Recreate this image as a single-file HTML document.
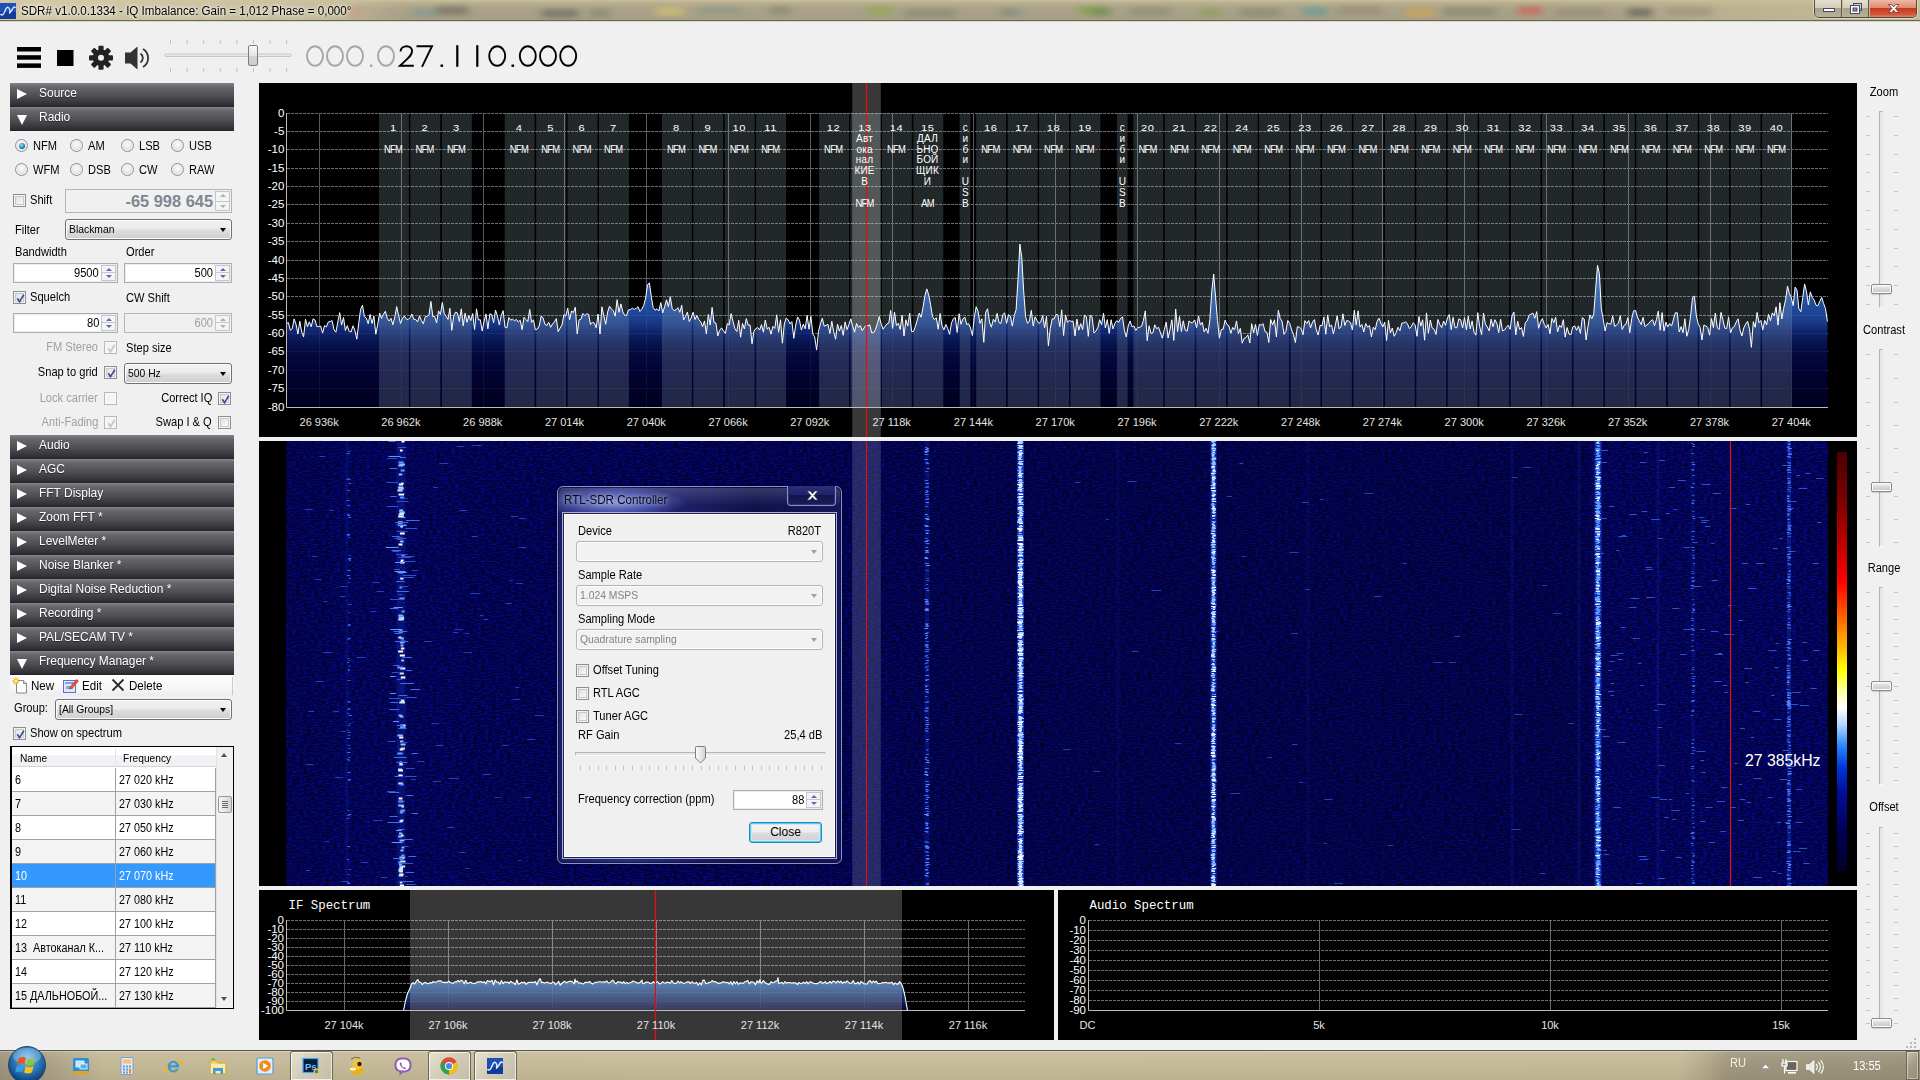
<!DOCTYPE html>
<html><head><meta charset="utf-8"><title>SDR#</title>
<style>
*{box-sizing:border-box;margin:0;padding:0}
html,body{width:1920px;height:1080px;overflow:hidden;background:#f0f0f0;font-family:"Liberation Sans",sans-serif;font-size:11px;color:#000}
.a{position:absolute}
.t{position:absolute;white-space:nowrap;line-height:14px;height:14px;transform:scaleX(.925);transform-origin:0 0}
.t.r{transform-origin:100% 0}
.g{color:#a0a0a0}
.hd{position:absolute;left:10px;width:224px;height:24px;background:linear-gradient(#86868a 0%,#6a6a6e 12%,#4d4d52 55%,#2e2e34 92%,#222228 100%);color:#fff;font-size:13px;line-height:20px;padding-left:29px;white-space:nowrap;text-shadow:0 1px 1px rgba(0,0,0,.5)}
.hd span{display:inline-block;transform:scaleX(.92);transform-origin:0 50%}
.hd i{position:absolute;left:7px;top:6px;width:0;height:0;border-left:10px solid #fff;border-top:5.5px solid transparent;border-bottom:5.5px solid transparent}
.hd i.d{left:7px;top:8px;border-top:10px solid #fff;border-left:5.5px solid transparent;border-right:5.5px solid transparent;border-bottom:0}
.rb{position:absolute;width:13px;height:13px;border-radius:50%;border:1px solid #8e8f8f;background:radial-gradient(circle at 50% 40%,#fdfdfd 0%,#e9e9e9 45%,#c8c8c8 100%);box-shadow:inset 0 0 0 1px #f3f3f3}
.rb.on:after{content:"";position:absolute;left:2.5px;top:2.5px;width:6px;height:6px;border-radius:50%;background:radial-gradient(circle at 40% 35%,#8fe0f7,#1c7fb5 60%,#0b3e66)}
.cb{position:absolute;width:13px;height:13px;border:1px solid #8e8f8f;background:linear-gradient(135deg,#d8d8d8,#f6f6f6 70%,#fff);box-shadow:inset 0 0 0 1px #f4f4f4, inset 0 0 0 2px #c9c9c9}
.cb.dis{border-color:#b8b8b8;background:#f4f4f4;box-shadow:inset 0 0 0 1px #fafafa}
.cb svg{position:absolute;left:1px;top:1px}
.nb{position:absolute;height:20px;border:1px solid #abadb3;background:#fff;box-shadow:inset 0 0 0 1px #e9ecf0}
.nb.dis{background:#f0f0f0;border-color:#b5b5b5;box-shadow:none}
.nb .v{position:absolute;right:18px;top:2px;line-height:14px;font-size:12px;transform:scaleX(.925);transform-origin:100% 0}
.nb .sp{position:absolute;right:1px;top:1px;width:15px;height:16px;border:1px solid #c6c6c6;background:#f4f4f4}
.nb .sp:before{content:"";position:absolute;left:3.5px;top:2px;border-left:3px solid transparent;border-right:3px solid transparent;border-bottom:3px solid #5a6cb4}
.nb .sp:after{content:"";position:absolute;left:3.5px;bottom:2px;border-left:3px solid transparent;border-right:3px solid transparent;border-top:3px solid #5a6cb4}
.nb .sp i{position:absolute;left:0;right:0;top:6px;height:1px;background:#c6c6c6}
.nb.dis .sp:before{border-bottom-color:#b0b0b0}.nb.dis .sp:after{border-top-color:#b0b0b0}
.co span{display:inline-block;transform:scaleX(.9);transform-origin:0 50%}
.co{position:absolute;height:21px;border:1px solid #707070;border-radius:3px;background:linear-gradient(#f2f2f2 0%,#ebebeb 48%,#dddddd 52%,#cfcfcf 100%);box-shadow:inset 0 0 0 1px #fcfcfc;font-size:11.5px;line-height:18px;padding-left:3px;white-space:nowrap}
.co:after{content:"";position:absolute;right:5px;top:8px;border-left:3.5px solid transparent;border-right:3.5px solid transparent;border-top:4px solid #000}
.co.dis{border-color:#b4b4b4;background:#f2f2f2;color:#838383}
.co.dis:after{border-top-color:#a0a0a0}
.blk{position:absolute;background:#000}
.vs{position:absolute;width:4px;border:1px solid #b0b0b0;border-right-color:#e8e8e8;border-bottom-color:#fff;background:#e7e7e7;border-radius:1px}
.vt{position:absolute;width:21px;height:10px;border:1px solid #8a8a8a;border-radius:2px;background:linear-gradient(#f8f8f8,#d8d8d8 50%,#c8c8c8);box-shadow:inset 0 0 0 1px #fcfcfc,0 1px 1px rgba(0,0,0,.15)}
.tk{position:absolute;width:4px;height:1px;background:#c4c4c4}
</style></head><body>
<div class="a" id="tb" style="left:0;top:0;width:1920px;height:22px;background:linear-gradient(#c8be9a 0%,#b8ae8e 15%,#aaa289 40%,#a59e87 100%)">
<div class="a" style="left:0;top:0;width:1920px;height:22px;background:linear-gradient(90deg,rgba(214,204,170,.9) 0%,rgba(205,195,160,.75) 17%,rgba(190,180,150,0) 21%,rgba(190,180,150,0) 84%,rgba(200,190,152,.55) 90%,rgba(205,194,156,.8) 100%)"></div>
<svg class="a" style="left:0;top:0" width="1920" height="20" viewBox="0 0 1920 20"><defs><filter id="bl" x="-10%" y="-50%" width="120%" height="200%"><feGaussianBlur stdDeviation="4 2"/></filter></defs><g filter="url(#bl)" opacity=".6"><rect x="347" y="7" width="16" height="9" fill="#c89a86"/><rect x="413" y="8" width="24" height="9" fill="#7f9a94"/><rect x="436" y="6" width="32" height="9" fill="#6f6a5c"/><rect x="542" y="9" width="36" height="9" fill="#6a6658"/><rect x="590" y="9" width="20" height="9" fill="#8a8470"/><rect x="656" y="7" width="28" height="9" fill="#d8c66a"/><rect x="698" y="6" width="44" height="9" fill="#8e9a84"/><rect x="770" y="6" width="20" height="9" fill="#8a8672"/><rect x="868" y="6" width="24" height="9" fill="#8fa84e"/><rect x="905" y="9" width="50" height="9" fill="#8a8672"/><rect x="1000" y="8" width="20" height="9" fill="#7f8a7a"/><rect x="1078" y="6" width="24" height="9" fill="#7ea83e"/><rect x="1130" y="7" width="40" height="9" fill="#8f8a74"/><rect x="1200" y="8" width="20" height="9" fill="#8aa04e"/><rect x="1240" y="8" width="40" height="9" fill="#8c8670"/><rect x="1303" y="7" width="24" height="9" fill="#5f9a9c"/><rect x="1338" y="6" width="44" height="9" fill="#948c74"/><rect x="1406" y="8" width="28" height="9" fill="#d8a44e"/><rect x="1444" y="7" width="52" height="9" fill="#8a846e"/><rect x="1518" y="6" width="24" height="9" fill="#d05a52"/><rect x="1556" y="8" width="48" height="9" fill="#948c76"/><rect x="1628" y="8" width="24" height="9" fill="#5e5a4e"/><rect x="1668" y="7" width="44" height="9" fill="#9a927a"/><rect x="1090" y="7" width="20" height="9" fill="#5f8a3a"/></g></svg>
<div class="a" style="left:0;top:20px;width:1920px;height:1px;background:#6e6752"></div>
<div class="a" style="left:0;top:21px;width:1920px;height:1px;background:#d9d4c4"></div>
<svg class="a" style="left:0;top:3px" width="16" height="16" viewBox="0 0 16 16"><rect width="16" height="16" fill="#1c50b8"/><rect y="9" width="16" height="7" fill="#123c96"/><path d="M0.5 11 C2 13,3.5 12,5 8 S8 3,9.5 6 S8 12,10.5 9 S13.5 2,15.5 5" fill="none" stroke="#dfe8f5" stroke-width="1.3"/></svg>
<div class="t" style="left:21px;top:4px;font-size:12px;transform:scaleX(.967);color:#000;text-shadow:0 0 6px #fff,0 0 3px #fff">SDR# v1.0.0.1334 - IQ Imbalance: Gain = 1,012 Phase = 0,000&deg;</div>
<!-- caption buttons -->
<div class="a" style="left:1814px;top:0;width:103px;height:18px;border:1px solid #4d4a40;border-top:0;border-radius:0 0 5px 5px;overflow:hidden;box-shadow:0 0 0 1px rgba(255,255,255,.45)">
<div class="a" style="left:0;top:0;width:27px;height:17px;background:linear-gradient(#e4dfcf 0%,#d5cfbb 45%,#aaa28a 50%,#b9b199 100%);border-right:1px solid #5d594b"></div>
<div class="a" style="left:28px;top:0;width:26px;height:17px;background:linear-gradient(#e4dfcf 0%,#d5cfbb 45%,#aaa28a 50%,#b9b199 100%);border-right:1px solid #5d594b"></div>
<div class="a" style="left:55px;top:0;width:47px;height:17px;background:linear-gradient(#f0b9a6 0%,#e08a72 45%,#c8391c 50%,#d0583a 85%,#e0866a 100%)"></div>
<svg class="a" style="left:0;top:0" width="102" height="17" viewBox="0 0 102 17"><rect x="8.5" y="8.5" width="11" height="3" fill="#fff" stroke="#454a63" stroke-width="1"/><rect x="38.500" y="3.500" width="8" height="7" fill="none" stroke="#454a63" stroke-width="1.0"/><rect x="35.500" y="5.500" width="9" height="8" fill="#fff" stroke="#454a63" stroke-width="1"/><rect x="38" y="8" width="4" height="3" fill="#9a937c" stroke="#454a63" stroke-width="1"/><path d="M73.5 4.500 l3.200 0 l2 2.400 l2 -2.400 l3.200 0 l-3.500 4 l3.500 4 l-3.200 0 l-2 -2.400 l-2 2.400 l-3.200 0 l3.500 -4 z" fill="#fff" stroke="#5a3a3a" stroke-width="0.800"/></svg>
</div>
</div>
<svg class="a" style="left:0;top:36px" width="300" height="44" viewBox="0 36 300 44">
<rect x="17" y="47" width="24" height="4.500" fill="#000"/><rect x="17" y="55.200" width="24" height="4.500" fill="#000"/><rect x="17" y="63.400" width="24" height="4.500" fill="#000"/>
<rect x="57" y="50" width="16.500" height="16" fill="#000"/>
<g transform="translate(101,57.800)" fill="#222">
<circle r="8.200"/>
<g id="th"><rect x="-2.600" y="-12" width="5.200" height="6" rx="1"/></g>
<use href="#th" transform="rotate(45)"/><use href="#th" transform="rotate(90)"/><use href="#th" transform="rotate(135)"/><use href="#th" transform="rotate(180)"/><use href="#th" transform="rotate(225)"/><use href="#th" transform="rotate(270)"/><use href="#th" transform="rotate(315)"/>
<circle r="3" fill="#f0f0f0"/></g>
<path d="M125 52.500 h5.500 l7 -6 v23 l-7 -6 h-5.500 z" fill="#333"/>
<path d="M140.500 53.500 a5.500 5.500 0 0 1 0 9" fill="none" stroke="#333" stroke-width="1.800"/>
<path d="M143 49 a10.500 10.500 0 0 1 0 18" fill="none" stroke="#333" stroke-width="1.800"/>
<g stroke="#c2c2c2" stroke-width="1"><path d="M170.5 40v4M170.5 68v4"/><path d="M187.1 40v4M187.1 68v4"/><path d="M203.7 40v4M203.7 68v4"/><path d="M220.3 40v4M220.3 68v4"/><path d="M236.9 40v4M236.9 68v4"/><path d="M253.5 40v4M253.5 68v4"/><path d="M270.1 40v4M270.1 68v4"/><path d="M286.7 40v4M286.7 68v4"/></g>
<rect x="165" y="54" width="126" height="2.500" rx="1" fill="#e9e9e9" stroke="#bcbcbc" stroke-width=".8"/>
<rect x="248.500" y="45.500" width="9" height="20" rx="1.500" fill="url(#thg)" stroke="#7d7d7d"/>
<defs><linearGradient id="thg" x1="0" y1="0" x2="0" y2="1"><stop offset="0" stop-color="#fafafa"/><stop offset=".5" stop-color="#e6e6e6"/><stop offset=".55" stop-color="#d2d2d2"/><stop offset="1" stop-color="#cdcdcd"/></linearGradient></defs>
</svg>
<svg class="a" style="left:300px;top:40px" width="290" height="34" viewBox="300 40 290 34"><ellipse cx="315.0" cy="56" rx="8" ry="9.800" fill="none" stroke="#a6a6a6" stroke-width="1.900"/><ellipse cx="335.0" cy="56" rx="8" ry="9.800" fill="none" stroke="#a6a6a6" stroke-width="1.900"/><ellipse cx="355.0" cy="56" rx="8" ry="9.800" fill="none" stroke="#a6a6a6" stroke-width="1.900"/><rect x="370" y="64.500" width="2.400" height="2.400" fill="#a6a6a6"/><ellipse cx="386.0" cy="56" rx="8" ry="9.800" fill="none" stroke="#a6a6a6" stroke-width="1.900"/><path d="M400.500 51.500 C401 44.500,412.500 44.500,412 51.500 C412 55.500,408 58,400 65.800 H413.800" fill="none" stroke="#000" stroke-width="1.900"/><path d="M416.500 46.200 H432 L422 66.800" fill="none" stroke="#000" stroke-width="1.900"/><rect x="440.500" y="64.500" width="2.600" height="2.400" fill="#000"/><rect x="456.200" y="45.200" width="2.200" height="21.600" fill="#000"/><rect x="476.200" y="45.200" width="2.200" height="21.600" fill="#000"/><ellipse cx="497.2" cy="56" rx="8" ry="9.800" fill="none" stroke="#000" stroke-width="1.900"/><rect x="511.500" y="64.500" width="2.600" height="2.400" fill="#000"/><ellipse cx="527.8" cy="56" rx="8" ry="9.800" fill="none" stroke="#000" stroke-width="1.900"/><ellipse cx="548.0" cy="56" rx="8" ry="9.800" fill="none" stroke="#000" stroke-width="1.900"/><ellipse cx="568.2" cy="56" rx="8" ry="9.800" fill="none" stroke="#000" stroke-width="1.900"/></svg>
<div class="hd" style="top:83px"><i></i><span>Source</span></div>
<div class="hd" style="top:107px"><i class="d"></i><span>Radio</span></div>
<div class="rb on" style="left:15px;top:139px"></div><div class="t" style="left:33px;top:139px;font-size:12px">NFM</div><div class="rb" style="left:15px;top:163px"></div><div class="t" style="left:33px;top:163px;font-size:12px">WFM</div>
<div class="rb" style="left:70px;top:139px"></div><div class="t" style="left:88px;top:139px;font-size:12px">AM</div><div class="rb" style="left:70px;top:163px"></div><div class="t" style="left:88px;top:163px;font-size:12px">DSB</div>
<div class="rb" style="left:121px;top:139px"></div><div class="t" style="left:139px;top:139px;font-size:12px">LSB</div><div class="rb" style="left:121px;top:163px"></div><div class="t" style="left:139px;top:163px;font-size:12px">CW</div>
<div class="rb" style="left:171px;top:139px"></div><div class="t" style="left:189px;top:139px;font-size:12px">USB</div><div class="rb" style="left:171px;top:163px"></div><div class="t" style="left:189px;top:163px;font-size:12px">RAW</div>
<div class="cb" style="left:13px;top:194px"></div><div class="t" style="left:30px;top:193px;font-size:12px">Shift</div><div class="nb dis" style="left:65px;top:189px;width:167px;height:24px"><div class="v" style="font-size:16.400px;font-weight:bold;color:#7f8790;top:4px;right:18px;transform:none">-65 998 645</div><div class="sp" style="height:20px"><i style="top:9px"></i></div></div>
<div class="t" style="left:15px;top:223px;font-size:12px">Filter</div><div class="co" style="left:65px;top:219px;width:167px"><span>Blackman</span></div>
<div class="t" style="left:15px;top:245px;font-size:12px">Bandwidth</div><div class="t" style="left:126px;top:245px;font-size:12px">Order</div><div class="nb" style="left:13px;top:263px;width:105px"><div class="v">9500</div><div class="sp"><i></i></div></div><div class="nb" style="left:124px;top:263px;width:108px"><div class="v">500</div><div class="sp"><i></i></div></div>
<div class="cb" style="left:13px;top:291px"><svg width="11" height="11" viewBox="0 0 11 11"><path d="M2.300 5.200 L4.500 8.600 L8.800 1.800" fill="none" stroke="#3c4e9a" stroke-width="1.700"/></svg></div><div class="t" style="left:30px;top:290px;font-size:12px">Squelch</div><div class="t" style="left:126px;top:291px;font-size:12px">CW Shift</div><div class="nb" style="left:13px;top:313px;width:105px"><div class="v">80</div><div class="sp"><i></i></div></div><div class="nb dis" style="left:124px;top:313px;width:108px"><div class="v g">600</div><div class="sp"><i></i></div></div>
<div class="t r g" style="right:1822px;top:340px;font-size:12px">FM Stereo</div><div class="cb dis" style="left:104px;top:341px"><svg width="11" height="11" viewBox="0 0 11 11"><path d="M2.300 5.200 L4.500 8.600 L8.800 1.800" fill="none" stroke="#c4c4c4" stroke-width="1.700"/></svg></div><div class="t" style="left:126px;top:341px;font-size:12px">Step size</div>
<div class="t r" style="right:1822px;top:365px;font-size:12px">Snap to grid</div><div class="cb" style="left:104px;top:366px"><svg width="11" height="11" viewBox="0 0 11 11"><path d="M2.300 5.200 L4.500 8.600 L8.800 1.800" fill="none" stroke="#3c4e9a" stroke-width="1.700"/></svg></div><div class="co" style="left:124px;top:363px;width:108px"><span>500 Hz</span></div>
<div class="t r g" style="right:1822px;top:391px;font-size:12px">Lock carrier</div><div class="cb dis" style="left:104px;top:392px"></div><div class="t r" style="right:1708px;top:391px;font-size:12px">Correct IQ</div><div class="cb" style="left:218px;top:392px"><svg width="11" height="11" viewBox="0 0 11 11"><path d="M2.300 5.200 L4.500 8.600 L8.800 1.800" fill="none" stroke="#3c4e9a" stroke-width="1.700"/></svg></div>
<div class="t r g" style="right:1822px;top:415px;font-size:12px">Anti-Fading</div><div class="cb dis" style="left:104px;top:416px"><svg width="11" height="11" viewBox="0 0 11 11"><path d="M2.300 5.200 L4.500 8.600 L8.800 1.800" fill="none" stroke="#c4c4c4" stroke-width="1.700"/></svg></div><div class="t r" style="right:1708px;top:415px;font-size:12px">Swap I &amp; Q</div><div class="cb" style="left:218px;top:416px"></div>
<div class="hd" style="top:435px"><i></i><span>Audio</span></div>
<div class="hd" style="top:459px"><i></i><span>AGC</span></div>
<div class="hd" style="top:483px"><i></i><span>FFT Display</span></div>
<div class="hd" style="top:507px"><i></i><span>Zoom FFT *</span></div>
<div class="hd" style="top:531px"><i></i><span>LevelMeter *</span></div>
<div class="hd" style="top:555px"><i></i><span>Noise Blanker *</span></div>
<div class="hd" style="top:579px"><i></i><span>Digital Noise Reduction *</span></div>
<div class="hd" style="top:603px"><i></i><span>Recording *</span></div>
<div class="hd" style="top:627px"><i></i><span>PAL/SECAM TV *</span></div>
<div class="hd" style="top:651px"><i class="d"></i><span>Frequency Manager *</span></div>
<div class="a" style="left:10px;top:675px;width:224px;height:21px;background:linear-gradient(#fdfdfd,#f7f7f7 60%,#ececec)"></div>
<div class="a" style="left:232px;top:677px;width:1px;height:18px;background:#c8c8c8"></div>
<svg class="a" style="left:12px;top:677px" width="16" height="17" viewBox="0 0 16 17"><path d="M4.500 3.500 h7 l3 3 v9.500 h-10 z" fill="#fdfdfd" stroke="#7b8796"/><path d="M11.500 3.500 v3 h3" fill="#dfe6ee" stroke="#7b8796"/><circle cx="4" cy="4" r="2.200" fill="#ffd21c"/><path d="M4 0v8M0 4h8M1.200 1.200l5.600 5.600M6.800 1.200l-5.600 5.600" stroke="#f7a600" stroke-width="1"/><circle cx="4" cy="4" r="1.400" fill="#fff3a0"/></svg>
<div class="t" style="left:31px;top:679px;font-size:12.5px">New</div>
<svg class="a" style="left:62px;top:677px" width="17" height="17" viewBox="0 0 17 17"><rect x="1.500" y="3.500" width="12" height="12" fill="#dfe9fb" stroke="#5576c9"/><rect x="3" y="5" width="9" height="2" fill="#7f9fe6"/><rect x="4" y="9" width="7" height="3" fill="#8aa6e8"/><path d="M8 10 L14.500 2.500 L16.500 4 L10 11.500 L7.500 12 z" fill="#e8513a" stroke="#b53320" stroke-width=".6"/></svg>
<div class="t" style="left:82px;top:679px;font-size:12.5px">Edit</div>
<svg class="a" style="left:111px;top:678px" width="14" height="14" viewBox="0 0 14 14"><path d="M1.500 1.500 L12.500 12.500 M12.500 1.500 L1.500 12.500" stroke="#2b2b2b" stroke-width="1.800"/></svg>
<div class="t" style="left:129px;top:679px;font-size:12.500px">Delete</div>
<div class="t" style="left:14px;top:701px;font-size:12px">Group:</div>
<div class="co" style="left:55px;top:699px;width:177px"><span>[All Groups]</span></div>
<div class="cb" style="left:13px;top:727px"><svg width="11" height="11" viewBox="0 0 11 11"><path d="M2.300 5.200 L4.500 8.600 L8.800 1.800" fill="none" stroke="#3c4e9a" stroke-width="1.700"/></svg></div><div class="t" style="left:30px;top:726px;font-size:12px">Show on spectrum</div>
<div class="a" style="left:10px;top:746px;width:224px;height:263px;border:1px solid #000;border-left-width:2px;background:#fff"></div><div class="a" style="left:12px;top:747px;width:204px;height:20px;background:linear-gradient(#fff 0%,#fff 40%,#f2f3f5 45%,#eef0f3 100%);border-bottom:1px solid #d5d5d5"></div><div class="a" style="left:115px;top:749px;width:1px;height:16px;background:#e0e3e8"></div><div class="t" style="left:20px;top:751px">Name</div><div class="t" style="left:123px;top:751px">Frequency</div><div class="a" style="left:216px;top:747px;width:17px;height:261px;background:#f0f0f0;border-left:1px solid #e3e3e3"></div><div class="a" style="left:221px;top:753px;width:0;height:0;border-left:3.500px solid transparent;border-right:3.500px solid transparent;border-bottom:4px solid #505050"></div><div class="a" style="left:221px;top:997px;width:0;height:0;border-left:3.500px solid transparent;border-right:3.500px solid transparent;border-top:4px solid #505050"></div><div class="a" style="left:218px;top:796px;width:14px;height:17px;border:1px solid #979797;border-radius:2px;background:linear-gradient(90deg,#f5f5f5,#e6e6e6 50%,#d2d2d2)"><div class="a" style="left:3px;top:4px;width:6px;height:1px;background:#6a6a6a;box-shadow:0 2px 0 #6a6a6a,0 4px 0 #6a6a6a,0 6px 0 #6a6a6a"></div></div><div class="a" style="left:12px;top:768px;width:204px;height:24px;background:#ffffff;border-bottom:1px solid #a0a0a0"></div><div class="t" style="left:15px;top:773px;color:#000;font-size:12px;transform:scaleX(.9)">6</div><div class="t" style="left:119px;top:773px;color:#000;font-size:12px;transform:scaleX(.9)">27 020 kHz</div>
<div class="a" style="left:12px;top:792px;width:204px;height:24px;background:#f3f3f3;border-bottom:1px solid #a0a0a0"></div><div class="t" style="left:15px;top:797px;color:#000;font-size:12px;transform:scaleX(.9)">7</div><div class="t" style="left:119px;top:797px;color:#000;font-size:12px;transform:scaleX(.9)">27 030 kHz</div>
<div class="a" style="left:12px;top:816px;width:204px;height:24px;background:#ffffff;border-bottom:1px solid #a0a0a0"></div><div class="t" style="left:15px;top:821px;color:#000;font-size:12px;transform:scaleX(.9)">8</div><div class="t" style="left:119px;top:821px;color:#000;font-size:12px;transform:scaleX(.9)">27 050 kHz</div>
<div class="a" style="left:12px;top:840px;width:204px;height:24px;background:#f3f3f3;border-bottom:1px solid #a0a0a0"></div><div class="t" style="left:15px;top:845px;color:#000;font-size:12px;transform:scaleX(.9)">9</div><div class="t" style="left:119px;top:845px;color:#000;font-size:12px;transform:scaleX(.9)">27 060 kHz</div>
<div class="a" style="left:12px;top:864px;width:204px;height:24px;background:#3399ff;border-bottom:1px solid #a0a0a0"></div><div class="t" style="left:15px;top:869px;color:#fff;font-size:12px;transform:scaleX(.9)">10</div><div class="t" style="left:119px;top:869px;color:#fff;font-size:12px;transform:scaleX(.9)">27 070 kHz</div>
<div class="a" style="left:12px;top:888px;width:204px;height:24px;background:#f3f3f3;border-bottom:1px solid #a0a0a0"></div><div class="t" style="left:15px;top:893px;color:#000;font-size:12px;transform:scaleX(.9)">11</div><div class="t" style="left:119px;top:893px;color:#000;font-size:12px;transform:scaleX(.9)">27 080 kHz</div>
<div class="a" style="left:12px;top:912px;width:204px;height:24px;background:#ffffff;border-bottom:1px solid #a0a0a0"></div><div class="t" style="left:15px;top:917px;color:#000;font-size:12px;transform:scaleX(.9)">12</div><div class="t" style="left:119px;top:917px;color:#000;font-size:12px;transform:scaleX(.9)">27 100 kHz</div>
<div class="a" style="left:12px;top:936px;width:204px;height:24px;background:#f3f3f3;border-bottom:1px solid #a0a0a0"></div><div class="t" style="left:15px;top:941px;color:#000;font-size:12px;transform:scaleX(.9)">13&nbsp; &#1040;&#1074;&#1090;&#1086;&#1082;&#1072;&#1085;&#1072;&#1083; &#1050;...</div><div class="t" style="left:119px;top:941px;color:#000;font-size:12px;transform:scaleX(.9)">27 110 kHz</div>
<div class="a" style="left:12px;top:960px;width:204px;height:24px;background:#ffffff;border-bottom:1px solid #a0a0a0"></div><div class="t" style="left:15px;top:965px;color:#000;font-size:12px;transform:scaleX(.9)">14</div><div class="t" style="left:119px;top:965px;color:#000;font-size:12px;transform:scaleX(.9)">27 120 kHz</div>
<div class="a" style="left:12px;top:984px;width:204px;height:24px;background:#f3f3f3;border-bottom:1px solid #a0a0a0"></div><div class="t" style="left:15px;top:989px;color:#000;font-size:12px;transform:scaleX(.9)">15 &#1044;&#1040;&#1051;&#1068;&#1053;&#1054;&#1041;&#1054;&#1049;...</div><div class="t" style="left:119px;top:989px;color:#000;font-size:12px;transform:scaleX(.9)">27 130 kHz</div>
<div class="a" style="left:115px;top:768px;width:1px;height:240px;background:#a0a0a0"></div><div class="a" style="left:215px;top:768px;width:1px;height:240px;background:#a0a0a0"></div>
<div class="blk" style="left:259px;top:83px;width:1598px;height:354px"></div><svg class="a" style="left:259px;top:83px" width="1598" height="354" viewBox="259 83 1598 354" font-family="Liberation Sans,sans-serif"><defs><linearGradient id="sg" gradientUnits="userSpaceOnUse" x1="0" y1="113" x2="0" y2="407"><stop offset="0" stop-color="#8cc4ff"/><stop offset=".45" stop-color="#4390ed"/><stop offset=".5625" stop-color="#3374cf"/><stop offset=".6875" stop-color="#214dac"/><stop offset=".72" stop-color="#1a3e94"/><stop offset=".75" stop-color="#0f2579"/><stop offset=".78" stop-color="#09175d"/><stop offset=".8125" stop-color="#060c4a"/><stop offset=".875" stop-color="#03033c"/><stop offset="1" stop-color="#000025"/></linearGradient></defs><path d="M287 113.5H1828" stroke="#808080" stroke-width="1" stroke-dasharray="3 1" opacity=".85"/><path d="M287 131.5H1828" stroke="#808080" stroke-width="1" stroke-dasharray="3 1" opacity=".85"/><path d="M287 149.5H1828" stroke="#808080" stroke-width="1" stroke-dasharray="3 1" opacity=".85"/><path d="M287 168.5H1828" stroke="#808080" stroke-width="1" stroke-dasharray="3 1" opacity=".85"/><path d="M287 186.5H1828" stroke="#808080" stroke-width="1" stroke-dasharray="3 1" opacity=".85"/><path d="M287 204.5H1828" stroke="#808080" stroke-width="1" stroke-dasharray="3 1" opacity=".85"/><path d="M287 223.5H1828" stroke="#808080" stroke-width="1" stroke-dasharray="3 1" opacity=".85"/><path d="M287 241.5H1828" stroke="#808080" stroke-width="1" stroke-dasharray="3 1" opacity=".85"/><path d="M287 260.5H1828" stroke="#808080" stroke-width="1" stroke-dasharray="3 1" opacity=".85"/><path d="M287 278.5H1828" stroke="#808080" stroke-width="1" stroke-dasharray="3 1" opacity=".85"/><path d="M287 296.5H1828" stroke="#808080" stroke-width="1" stroke-dasharray="3 1" opacity=".85"/><path d="M287 315.5H1828" stroke="#808080" stroke-width="1" stroke-dasharray="3 1" opacity=".85"/><path d="M287 333.5H1828" stroke="#808080" stroke-width="1" stroke-dasharray="3 1" opacity=".85"/><path d="M287 351.5H1828" stroke="#808080" stroke-width="1" stroke-dasharray="3 1" opacity=".85"/><path d="M287 370.5H1828" stroke="#808080" stroke-width="1" stroke-dasharray="3 1" opacity=".85"/><path d="M287 388.5H1828" stroke="#808080" stroke-width="1" stroke-dasharray="3 1" opacity=".85"/><path d="M287 407.5H1828" stroke="#808080" stroke-width="1" stroke-dasharray="3 1" opacity=".85"/><path d="M319.5 113V407" stroke="#5c5c5c" stroke-width="1"/><path d="M401.5 113V407" stroke="#5c5c5c" stroke-width="1"/><path d="M483.5 113V407" stroke="#5c5c5c" stroke-width="1"/><path d="M564.5 113V407" stroke="#5c5c5c" stroke-width="1"/><path d="M646.5 113V407" stroke="#5c5c5c" stroke-width="1"/><path d="M728.5 113V407" stroke="#5c5c5c" stroke-width="1"/><path d="M810.5 113V407" stroke="#5c5c5c" stroke-width="1"/><path d="M892.5 113V407" stroke="#5c5c5c" stroke-width="1"/><path d="M973.5 113V407" stroke="#5c5c5c" stroke-width="1"/><path d="M1055.5 113V407" stroke="#5c5c5c" stroke-width="1"/><path d="M1137.5 113V407" stroke="#5c5c5c" stroke-width="1"/><path d="M1219.5 113V407" stroke="#5c5c5c" stroke-width="1"/><path d="M1301.5 113V407" stroke="#5c5c5c" stroke-width="1"/><path d="M1382.5 113V407" stroke="#5c5c5c" stroke-width="1"/><path d="M1464.5 113V407" stroke="#5c5c5c" stroke-width="1"/><path d="M1546.5 113V407" stroke="#5c5c5c" stroke-width="1"/><path d="M1628.5 113V407" stroke="#5c5c5c" stroke-width="1"/><path d="M1710.5 113V407" stroke="#5c5c5c" stroke-width="1"/><path d="M1791.5 113V407" stroke="#5c5c5c" stroke-width="1"/><path d="M286.5 323.5 L288.4 322.6 L290.3 330.2 L292.2 328.8 L294.1 318.9 L296.0 324.1 L297.9 334.0 L299.8 321.3 L301.7 332.0 L303.6 336.9 L305.5 319.2 L307.4 326.7 L309.3 321.8 L311.2 326.7 L313.1 318.8 L315.0 320.0 L316.9 326.6 L318.8 326.5 L320.7 326.0 L322.6 333.1 L324.5 325.7 L326.4 326.8 L328.3 322.0 L330.2 321.5 L332.1 320.6 L334.0 329.8 L335.9 332.2 L337.8 322.1 L339.7 312.6 L341.6 325.0 L343.5 317.4 L345.4 330.5 L347.3 325.6 L349.2 331.5 L351.1 331.9 L353.0 325.8 L354.9 330.5 L356.8 339.2 L358.7 323.4 L360.6 309.3 L362.5 305.2 L364.4 316.6 L366.3 318.0 L368.2 323.7 L370.1 314.4 L372.0 323.5 L373.9 316.0 L375.8 334.2 L377.7 324.6 L379.6 313.1 L381.5 318.4 L383.4 314.2 L385.3 311.3 L387.2 318.2 L389.1 321.0 L391.0 318.3 L392.9 324.8 L394.8 316.9 L396.7 306.6 L398.6 315.5 L400.5 323.4 L402.4 318.7 L404.3 316.1 L406.2 318.9 L408.1 319.7 L410.0 317.7 L411.9 314.0 L413.8 319.3 L415.7 319.4 L417.6 321.9 L419.5 315.9 L421.4 320.5 L423.3 323.9 L425.2 316.9 L427.1 316.3 L429.0 314.8 L430.9 301.4 L432.8 316.5 L434.7 316.6 L436.6 322.9 L438.5 310.9 L440.4 314.5 L442.3 302.4 L444.2 313.3 L446.1 316.3 L448.0 319.4 L449.9 308.3 L451.8 330.3 L453.7 316.0 L455.6 312.1 L457.5 313.1 L459.4 321.6 L461.3 308.8 L463.2 325.8 L465.1 313.2 L467.0 322.3 L468.9 315.6 L470.8 320.6 L472.7 313.5 L474.6 329.5 L476.5 308.8 L478.4 320.0 L480.3 319.7 L482.2 331.0 L484.1 321.2 L486.0 313.9 L487.9 328.8 L489.8 313.9 L491.7 314.5 L493.6 322.7 L495.5 310.1 L497.4 315.9 L499.3 324.9 L501.2 315.5 L503.1 310.6 L505.0 327.2 L506.9 327.9 L508.8 317.6 L510.7 320.1 L512.6 319.2 L514.5 320.8 L516.4 319.4 L518.3 322.0 L520.2 320.2 L522.1 329.6 L524.0 317.2 L525.9 319.6 L527.8 321.6 L529.7 309.4 L531.6 322.4 L533.5 319.8 L535.4 329.8 L537.3 329.0 L539.2 326.1 L541.1 316.2 L543.0 317.7 L544.9 324.3 L546.8 325.5 L548.7 322.3 L550.6 327.3 L552.5 324.0 L554.4 321.9 L556.3 318.6 L558.2 331.7 L560.1 328.1 L562.0 325.0 L563.9 314.6 L565.8 316.2 L567.7 308.0 L569.6 319.8 L571.5 311.0 L573.4 312.5 L575.3 307.2 L577.2 333.8 L579.1 319.8 L581.0 319.2 L582.9 313.5 L584.8 315.6 L586.7 313.9 L588.6 314.3 L590.5 324.5 L592.4 322.3 L594.3 323.1 L596.2 327.8 L598.1 314.0 L600.0 334.0 L601.9 306.8 L603.8 315.6 L605.7 324.3 L607.6 312.1 L609.5 306.2 L611.4 309.1 L613.3 310.7 L615.2 316.2 L617.1 299.7 L619.0 312.3 L620.9 303.9 L622.8 311.9 L624.7 315.3 L626.6 315.4 L628.5 309.8 L630.4 309.7 L632.3 308.2 L634.2 309.4 L636.1 308.4 L638.0 306.7 L639.9 311.4 L641.8 309.2 L643.7 305.4 L645.6 298.2 L647.5 284.7 L649.4 283.0 L651.3 296.7 L653.2 307.6 L655.1 310.2 L657.0 308.8 L658.9 310.9 L660.8 302.6 L662.7 312.9 L664.6 306.8 L666.5 299.8 L668.4 306.6 L670.3 296.7 L672.2 308.4 L674.1 310.7 L676.0 309.8 L677.9 307.7 L679.8 312.3 L681.7 305.2 L683.6 319.9 L685.5 316.6 L687.4 312.1 L689.3 321.6 L691.2 317.9 L693.1 312.2 L695.0 319.5 L696.9 315.6 L698.8 319.6 L700.7 321.8 L702.6 326.6 L704.5 320.9 L706.4 333.8 L708.3 314.5 L710.2 325.0 L712.1 307.4 L714.0 322.5 L715.9 323.1 L717.8 335.9 L719.7 330.3 L721.6 327.9 L723.5 331.0 L725.4 333.5 L727.3 323.6 L729.2 324.9 L731.1 313.6 L733.0 321.3 L734.9 328.8 L736.8 331.5 L738.7 320.3 L740.6 337.2 L742.5 323.4 L744.4 328.9 L746.3 318.6 L748.2 325.2 L750.1 325.0 L752.0 343.8 L753.9 331.5 L755.8 328.6 L757.7 327.6 L759.6 330.0 L761.5 324.6 L763.4 332.2 L765.3 320.0 L767.2 329.2 L769.1 327.3 L771.0 334.2 L772.9 326.4 L774.8 328.4 L776.7 314.8 L778.6 332.3 L780.5 319.8 L782.4 343.2 L784.3 324.1 L786.2 318.1 L788.1 319.7 L790.0 323.9 L791.9 321.6 L793.8 338.3 L795.7 325.1 L797.6 316.9 L799.5 320.1 L801.4 330.1 L803.3 324.0 L805.2 328.8 L807.1 315.3 L809.0 329.2 L810.9 316.3 L812.8 334.0 L814.7 336.8 L816.6 350.1 L818.5 331.3 L820.4 323.9 L822.3 318.2 L824.2 326.1 L826.1 325.5 L828.0 324.3 L829.9 333.5 L831.8 321.3 L833.7 331.6 L835.6 339.2 L837.5 324.1 L839.4 331.1 L841.3 325.5 L843.2 335.3 L845.1 321.9 L847.0 329.7 L848.9 324.7 L850.8 318.8 L852.7 326.4 L854.6 332.2 L856.5 323.5 L858.4 327.5 L860.3 325.7 L862.2 330.6 L864.1 327.9 L866.0 325.3 L867.9 325.9 L869.8 324.8 L871.7 332.8 L873.6 332.6 L875.5 329.6 L877.4 323.5 L879.3 316.5 L881.2 324.2 L883.1 329.2 L885.0 326.5 L886.9 323.9 L888.8 323.1 L890.7 310.4 L892.6 328.4 L894.5 312.0 L896.4 325.5 L898.3 323.2 L900.2 329.5 L902.1 315.2 L904.0 336.0 L905.9 319.8 L907.8 326.0 L909.7 313.2 L911.6 331.6 L913.5 331.4 L915.4 326.4 L917.3 320.1 L919.2 313.2 L921.1 317.2 L923.0 307.6 L924.9 295.7 L926.8 288.9 L928.7 294.8 L930.6 304.8 L932.5 316.7 L934.4 319.7 L936.3 317.8 L938.2 329.2 L940.1 313.5 L942.0 325.7 L943.9 329.9 L945.8 324.4 L947.7 328.5 L949.6 334.4 L951.5 322.8 L953.4 318.7 L955.3 317.5 L957.2 332.4 L959.1 313.7 L961.0 324.3 L962.9 319.0 L964.8 317.1 L966.7 324.5 L968.6 323.7 L970.5 328.1 L972.4 335.5 L974.3 317.3 L976.2 306.7 L978.1 311.7 L980.0 323.4 L981.9 318.8 L983.8 342.3 L985.7 312.2 L987.6 308.8 L989.5 322.0 L991.4 327.2 L993.3 319.3 L995.2 322.1 L997.1 313.4 L999.0 322.6 L1000.9 323.4 L1002.8 314.6 L1004.7 312.9 L1006.6 323.3 L1008.5 314.7 L1010.4 316.0 L1012.3 326.1 L1014.2 315.7 L1016.1 309.8 L1018.0 279.2 L1019.9 244.1 L1021.8 257.8 L1023.7 291.5 L1025.6 316.8 L1027.5 323.4 L1029.4 321.1 L1031.3 310.3 L1033.2 326.1 L1035.1 316.8 L1037.0 320.3 L1038.9 323.5 L1040.8 321.9 L1042.7 315.4 L1044.6 327.8 L1046.5 316.4 L1048.4 345.8 L1050.3 328.5 L1052.2 318.8 L1054.1 318.9 L1056.0 314.6 L1057.9 314.8 L1059.8 326.7 L1061.7 309.8 L1063.6 335.5 L1065.5 314.9 L1067.4 322.3 L1069.3 320.5 L1071.2 321.4 L1073.1 321.1 L1075.0 335.9 L1076.9 319.1 L1078.8 330.2 L1080.7 323.6 L1082.6 329.5 L1084.5 315.1 L1086.4 316.5 L1088.3 336.4 L1090.2 315.0 L1092.1 317.1 L1094.0 333.0 L1095.9 331.2 L1097.8 327.6 L1099.7 319.7 L1101.6 324.6 L1103.5 313.1 L1105.4 328.0 L1107.3 319.6 L1109.2 333.4 L1111.1 319.7 L1113.0 328.9 L1114.9 323.3 L1116.8 320.7 L1118.7 322.2 L1120.6 318.4 L1122.5 316.9 L1124.4 330.4 L1126.3 337.0 L1128.2 326.0 L1130.1 320.9 L1132.0 326.8 L1133.9 326.0 L1135.8 330.5 L1137.7 327.7 L1139.6 327.3 L1141.5 326.4 L1143.4 320.5 L1145.3 310.9 L1147.2 340.7 L1149.1 325.8 L1151.0 333.5 L1152.9 332.8 L1154.8 324.8 L1156.7 328.7 L1158.6 327.3 L1160.5 333.0 L1162.4 338.2 L1164.3 329.5 L1166.2 322.1 L1168.1 338.0 L1170.0 329.7 L1171.9 319.8 L1173.8 340.4 L1175.7 309.0 L1177.6 331.6 L1179.5 316.6 L1181.4 331.5 L1183.3 320.8 L1185.2 330.2 L1187.1 331.3 L1189.0 320.9 L1190.9 322.7 L1192.8 322.6 L1194.7 319.9 L1196.6 327.8 L1198.5 315.9 L1200.4 325.0 L1202.3 322.4 L1204.2 331.9 L1206.1 328.3 L1208.0 333.3 L1209.9 319.5 L1211.8 290.7 L1213.7 274.0 L1215.6 297.8 L1217.5 320.5 L1219.4 338.2 L1221.3 329.6 L1223.2 329.2 L1225.1 320.1 L1227.0 324.6 L1228.9 325.8 L1230.8 333.3 L1232.7 327.4 L1234.6 329.9 L1236.5 320.9 L1238.4 333.7 L1240.3 328.3 L1242.2 343.2 L1244.1 338.3 L1246.0 337.6 L1247.9 334.9 L1249.8 343.0 L1251.7 323.7 L1253.6 332.8 L1255.5 324.4 L1257.4 335.4 L1259.3 324.5 L1261.2 325.2 L1263.1 323.7 L1265.0 331.6 L1266.9 332.3 L1268.8 342.5 L1270.7 319.5 L1272.6 324.8 L1274.5 319.8 L1276.4 337.0 L1278.3 310.3 L1280.2 318.4 L1282.1 321.3 L1284.0 334.3 L1285.9 331.3 L1287.8 320.5 L1289.7 323.2 L1291.6 330.0 L1293.5 334.6 L1295.4 342.6 L1297.3 326.7 L1299.2 327.1 L1301.1 328.7 L1303.0 334.8 L1304.9 320.6 L1306.8 323.5 L1308.7 320.5 L1310.6 327.9 L1312.5 322.1 L1314.4 319.6 L1316.3 330.0 L1318.2 335.0 L1320.1 325.3 L1322.0 325.7 L1323.9 317.0 L1325.8 334.2 L1327.7 314.9 L1329.6 326.8 L1331.5 324.9 L1333.4 334.0 L1335.3 325.2 L1337.2 315.8 L1339.1 328.7 L1341.0 326.9 L1342.9 313.8 L1344.8 325.5 L1346.7 320.5 L1348.6 321.0 L1350.5 322.5 L1352.4 330.0 L1354.3 310.2 L1356.2 325.1 L1358.1 310.8 L1360.0 327.1 L1361.9 324.5 L1363.8 332.0 L1365.7 323.5 L1367.6 327.2 L1369.5 325.6 L1371.4 336.9 L1373.3 327.2 L1375.2 329.7 L1377.1 321.4 L1379.0 318.1 L1380.9 323.2 L1382.8 327.0 L1384.7 322.2 L1386.6 340.5 L1388.5 320.3 L1390.4 333.0 L1392.3 328.0 L1394.2 336.3 L1396.1 332.6 L1398.0 327.2 L1399.9 330.9 L1401.8 323.1 L1403.7 322.9 L1405.6 321.8 L1407.5 323.9 L1409.4 328.6 L1411.3 326.8 L1413.2 322.8 L1415.1 324.7 L1417.0 336.3 L1418.9 316.5 L1420.8 326.0 L1422.7 319.8 L1424.6 340.2 L1426.5 312.9 L1428.4 333.2 L1430.3 320.0 L1432.2 328.1 L1434.1 329.2 L1436.0 334.5 L1437.9 319.5 L1439.8 324.6 L1441.7 327.6 L1443.6 321.0 L1445.5 325.3 L1447.4 317.9 L1449.3 314.5 L1451.2 329.6 L1453.1 317.3 L1455.0 327.7 L1456.9 327.7 L1458.8 318.9 L1460.7 319.7 L1462.6 327.9 L1464.5 317.7 L1466.4 329.8 L1468.3 316.2 L1470.2 328.8 L1472.1 320.9 L1474.0 332.2 L1475.9 335.2 L1477.8 312.6 L1479.7 326.7 L1481.6 334.6 L1483.5 313.1 L1485.4 324.1 L1487.3 327.0 L1489.2 330.9 L1491.1 319.1 L1493.0 326.8 L1494.9 319.7 L1496.8 323.3 L1498.7 332.6 L1500.6 319.3 L1502.5 330.9 L1504.4 330.1 L1506.3 327.4 L1508.2 325.1 L1510.1 329.3 L1512.0 315.8 L1513.9 312.0 L1515.8 334.8 L1517.7 321.1 L1519.6 329.4 L1521.5 327.6 L1523.4 336.4 L1525.3 322.6 L1527.2 320.9 L1529.1 315.2 L1531.0 314.2 L1532.9 313.0 L1534.8 318.3 L1536.7 311.6 L1538.6 328.3 L1540.5 322.0 L1542.4 318.5 L1544.3 324.4 L1546.2 328.0 L1548.1 324.5 L1550.0 333.7 L1551.9 318.3 L1553.8 322.7 L1555.7 317.3 L1557.6 332.0 L1559.5 325.3 L1561.4 327.4 L1563.3 319.7 L1565.2 337.1 L1567.1 327.5 L1569.0 334.1 L1570.9 334.7 L1572.8 326.9 L1574.7 325.9 L1576.6 330.3 L1578.5 325.9 L1580.4 333.4 L1582.3 317.7 L1584.2 319.1 L1586.1 340.0 L1588.0 326.3 L1589.9 314.9 L1591.8 318.7 L1593.7 314.6 L1595.6 289.8 L1597.5 265.4 L1599.4 273.7 L1601.3 308.9 L1603.2 318.8 L1605.1 331.0 L1607.0 322.6 L1608.9 323.8 L1610.8 324.2 L1612.7 315.8 L1614.6 326.4 L1616.5 325.1 L1618.4 323.3 L1620.3 315.7 L1622.2 329.5 L1624.1 325.4 L1626.0 324.1 L1627.9 317.6 L1629.8 332.8 L1631.7 318.6 L1633.6 310.9 L1635.5 310.4 L1637.4 317.0 L1639.3 320.9 L1641.2 324.6 L1643.1 317.4 L1645.0 326.7 L1646.9 325.0 L1648.8 323.5 L1650.7 321.0 L1652.6 319.7 L1654.5 325.7 L1656.4 319.7 L1658.3 311.2 L1660.2 330.3 L1662.1 312.6 L1664.0 331.1 L1665.9 322.2 L1667.8 326.9 L1669.7 323.6 L1671.6 326.0 L1673.5 319.1 L1675.4 312.8 L1677.3 312.8 L1679.2 332.0 L1681.1 326.6 L1683.0 332.7 L1684.9 318.8 L1686.8 336.3 L1688.7 329.6 L1690.6 315.9 L1692.5 297.8 L1694.4 296.2 L1696.3 315.6 L1698.2 323.7 L1700.1 327.4 L1702.0 340.0 L1703.9 325.0 L1705.8 325.9 L1707.7 327.4 L1709.6 335.2 L1711.5 318.6 L1713.4 327.5 L1715.3 313.1 L1717.2 327.2 L1719.1 329.5 L1721.0 312.4 L1722.9 319.6 L1724.8 328.2 L1726.7 328.5 L1728.6 316.9 L1730.5 332.9 L1732.4 327.9 L1734.3 326.6 L1736.2 322.1 L1738.1 318.8 L1740.0 330.2 L1741.9 336.0 L1743.8 327.8 L1745.7 324.1 L1747.6 321.3 L1749.5 329.1 L1751.4 347.3 L1753.3 321.7 L1755.2 327.3 L1757.1 312.4 L1759.0 322.7 L1760.9 320.4 L1762.8 329.8 L1764.7 320.3 L1766.6 325.0 L1768.5 314.4 L1770.4 320.7 L1772.3 312.9 L1774.2 315.8 L1776.1 306.8 L1778.0 325.1 L1779.9 302.7 L1781.8 319.0 L1783.7 308.2 L1785.6 299.5 L1787.5 286.0 L1789.4 293.6 L1791.3 297.7 L1793.2 305.7 L1795.1 287.2 L1797.0 290.1 L1798.9 308.9 L1800.8 311.7 L1802.7 297.8 L1804.6 284.0 L1806.5 291.6 L1808.4 305.0 L1810.3 291.8 L1812.2 297.4 L1814.1 299.9 L1816.0 305.2 L1817.9 305.8 L1819.8 301.2 L1821.7 297.4 L1823.6 303.5 L1825.5 308.5 L1827.4 321.5 L1827.5 407 L286.500 407 Z" fill="url(#sg)" fill-opacity=".86"/><rect x="379.0" y="113" width="29.9" height="294" fill="#a8c4d0" fill-opacity=".205"/><rect x="410.4" y="113" width="29.9" height="294" fill="#a8c4d0" fill-opacity=".205"/><rect x="441.9" y="113" width="29.9" height="294" fill="#a8c4d0" fill-opacity=".205"/><rect x="504.7" y="113" width="29.9" height="294" fill="#a8c4d0" fill-opacity=".205"/><rect x="536.2" y="113" width="29.9" height="294" fill="#a8c4d0" fill-opacity=".205"/><rect x="567.6" y="113" width="29.9" height="294" fill="#a8c4d0" fill-opacity=".205"/><rect x="599.0" y="113" width="29.9" height="294" fill="#a8c4d0" fill-opacity=".205"/><rect x="661.9" y="113" width="29.9" height="294" fill="#a8c4d0" fill-opacity=".205"/><rect x="693.3" y="113" width="29.9" height="294" fill="#a8c4d0" fill-opacity=".205"/><rect x="724.8" y="113" width="29.9" height="294" fill="#a8c4d0" fill-opacity=".205"/><rect x="756.2" y="113" width="29.9" height="294" fill="#a8c4d0" fill-opacity=".205"/><rect x="819.1" y="113" width="29.9" height="294" fill="#a8c4d0" fill-opacity=".205"/><rect x="850.5" y="113" width="29.9" height="294" fill="#a8c4d0" fill-opacity=".205"/><rect x="881.9" y="113" width="29.9" height="294" fill="#a8c4d0" fill-opacity=".205"/><rect x="913.4" y="113" width="29.9" height="294" fill="#a8c4d0" fill-opacity=".205"/><rect x="976.2" y="113" width="29.9" height="294" fill="#a8c4d0" fill-opacity=".205"/><rect x="1007.7" y="113" width="29.9" height="294" fill="#a8c4d0" fill-opacity=".205"/><rect x="1039.1" y="113" width="29.9" height="294" fill="#a8c4d0" fill-opacity=".205"/><rect x="1070.5" y="113" width="29.9" height="294" fill="#a8c4d0" fill-opacity=".205"/><rect x="1133.4" y="113" width="29.9" height="294" fill="#a8c4d0" fill-opacity=".205"/><rect x="1164.8" y="113" width="29.9" height="294" fill="#a8c4d0" fill-opacity=".205"/><rect x="1196.3" y="113" width="29.9" height="294" fill="#a8c4d0" fill-opacity=".205"/><rect x="1290.6" y="113" width="29.9" height="294" fill="#a8c4d0" fill-opacity=".205"/><rect x="1227.7" y="113" width="29.9" height="294" fill="#a8c4d0" fill-opacity=".205"/><rect x="1259.1" y="113" width="29.9" height="294" fill="#a8c4d0" fill-opacity=".205"/><rect x="1322.0" y="113" width="29.9" height="294" fill="#a8c4d0" fill-opacity=".205"/><rect x="1353.4" y="113" width="29.9" height="294" fill="#a8c4d0" fill-opacity=".205"/><rect x="1384.9" y="113" width="29.9" height="294" fill="#a8c4d0" fill-opacity=".205"/><rect x="1416.3" y="113" width="29.9" height="294" fill="#a8c4d0" fill-opacity=".205"/><rect x="1447.7" y="113" width="29.9" height="294" fill="#a8c4d0" fill-opacity=".205"/><rect x="1479.2" y="113" width="29.9" height="294" fill="#a8c4d0" fill-opacity=".205"/><rect x="1510.6" y="113" width="29.9" height="294" fill="#a8c4d0" fill-opacity=".205"/><rect x="1542.0" y="113" width="29.9" height="294" fill="#a8c4d0" fill-opacity=".205"/><rect x="1573.5" y="113" width="29.9" height="294" fill="#a8c4d0" fill-opacity=".205"/><rect x="1604.9" y="113" width="29.9" height="294" fill="#a8c4d0" fill-opacity=".205"/><rect x="1636.3" y="113" width="29.9" height="294" fill="#a8c4d0" fill-opacity=".205"/><rect x="1667.8" y="113" width="29.9" height="294" fill="#a8c4d0" fill-opacity=".205"/><rect x="1699.2" y="113" width="29.9" height="294" fill="#a8c4d0" fill-opacity=".205"/><rect x="1730.6" y="113" width="29.9" height="294" fill="#a8c4d0" fill-opacity=".205"/><rect x="1762.1" y="113" width="29.9" height="294" fill="#a8c4d0" fill-opacity=".205"/><rect x="959.7" y="113" width="10.7" height="294" fill="#a8c4d0" fill-opacity=".205"/><rect x="1116.9" y="113" width="10.7" height="294" fill="#a8c4d0" fill-opacity=".205"/><rect x="852.200" y="83" width="28.600" height="354" fill="#fff" fill-opacity=".22"/><path d="M286.5 323.5 L288.4 322.6 L290.3 330.2 L292.2 328.8 L294.1 318.9 L296.0 324.1 L297.9 334.0 L299.8 321.3 L301.7 332.0 L303.6 336.9 L305.5 319.2 L307.4 326.7 L309.3 321.8 L311.2 326.7 L313.1 318.8 L315.0 320.0 L316.9 326.6 L318.8 326.5 L320.7 326.0 L322.6 333.1 L324.5 325.7 L326.4 326.8 L328.3 322.0 L330.2 321.5 L332.1 320.6 L334.0 329.8 L335.9 332.2 L337.8 322.1 L339.7 312.6 L341.6 325.0 L343.5 317.4 L345.4 330.5 L347.3 325.6 L349.2 331.5 L351.1 331.9 L353.0 325.8 L354.9 330.5 L356.8 339.2 L358.7 323.4 L360.6 309.3 L362.5 305.2 L364.4 316.6 L366.3 318.0 L368.2 323.7 L370.1 314.4 L372.0 323.5 L373.9 316.0 L375.8 334.2 L377.7 324.6 L379.6 313.1 L381.5 318.4 L383.4 314.2 L385.3 311.3 L387.2 318.2 L389.1 321.0 L391.0 318.3 L392.9 324.8 L394.8 316.9 L396.7 306.6 L398.6 315.5 L400.5 323.4 L402.4 318.7 L404.3 316.1 L406.2 318.9 L408.1 319.7 L410.0 317.7 L411.9 314.0 L413.8 319.3 L415.7 319.4 L417.6 321.9 L419.5 315.9 L421.4 320.5 L423.3 323.9 L425.2 316.9 L427.1 316.3 L429.0 314.8 L430.9 301.4 L432.8 316.5 L434.7 316.6 L436.6 322.9 L438.5 310.9 L440.4 314.5 L442.3 302.4 L444.2 313.3 L446.1 316.3 L448.0 319.4 L449.9 308.3 L451.8 330.3 L453.7 316.0 L455.6 312.1 L457.5 313.1 L459.4 321.6 L461.3 308.8 L463.2 325.8 L465.1 313.2 L467.0 322.3 L468.9 315.6 L470.8 320.6 L472.7 313.5 L474.6 329.5 L476.5 308.8 L478.4 320.0 L480.3 319.7 L482.2 331.0 L484.1 321.2 L486.0 313.9 L487.9 328.8 L489.8 313.9 L491.7 314.5 L493.6 322.7 L495.5 310.1 L497.4 315.9 L499.3 324.9 L501.2 315.5 L503.1 310.6 L505.0 327.2 L506.9 327.9 L508.8 317.6 L510.7 320.1 L512.6 319.2 L514.5 320.8 L516.4 319.4 L518.3 322.0 L520.2 320.2 L522.1 329.6 L524.0 317.2 L525.9 319.6 L527.8 321.6 L529.7 309.4 L531.6 322.4 L533.5 319.8 L535.4 329.8 L537.3 329.0 L539.2 326.1 L541.1 316.2 L543.0 317.7 L544.9 324.3 L546.8 325.5 L548.7 322.3 L550.6 327.3 L552.5 324.0 L554.4 321.9 L556.3 318.6 L558.2 331.7 L560.1 328.1 L562.0 325.0 L563.9 314.6 L565.8 316.2 L567.7 308.0 L569.6 319.8 L571.5 311.0 L573.4 312.5 L575.3 307.2 L577.2 333.8 L579.1 319.8 L581.0 319.2 L582.9 313.5 L584.8 315.6 L586.7 313.9 L588.6 314.3 L590.5 324.5 L592.4 322.3 L594.3 323.1 L596.2 327.8 L598.1 314.0 L600.0 334.0 L601.9 306.8 L603.8 315.6 L605.7 324.3 L607.6 312.1 L609.5 306.2 L611.4 309.1 L613.3 310.7 L615.2 316.2 L617.1 299.7 L619.0 312.3 L620.9 303.9 L622.8 311.9 L624.7 315.3 L626.6 315.4 L628.5 309.8 L630.4 309.7 L632.3 308.2 L634.2 309.4 L636.1 308.4 L638.0 306.7 L639.9 311.4 L641.8 309.2 L643.7 305.4 L645.6 298.2 L647.5 284.7 L649.4 283.0 L651.3 296.7 L653.2 307.6 L655.1 310.2 L657.0 308.8 L658.9 310.9 L660.8 302.6 L662.7 312.9 L664.6 306.8 L666.5 299.8 L668.4 306.6 L670.3 296.7 L672.2 308.4 L674.1 310.7 L676.0 309.8 L677.9 307.7 L679.8 312.3 L681.7 305.2 L683.6 319.9 L685.5 316.6 L687.4 312.1 L689.3 321.6 L691.2 317.9 L693.1 312.2 L695.0 319.5 L696.9 315.6 L698.8 319.6 L700.7 321.8 L702.6 326.6 L704.5 320.9 L706.4 333.8 L708.3 314.5 L710.2 325.0 L712.1 307.4 L714.0 322.5 L715.9 323.1 L717.8 335.9 L719.7 330.3 L721.6 327.9 L723.5 331.0 L725.4 333.5 L727.3 323.6 L729.2 324.9 L731.1 313.6 L733.0 321.3 L734.9 328.8 L736.8 331.5 L738.7 320.3 L740.6 337.2 L742.5 323.4 L744.4 328.9 L746.3 318.6 L748.2 325.2 L750.1 325.0 L752.0 343.8 L753.9 331.5 L755.8 328.6 L757.7 327.6 L759.6 330.0 L761.5 324.6 L763.4 332.2 L765.3 320.0 L767.2 329.2 L769.1 327.3 L771.0 334.2 L772.9 326.4 L774.8 328.4 L776.7 314.8 L778.6 332.3 L780.5 319.8 L782.4 343.2 L784.3 324.1 L786.2 318.1 L788.1 319.7 L790.0 323.9 L791.9 321.6 L793.8 338.3 L795.7 325.1 L797.6 316.9 L799.5 320.1 L801.4 330.1 L803.3 324.0 L805.2 328.8 L807.1 315.3 L809.0 329.2 L810.9 316.3 L812.8 334.0 L814.7 336.8 L816.6 350.1 L818.5 331.3 L820.4 323.9 L822.3 318.2 L824.2 326.1 L826.1 325.5 L828.0 324.3 L829.9 333.5 L831.8 321.3 L833.7 331.6 L835.6 339.2 L837.5 324.1 L839.4 331.1 L841.3 325.5 L843.2 335.3 L845.1 321.9 L847.0 329.7 L848.9 324.7 L850.8 318.8 L852.7 326.4 L854.6 332.2 L856.5 323.5 L858.4 327.5 L860.3 325.7 L862.2 330.6 L864.1 327.9 L866.0 325.3 L867.9 325.9 L869.8 324.8 L871.7 332.8 L873.6 332.6 L875.5 329.6 L877.4 323.5 L879.3 316.5 L881.2 324.2 L883.1 329.2 L885.0 326.5 L886.9 323.9 L888.8 323.1 L890.7 310.4 L892.6 328.4 L894.5 312.0 L896.4 325.5 L898.3 323.2 L900.2 329.5 L902.1 315.2 L904.0 336.0 L905.9 319.8 L907.8 326.0 L909.7 313.2 L911.6 331.6 L913.5 331.4 L915.4 326.4 L917.3 320.1 L919.2 313.2 L921.1 317.2 L923.0 307.6 L924.9 295.7 L926.8 288.9 L928.7 294.8 L930.6 304.8 L932.5 316.7 L934.4 319.7 L936.3 317.8 L938.2 329.2 L940.1 313.5 L942.0 325.7 L943.9 329.9 L945.8 324.4 L947.7 328.5 L949.6 334.4 L951.5 322.8 L953.4 318.7 L955.3 317.5 L957.2 332.4 L959.1 313.7 L961.0 324.3 L962.9 319.0 L964.8 317.1 L966.7 324.5 L968.6 323.7 L970.5 328.1 L972.4 335.5 L974.3 317.3 L976.2 306.7 L978.1 311.7 L980.0 323.4 L981.9 318.8 L983.8 342.3 L985.7 312.2 L987.6 308.8 L989.5 322.0 L991.4 327.2 L993.3 319.3 L995.2 322.1 L997.1 313.4 L999.0 322.6 L1000.9 323.4 L1002.8 314.6 L1004.7 312.9 L1006.6 323.3 L1008.5 314.7 L1010.4 316.0 L1012.3 326.1 L1014.2 315.7 L1016.1 309.8 L1018.0 279.2 L1019.9 244.1 L1021.8 257.8 L1023.7 291.5 L1025.6 316.8 L1027.5 323.4 L1029.4 321.1 L1031.3 310.3 L1033.2 326.1 L1035.1 316.8 L1037.0 320.3 L1038.9 323.5 L1040.8 321.9 L1042.7 315.4 L1044.6 327.8 L1046.5 316.4 L1048.4 345.8 L1050.3 328.5 L1052.2 318.8 L1054.1 318.9 L1056.0 314.6 L1057.9 314.8 L1059.8 326.7 L1061.7 309.8 L1063.6 335.5 L1065.5 314.9 L1067.4 322.3 L1069.3 320.5 L1071.2 321.4 L1073.1 321.1 L1075.0 335.9 L1076.9 319.1 L1078.8 330.2 L1080.7 323.6 L1082.6 329.5 L1084.5 315.1 L1086.4 316.5 L1088.3 336.4 L1090.2 315.0 L1092.1 317.1 L1094.0 333.0 L1095.9 331.2 L1097.8 327.6 L1099.7 319.7 L1101.6 324.6 L1103.5 313.1 L1105.4 328.0 L1107.3 319.6 L1109.2 333.4 L1111.1 319.7 L1113.0 328.9 L1114.9 323.3 L1116.8 320.7 L1118.7 322.2 L1120.6 318.4 L1122.5 316.9 L1124.4 330.4 L1126.3 337.0 L1128.2 326.0 L1130.1 320.9 L1132.0 326.8 L1133.9 326.0 L1135.8 330.5 L1137.7 327.7 L1139.6 327.3 L1141.5 326.4 L1143.4 320.5 L1145.3 310.9 L1147.2 340.7 L1149.1 325.8 L1151.0 333.5 L1152.9 332.8 L1154.8 324.8 L1156.7 328.7 L1158.6 327.3 L1160.5 333.0 L1162.4 338.2 L1164.3 329.5 L1166.2 322.1 L1168.1 338.0 L1170.0 329.7 L1171.9 319.8 L1173.8 340.4 L1175.7 309.0 L1177.6 331.6 L1179.5 316.6 L1181.4 331.5 L1183.3 320.8 L1185.2 330.2 L1187.1 331.3 L1189.0 320.9 L1190.9 322.7 L1192.8 322.6 L1194.7 319.9 L1196.6 327.8 L1198.5 315.9 L1200.4 325.0 L1202.3 322.4 L1204.2 331.9 L1206.1 328.3 L1208.0 333.3 L1209.9 319.5 L1211.8 290.7 L1213.7 274.0 L1215.6 297.8 L1217.5 320.5 L1219.4 338.2 L1221.3 329.6 L1223.2 329.2 L1225.1 320.1 L1227.0 324.6 L1228.9 325.8 L1230.8 333.3 L1232.7 327.4 L1234.6 329.9 L1236.5 320.9 L1238.4 333.7 L1240.3 328.3 L1242.2 343.2 L1244.1 338.3 L1246.0 337.6 L1247.9 334.9 L1249.8 343.0 L1251.7 323.7 L1253.6 332.8 L1255.5 324.4 L1257.4 335.4 L1259.3 324.5 L1261.2 325.2 L1263.1 323.7 L1265.0 331.6 L1266.9 332.3 L1268.8 342.5 L1270.7 319.5 L1272.6 324.8 L1274.5 319.8 L1276.4 337.0 L1278.3 310.3 L1280.2 318.4 L1282.1 321.3 L1284.0 334.3 L1285.9 331.3 L1287.8 320.5 L1289.7 323.2 L1291.6 330.0 L1293.5 334.6 L1295.4 342.6 L1297.3 326.7 L1299.2 327.1 L1301.1 328.7 L1303.0 334.8 L1304.9 320.6 L1306.8 323.5 L1308.7 320.5 L1310.6 327.9 L1312.5 322.1 L1314.4 319.6 L1316.3 330.0 L1318.2 335.0 L1320.1 325.3 L1322.0 325.7 L1323.9 317.0 L1325.8 334.2 L1327.7 314.9 L1329.6 326.8 L1331.5 324.9 L1333.4 334.0 L1335.3 325.2 L1337.2 315.8 L1339.1 328.7 L1341.0 326.9 L1342.9 313.8 L1344.8 325.5 L1346.7 320.5 L1348.6 321.0 L1350.5 322.5 L1352.4 330.0 L1354.3 310.2 L1356.2 325.1 L1358.1 310.8 L1360.0 327.1 L1361.9 324.5 L1363.8 332.0 L1365.7 323.5 L1367.6 327.2 L1369.5 325.6 L1371.4 336.9 L1373.3 327.2 L1375.2 329.7 L1377.1 321.4 L1379.0 318.1 L1380.9 323.2 L1382.8 327.0 L1384.7 322.2 L1386.6 340.5 L1388.5 320.3 L1390.4 333.0 L1392.3 328.0 L1394.2 336.3 L1396.1 332.6 L1398.0 327.2 L1399.9 330.9 L1401.8 323.1 L1403.7 322.9 L1405.6 321.8 L1407.5 323.9 L1409.4 328.6 L1411.3 326.8 L1413.2 322.8 L1415.1 324.7 L1417.0 336.3 L1418.9 316.5 L1420.8 326.0 L1422.7 319.8 L1424.6 340.2 L1426.5 312.9 L1428.4 333.2 L1430.3 320.0 L1432.2 328.1 L1434.1 329.2 L1436.0 334.5 L1437.9 319.5 L1439.8 324.6 L1441.7 327.6 L1443.6 321.0 L1445.5 325.3 L1447.4 317.9 L1449.3 314.5 L1451.2 329.6 L1453.1 317.3 L1455.0 327.7 L1456.9 327.7 L1458.8 318.9 L1460.7 319.7 L1462.6 327.9 L1464.5 317.7 L1466.4 329.8 L1468.3 316.2 L1470.2 328.8 L1472.1 320.9 L1474.0 332.2 L1475.9 335.2 L1477.8 312.6 L1479.7 326.7 L1481.6 334.6 L1483.5 313.1 L1485.4 324.1 L1487.3 327.0 L1489.2 330.9 L1491.1 319.1 L1493.0 326.8 L1494.9 319.7 L1496.8 323.3 L1498.7 332.6 L1500.6 319.3 L1502.5 330.9 L1504.4 330.1 L1506.3 327.4 L1508.2 325.1 L1510.1 329.3 L1512.0 315.8 L1513.9 312.0 L1515.8 334.8 L1517.7 321.1 L1519.6 329.4 L1521.5 327.6 L1523.4 336.4 L1525.3 322.6 L1527.2 320.9 L1529.1 315.2 L1531.0 314.2 L1532.9 313.0 L1534.8 318.3 L1536.7 311.6 L1538.6 328.3 L1540.5 322.0 L1542.4 318.5 L1544.3 324.4 L1546.2 328.0 L1548.1 324.5 L1550.0 333.7 L1551.9 318.3 L1553.8 322.7 L1555.7 317.3 L1557.6 332.0 L1559.5 325.3 L1561.4 327.4 L1563.3 319.7 L1565.2 337.1 L1567.1 327.5 L1569.0 334.1 L1570.9 334.7 L1572.8 326.9 L1574.7 325.9 L1576.6 330.3 L1578.5 325.9 L1580.4 333.4 L1582.3 317.7 L1584.2 319.1 L1586.1 340.0 L1588.0 326.3 L1589.9 314.9 L1591.8 318.7 L1593.7 314.6 L1595.6 289.8 L1597.5 265.4 L1599.4 273.7 L1601.3 308.9 L1603.2 318.8 L1605.1 331.0 L1607.0 322.6 L1608.9 323.8 L1610.8 324.2 L1612.7 315.8 L1614.6 326.4 L1616.5 325.1 L1618.4 323.3 L1620.3 315.7 L1622.2 329.5 L1624.1 325.4 L1626.0 324.1 L1627.9 317.6 L1629.8 332.8 L1631.7 318.6 L1633.6 310.9 L1635.5 310.4 L1637.4 317.0 L1639.3 320.9 L1641.2 324.6 L1643.1 317.4 L1645.0 326.7 L1646.9 325.0 L1648.8 323.5 L1650.7 321.0 L1652.6 319.7 L1654.5 325.7 L1656.4 319.7 L1658.3 311.2 L1660.2 330.3 L1662.1 312.6 L1664.0 331.1 L1665.9 322.2 L1667.8 326.9 L1669.7 323.6 L1671.6 326.0 L1673.5 319.1 L1675.4 312.8 L1677.3 312.8 L1679.2 332.0 L1681.1 326.6 L1683.0 332.7 L1684.9 318.8 L1686.8 336.3 L1688.7 329.6 L1690.6 315.9 L1692.5 297.8 L1694.4 296.2 L1696.3 315.6 L1698.2 323.7 L1700.1 327.4 L1702.0 340.0 L1703.9 325.0 L1705.8 325.9 L1707.7 327.4 L1709.6 335.2 L1711.5 318.6 L1713.4 327.5 L1715.3 313.1 L1717.2 327.2 L1719.1 329.5 L1721.0 312.4 L1722.9 319.6 L1724.8 328.2 L1726.7 328.5 L1728.6 316.9 L1730.5 332.9 L1732.4 327.9 L1734.3 326.6 L1736.2 322.1 L1738.1 318.8 L1740.0 330.2 L1741.9 336.0 L1743.8 327.8 L1745.7 324.1 L1747.6 321.3 L1749.5 329.1 L1751.4 347.3 L1753.3 321.7 L1755.2 327.3 L1757.1 312.4 L1759.0 322.7 L1760.9 320.4 L1762.8 329.8 L1764.7 320.3 L1766.6 325.0 L1768.5 314.4 L1770.4 320.7 L1772.3 312.9 L1774.2 315.8 L1776.1 306.8 L1778.0 325.1 L1779.9 302.7 L1781.8 319.0 L1783.7 308.2 L1785.6 299.5 L1787.5 286.0 L1789.4 293.6 L1791.3 297.7 L1793.2 305.7 L1795.1 287.2 L1797.0 290.1 L1798.9 308.9 L1800.8 311.7 L1802.7 297.8 L1804.6 284.0 L1806.5 291.6 L1808.4 305.0 L1810.3 291.8 L1812.2 297.4 L1814.1 299.9 L1816.0 305.2 L1817.9 305.8 L1819.8 301.2 L1821.7 297.4 L1823.6 303.5 L1825.5 308.5 L1827.4 321.5" fill="none" stroke="#fff" stroke-width="1" stroke-linejoin="round"/><path d="M866.500 83V437" stroke="#e01010" stroke-width="1.300"/><path d="M286.500 113V407.500H1828" fill="none" stroke="#bdbdbd" stroke-width="1"/><g fill="#fff" font-size="11.500" text-anchor="end"><text x="284.300" y="116.9">0</text><text x="284.300" y="134.9">-5</text><text x="284.300" y="152.9">-10</text><text x="284.300" y="171.9">-15</text><text x="284.300" y="189.9">-20</text><text x="284.300" y="207.9">-25</text><text x="284.300" y="226.9">-30</text><text x="284.300" y="244.9">-35</text><text x="284.300" y="263.9">-40</text><text x="284.300" y="281.9">-45</text><text x="284.300" y="299.9">-50</text><text x="284.300" y="318.9">-55</text><text x="284.300" y="336.9">-60</text><text x="284.300" y="354.9">-65</text><text x="284.300" y="373.9">-70</text><text x="284.300" y="391.9">-75</text><text x="284.300" y="410.9">-80</text></g><g fill="#e4e4e4" font-size="11" text-anchor="middle"><text x="319.1" y="426">26 936k</text><text x="400.9" y="426">26 962k</text><text x="482.7" y="426">26 988k</text><text x="564.5" y="426">27 014k</text><text x="646.3" y="426">27 040k</text><text x="728.1" y="426">27 066k</text><text x="809.8" y="426">27 092k</text><text x="891.6" y="426">27 118k</text><text x="973.4" y="426">27 144k</text><text x="1055.2" y="426">27 170k</text><text x="1137.0" y="426">27 196k</text><text x="1218.8" y="426">27 222k</text><text x="1300.6" y="426">27 248k</text><text x="1382.4" y="426">27 274k</text><text x="1464.2" y="426">27 300k</text><text x="1546.0" y="426">27 326k</text><text x="1627.7" y="426">27 352k</text><text x="1709.5" y="426">27 378k</text><text x="1791.3" y="426">27 404k</text></g><g fill="#fff" font-size="10.500" text-anchor="middle"><text transform="translate(393.4 131) scale(1.16 1)" font-size="9.600" letter-spacing=".5">1</text><text transform="translate(393.1 153.200) scale(.87 1)" font-size="10.800" letter-spacing="-.8">NFM</text><text transform="translate(424.9 131) scale(1.16 1)" font-size="9.600" letter-spacing=".5">2</text><text transform="translate(424.6 153.200) scale(.87 1)" font-size="10.800" letter-spacing="-.8">NFM</text><text transform="translate(456.3 131) scale(1.16 1)" font-size="9.600" letter-spacing=".5">3</text><text transform="translate(456.0 153.200) scale(.87 1)" font-size="10.800" letter-spacing="-.8">NFM</text><text transform="translate(519.2 131) scale(1.16 1)" font-size="9.600" letter-spacing=".5">4</text><text transform="translate(518.9 153.200) scale(.87 1)" font-size="10.800" letter-spacing="-.8">NFM</text><text transform="translate(550.6 131) scale(1.16 1)" font-size="9.600" letter-spacing=".5">5</text><text transform="translate(550.3 153.200) scale(.87 1)" font-size="10.800" letter-spacing="-.8">NFM</text><text transform="translate(582.0 131) scale(1.16 1)" font-size="9.600" letter-spacing=".5">6</text><text transform="translate(581.7 153.200) scale(.87 1)" font-size="10.800" letter-spacing="-.8">NFM</text><text transform="translate(613.5 131) scale(1.16 1)" font-size="9.600" letter-spacing=".5">7</text><text transform="translate(613.2 153.200) scale(.87 1)" font-size="10.800" letter-spacing="-.8">NFM</text><text transform="translate(676.3 131) scale(1.16 1)" font-size="9.600" letter-spacing=".5">8</text><text transform="translate(676.0 153.200) scale(.87 1)" font-size="10.800" letter-spacing="-.8">NFM</text><text transform="translate(707.8 131) scale(1.16 1)" font-size="9.600" letter-spacing=".5">9</text><text transform="translate(707.5 153.200) scale(.87 1)" font-size="10.800" letter-spacing="-.8">NFM</text><text transform="translate(739.2 131) scale(1.16 1)" font-size="9.600" letter-spacing=".5">10</text><text transform="translate(738.9 153.200) scale(.87 1)" font-size="10.800" letter-spacing="-.8">NFM</text><text transform="translate(770.6 131) scale(1.16 1)" font-size="9.600" letter-spacing=".5">11</text><text transform="translate(770.3 153.200) scale(.87 1)" font-size="10.800" letter-spacing="-.8">NFM</text><text transform="translate(833.5 131) scale(1.16 1)" font-size="9.600" letter-spacing=".5">12</text><text transform="translate(833.2 153.200) scale(.87 1)" font-size="10.800" letter-spacing="-.8">NFM</text><text transform="translate(864.9 131) scale(1.16 1)" font-size="9.600" letter-spacing=".5">13</text><text x="864.6" y="141.8" font-size="10" letter-spacing=".2">&#1040;&#1074;&#1090;</text><text x="864.6" y="152.6" font-size="10" letter-spacing=".2">&#1086;&#1082;&#1072;</text><text x="864.6" y="163.4" font-size="10" letter-spacing=".2">&#1085;&#1072;&#1083;</text><text x="864.6" y="174.2" font-size="10" letter-spacing=".2">&#1050;&#1048;&#1045;</text><text x="864.6" y="185.0" font-size="10" letter-spacing=".2">&#1042;</text><text transform="translate(864.6 206.800) scale(.87 1)" font-size="10.800" letter-spacing="-.8">NFM</text><text transform="translate(896.4 131) scale(1.16 1)" font-size="9.600" letter-spacing=".5">14</text><text transform="translate(896.1 153.200) scale(.87 1)" font-size="10.800" letter-spacing="-.8">NFM</text><text transform="translate(927.8 131) scale(1.16 1)" font-size="9.600" letter-spacing=".5">15</text><text x="927.5" y="141.8" font-size="10" letter-spacing=".2">&#1044;&#1040;&#1051;</text><text x="927.5" y="152.6" font-size="10" letter-spacing=".2">&#1068;&#1053;&#1054;</text><text x="927.5" y="163.4" font-size="10" letter-spacing=".2">&#1041;&#1054;&#1049;</text><text x="927.5" y="174.2" font-size="10" letter-spacing=".2">&#1065;&#1048;&#1050;</text><text x="927.5" y="185.0" font-size="10" letter-spacing=".2">&#1048;</text><text transform="translate(927.5 206.800) scale(.87 1)" font-size="10.800" letter-spacing="-.8">AM</text><text transform="translate(990.7 131) scale(1.16 1)" font-size="9.600" letter-spacing=".5">16</text><text transform="translate(990.4 153.200) scale(.87 1)" font-size="10.800" letter-spacing="-.8">NFM</text><text transform="translate(1022.1 131) scale(1.16 1)" font-size="9.600" letter-spacing=".5">17</text><text transform="translate(1021.8 153.200) scale(.87 1)" font-size="10.800" letter-spacing="-.8">NFM</text><text transform="translate(1053.5 131) scale(1.16 1)" font-size="9.600" letter-spacing=".5">18</text><text transform="translate(1053.2 153.200) scale(.87 1)" font-size="10.800" letter-spacing="-.8">NFM</text><text transform="translate(1085.0 131) scale(1.16 1)" font-size="9.600" letter-spacing=".5">19</text><text transform="translate(1084.7 153.200) scale(.87 1)" font-size="10.800" letter-spacing="-.8">NFM</text><text transform="translate(1147.8 131) scale(1.16 1)" font-size="9.600" letter-spacing=".5">20</text><text transform="translate(1147.5 153.200) scale(.87 1)" font-size="10.800" letter-spacing="-.8">NFM</text><text transform="translate(1179.3 131) scale(1.16 1)" font-size="9.600" letter-spacing=".5">21</text><text transform="translate(1179.0 153.200) scale(.87 1)" font-size="10.800" letter-spacing="-.8">NFM</text><text transform="translate(1210.7 131) scale(1.16 1)" font-size="9.600" letter-spacing=".5">22</text><text transform="translate(1210.4 153.200) scale(.87 1)" font-size="10.800" letter-spacing="-.8">NFM</text><text transform="translate(1305.0 131) scale(1.16 1)" font-size="9.600" letter-spacing=".5">23</text><text transform="translate(1304.7 153.200) scale(.87 1)" font-size="10.800" letter-spacing="-.8">NFM</text><text transform="translate(1242.1 131) scale(1.16 1)" font-size="9.600" letter-spacing=".5">24</text><text transform="translate(1241.8 153.200) scale(.87 1)" font-size="10.800" letter-spacing="-.8">NFM</text><text transform="translate(1273.6 131) scale(1.16 1)" font-size="9.600" letter-spacing=".5">25</text><text transform="translate(1273.3 153.200) scale(.87 1)" font-size="10.800" letter-spacing="-.8">NFM</text><text transform="translate(1336.4 131) scale(1.16 1)" font-size="9.600" letter-spacing=".5">26</text><text transform="translate(1336.1 153.200) scale(.87 1)" font-size="10.800" letter-spacing="-.8">NFM</text><text transform="translate(1367.9 131) scale(1.16 1)" font-size="9.600" letter-spacing=".5">27</text><text transform="translate(1367.6 153.200) scale(.87 1)" font-size="10.800" letter-spacing="-.8">NFM</text><text transform="translate(1399.3 131) scale(1.16 1)" font-size="9.600" letter-spacing=".5">28</text><text transform="translate(1399.0 153.200) scale(.87 1)" font-size="10.800" letter-spacing="-.8">NFM</text><text transform="translate(1430.7 131) scale(1.16 1)" font-size="9.600" letter-spacing=".5">29</text><text transform="translate(1430.4 153.200) scale(.87 1)" font-size="10.800" letter-spacing="-.8">NFM</text><text transform="translate(1462.2 131) scale(1.16 1)" font-size="9.600" letter-spacing=".5">30</text><text transform="translate(1461.9 153.200) scale(.87 1)" font-size="10.800" letter-spacing="-.8">NFM</text><text transform="translate(1493.6 131) scale(1.16 1)" font-size="9.600" letter-spacing=".5">31</text><text transform="translate(1493.3 153.200) scale(.87 1)" font-size="10.800" letter-spacing="-.8">NFM</text><text transform="translate(1525.0 131) scale(1.16 1)" font-size="9.600" letter-spacing=".5">32</text><text transform="translate(1524.7 153.200) scale(.87 1)" font-size="10.800" letter-spacing="-.8">NFM</text><text transform="translate(1556.5 131) scale(1.16 1)" font-size="9.600" letter-spacing=".5">33</text><text transform="translate(1556.2 153.200) scale(.87 1)" font-size="10.800" letter-spacing="-.8">NFM</text><text transform="translate(1587.9 131) scale(1.16 1)" font-size="9.600" letter-spacing=".5">34</text><text transform="translate(1587.6 153.200) scale(.87 1)" font-size="10.800" letter-spacing="-.8">NFM</text><text transform="translate(1619.3 131) scale(1.16 1)" font-size="9.600" letter-spacing=".5">35</text><text transform="translate(1619.0 153.200) scale(.87 1)" font-size="10.800" letter-spacing="-.8">NFM</text><text transform="translate(1650.8 131) scale(1.16 1)" font-size="9.600" letter-spacing=".5">36</text><text transform="translate(1650.5 153.200) scale(.87 1)" font-size="10.800" letter-spacing="-.8">NFM</text><text transform="translate(1682.2 131) scale(1.16 1)" font-size="9.600" letter-spacing=".5">37</text><text transform="translate(1681.9 153.200) scale(.87 1)" font-size="10.800" letter-spacing="-.8">NFM</text><text transform="translate(1713.6 131) scale(1.16 1)" font-size="9.600" letter-spacing=".5">38</text><text transform="translate(1713.3 153.200) scale(.87 1)" font-size="10.800" letter-spacing="-.8">NFM</text><text transform="translate(1745.0 131) scale(1.16 1)" font-size="9.600" letter-spacing=".5">39</text><text transform="translate(1744.7 153.200) scale(.87 1)" font-size="10.800" letter-spacing="-.8">NFM</text><text transform="translate(1776.5 131) scale(1.16 1)" font-size="9.600" letter-spacing=".5">40</text><text transform="translate(1776.2 153.200) scale(.87 1)" font-size="10.800" letter-spacing="-.8">NFM</text><text x="965.3" y="131.0" font-size="10">&#1089;</text><text x="965.3" y="141.8" font-size="10">&#1080;</text><text x="965.3" y="152.6" font-size="10">&#1073;</text><text x="965.3" y="163.4" font-size="10">&#1080;</text><text x="965.3" y="185.0" font-size="10">U</text><text x="965.3" y="195.8" font-size="10">S</text><text x="965.3" y="206.6" font-size="10">B</text><text x="1122.3" y="131.0" font-size="10">&#1089;</text><text x="1122.3" y="141.8" font-size="10">&#1080;</text><text x="1122.3" y="152.6" font-size="10">&#1073;</text><text x="1122.3" y="163.4" font-size="10">&#1080;</text><text x="1122.3" y="185.0" font-size="10">U</text><text x="1122.3" y="195.8" font-size="10">S</text><text x="1122.3" y="206.6" font-size="10">B</text></g></svg>
<div class="blk" style="left:259px;top:441px;width:1598px;height:445px"></div><svg class="a" style="left:286px;top:441px" width="1571" height="445" viewBox="286 441 1571 445" font-family="Liberation Sans,sans-serif"><defs>
<filter id="nz" x="0" y="0" width="100%" height="100%" color-interpolation-filters="sRGB"><feTurbulence type="fractalNoise" baseFrequency="0.27 0.72" numOctaves="1" seed="11" result="t"/><feColorMatrix in="t" type="matrix" values="0.05 0 0 0 -0.015  0.06 0 0 0 -0.018  0.85 0 0 0 -0.10  0 0 0 0 1"/></filter>
<filter id="nz2" x="0" y="0" width="100%" height="100%" color-interpolation-filters="sRGB"><feTurbulence type="fractalNoise" baseFrequency="0.3 0.8" numOctaves="1" seed="5" result="t"/><feColorMatrix in="t" type="matrix" values="0 0 0 0 0.04  0 0 0 0 0.10  0 0 0 0 0.80  3.5 0 0 0 -1.80"/></filter>
<linearGradient id="wg" gradientUnits="userSpaceOnUse" x1="286" y1="0" x2="1828" y2="0">
<stop offset="0" stop-color="#000018" stop-opacity=".05"/><stop offset=".06" stop-color="#000018" stop-opacity="0"/><stop offset=".25" stop-color="#000018" stop-opacity=".04"/><stop offset=".36" stop-color="#000018" stop-opacity=".08"/><stop offset=".47" stop-color="#000018" stop-opacity=".15"/><stop offset=".60" stop-color="#000018" stop-opacity=".19"/><stop offset=".835" stop-color="#000018" stop-opacity=".18"/><stop offset=".86" stop-color="#000018" stop-opacity=".06"/><stop offset="1" stop-color="#000018" stop-opacity="0"/></linearGradient>
<linearGradient id="cb" x1="0" y1="0" x2="0" y2="1"><stop offset="0" stop-color="#4a0000"/><stop offset=".12" stop-color="#800000"/><stop offset=".24" stop-color="#c80000"/><stop offset=".31" stop-color="#ff0000"/><stop offset=".40" stop-color="#ff6a00"/><stop offset=".46" stop-color="#ffb000"/><stop offset=".52" stop-color="#ffff00"/><stop offset=".57" stop-color="#ffffa0"/><stop offset=".61" stop-color="#ffffff"/><stop offset=".65" stop-color="#b4d8ff"/><stop offset=".70" stop-color="#2a8aff"/><stop offset=".75" stop-color="#0038e0"/><stop offset=".81" stop-color="#00109a"/><stop offset=".90" stop-color="#00005a"/><stop offset="1" stop-color="#00002a"/></linearGradient>
</defs><rect x="286" y="441" width="1542" height="445" filter="url(#nz)"/><rect x="286" y="441" width="1542" height="445" fill="url(#wg)"/><rect x="1590" y="441" width="238" height="445" filter="url(#nz2)" opacity=".35"/><rect x="330" y="441" width="130" height="445" filter="url(#nz2)" opacity=".25"/><rect x="924.5" y="441" width="5.0" height="445" fill="#2a50ff" opacity="0.16"/><rect x="1017.0" y="441" width="7.0" height="445" fill="#2a50ff" opacity="0.55"/><rect x="1210.5" y="441" width="6.0" height="445" fill="#2a50ff" opacity="0.50"/><rect x="1594.5" y="441" width="7.0" height="445" fill="#2a50ff" opacity="0.50"/><rect x="1691.0" y="441" width="4.0" height="445" fill="#2a50ff" opacity="0.10"/><rect x="1787.0" y="441" width="4.0" height="445" fill="#2a50ff" opacity="0.26"/><rect x="1577.5" y="441" width="3.0" height="445" fill="#2a50ff" opacity="0.12"/><rect x="1510.5" y="441" width="3.0" height="445" fill="#2a50ff" opacity="0.10"/><rect x="1306.5" y="441" width="3.0" height="445" fill="#2a50ff" opacity="0.07"/><rect x="1116.5" y="441" width="3.0" height="445" fill="#2a50ff" opacity="0.07"/><rect x="396.5" y="441" width="9.0" height="445" fill="#2a50ff" opacity="0.18"/><rect x="345.5" y="441" width="3.0" height="445" fill="#2a50ff" opacity="0.12"/><rect x="1656.5" y="441" width="3.0" height="445" fill="#2a50ff" opacity="0.12"/><path d="M1019.2 446.5h4.0M1019.6 450.5h2.9M1019.0 454.5h2.9M1018.1 475.5h3.8M1017.2 484.5h5.2M1018.7 485.5h3.9M1018.3 487.5h3.3M1017.7 489.5h4.4M1018.6 494.5h4.6M1018.4 496.5h4.8M1018.7 501.5h2.6M1017.7 507.5h4.4M1019.6 515.5h3.2M1018.1 519.5h3.8M1019.0 523.5h4.0M1017.1 528.5h5.5M1017.7 529.5h4.8M1019.1 530.5h3.1M1018.0 537.5h4.9M1017.5 540.5h5.8M1017.2 543.5h5.6M1018.2 544.5h5.1M1019.0 547.5h3.3M1017.9 549.5h5.8M1017.7 555.5h5.2M1019.8 561.5h2.6M1018.1 563.5h5.4M1017.9 569.5h4.8M1017.2 572.5h5.9M1018.0 574.5h4.7M1018.2 578.5h3.7M1018.1 580.5h4.1M1017.7 582.5h4.6M1018.7 584.5h3.3M1019.2 585.5h3.9M1018.1 587.5h5.5M1019.0 594.5h3.4M1019.1 595.5h3.8M1018.1 596.5h4.6M1017.4 605.5h5.5M1017.9 608.5h4.6M1017.5 613.5h5.1M1018.5 617.5h4.9M1017.0 622.5h5.8M1019.3 626.5h3.1M1017.8 634.5h5.5M1017.4 636.5h4.9M1017.9 644.5h5.6M1017.2 650.5h5.7M1017.9 653.5h5.4M1018.7 658.5h4.9M1018.3 662.5h3.4M1018.6 665.5h2.6M1018.6 673.5h5.0M1018.4 675.5h4.1M1017.7 691.5h5.2M1019.3 695.5h3.1M1018.6 700.5h3.8M1019.8 701.5h2.6M1019.1 708.5h3.4M1018.6 710.5h4.2M1017.4 722.5h5.5M1017.4 724.5h5.0M1018.1 728.5h3.7M1018.5 730.5h3.4M1018.5 741.5h3.8M1018.2 745.5h5.2M1019.3 746.5h3.0M1018.5 748.5h4.4M1018.6 750.5h3.5M1017.7 751.5h4.9M1018.7 756.5h3.6M1017.6 757.5h5.4M1018.4 760.5h3.0M1018.5 765.5h3.2M1018.4 774.5h2.7M1018.1 776.5h5.6M1017.6 778.5h5.3M1018.8 780.5h3.7M1017.4 788.5h5.0M1018.3 789.5h4.0M1018.8 793.5h4.7M1018.5 797.5h4.5M1017.4 799.5h5.8M1018.2 801.5h3.3M1019.5 802.5h2.6M1018.3 805.5h4.4M1018.2 806.5h4.6M1018.6 807.5h2.6M1018.7 810.5h4.0M1017.6 814.5h4.5M1019.7 818.5h2.5M1019.2 825.5h2.8M1018.5 827.5h3.1M1018.3 831.5h5.4M1017.2 833.5h5.3M1019.7 840.5h3.0M1018.0 841.5h4.2M1019.1 845.5h2.7M1019.2 849.5h3.0M1018.3 851.5h3.3M1019.5 854.5h2.9M1017.9 856.5h5.6M1017.3 857.5h5.4M1018.8 858.5h3.8M1017.5 859.5h5.7M1018.6 866.5h3.7M1018.8 871.5h2.6M1018.7 878.5h4.6M1017.7 881.5h5.6M1019.2 883.5h3.3M1018.9 885.5h4.4" stroke="#ffffff" stroke-width="1.2" fill="none"/><path d="M1017.2 443.5h5.2M1017.5 445.5h5.2M1018.5 453.5h4.8M1018.2 455.5h3.7M1018.0 459.5h4.4M1018.7 461.5h4.6M1017.8 463.5h5.1M1019.2 464.5h3.9M1018.4 467.5h3.1M1017.9 473.5h5.5M1018.9 479.5h3.0M1019.1 486.5h3.4M1019.6 491.5h2.7M1018.1 502.5h5.1M1017.6 509.5h4.9M1019.4 510.5h3.4M1019.1 512.5h3.3M1017.6 513.5h5.7M1018.8 518.5h2.8M1019.6 525.5h2.7M1018.3 539.5h4.8M1017.7 550.5h5.6M1017.9 560.5h5.4M1018.0 565.5h4.5M1019.4 568.5h3.0M1018.1 576.5h4.0M1017.4 581.5h5.4M1017.8 583.5h4.3M1019.4 588.5h2.6M1018.6 590.5h3.5M1017.5 593.5h5.1M1018.6 599.5h3.1M1018.9 602.5h3.5M1019.1 604.5h3.5M1018.4 609.5h5.2M1017.8 611.5h5.8M1017.6 621.5h5.3M1017.8 623.5h4.2M1017.0 630.5h5.9M1018.4 635.5h5.3M1017.3 637.5h4.9M1019.3 641.5h3.5M1018.8 648.5h4.6M1017.6 649.5h5.8M1018.1 654.5h4.9M1018.4 655.5h4.7M1019.3 663.5h2.9M1017.5 664.5h5.1M1018.8 666.5h3.1M1019.7 670.5h2.9M1019.2 682.5h3.6M1019.3 687.5h3.1M1018.1 699.5h5.6M1018.7 706.5h4.4M1018.6 707.5h3.8M1018.1 711.5h4.3M1018.6 713.5h2.5M1018.2 716.5h3.4M1018.6 717.5h4.1M1018.2 718.5h5.7M1018.8 719.5h3.0M1018.3 721.5h5.5M1017.9 726.5h5.3M1019.5 727.5h3.0M1018.9 731.5h2.7M1018.0 734.5h5.8M1018.8 739.5h4.3M1018.4 742.5h4.8M1018.7 743.5h4.9M1019.2 747.5h3.0M1018.9 749.5h3.6M1017.1 753.5h5.8M1019.3 758.5h3.7M1017.7 759.5h5.2M1019.6 761.5h3.0M1019.7 763.5h3.0M1018.9 767.5h4.0M1018.2 770.5h5.5M1019.2 783.5h4.0M1018.7 786.5h3.0M1018.8 787.5h4.4M1017.8 790.5h5.6M1018.5 795.5h4.9M1017.0 811.5h5.8M1018.0 816.5h5.6M1018.3 823.5h4.5M1018.2 826.5h4.7M1017.8 839.5h4.1M1018.7 842.5h3.2M1019.1 843.5h3.6M1018.9 846.5h3.9M1018.2 852.5h5.0M1018.2 855.5h5.8M1018.2 861.5h5.6M1018.8 862.5h3.1M1018.8 868.5h2.8M1019.2 870.5h3.3M1018.6 872.5h3.0M1017.6 873.5h5.5M1017.8 874.5h4.4M1017.7 876.5h4.5M1018.0 879.5h4.4" stroke="#bfe0ff" stroke-width="1.2" fill="none"/><path d="M1018.1 451.5h3.9M1018.6 456.5h3.7M1018.4 462.5h3.3M1018.2 466.5h4.2M1018.8 469.5h2.6M1017.7 470.5h4.7M1018.4 476.5h4.5M1019.1 481.5h2.9M1018.3 488.5h5.3M1017.3 490.5h5.8M1018.0 493.5h4.7M1019.4 503.5h3.3M1019.4 506.5h3.2M1018.3 511.5h5.7M1018.3 514.5h4.8M1019.2 516.5h2.6M1018.7 527.5h3.0M1017.4 535.5h5.3M1018.4 536.5h4.6M1019.0 548.5h4.4M1018.7 551.5h2.9M1019.4 553.5h3.1M1018.3 556.5h5.0M1019.0 559.5h4.5M1018.3 562.5h4.1M1017.9 564.5h5.0M1018.3 566.5h3.4M1019.2 567.5h2.9M1019.7 570.5h2.6M1017.9 571.5h4.9M1018.5 579.5h3.6M1017.6 586.5h5.5M1018.2 589.5h5.1M1019.0 591.5h3.8M1018.2 592.5h4.5M1017.4 597.5h5.0M1018.9 598.5h4.0M1019.6 600.5h2.6M1018.2 603.5h4.1M1018.0 612.5h5.1M1018.7 615.5h4.7M1017.4 619.5h5.5M1018.3 620.5h4.7M1018.4 624.5h4.4M1017.7 625.5h4.6M1018.7 627.5h3.2M1018.3 628.5h5.0M1019.3 629.5h3.3M1018.5 647.5h4.6M1019.2 652.5h2.8M1017.9 659.5h5.6M1019.5 661.5h3.4M1019.0 674.5h3.0M1018.5 678.5h3.3M1017.4 683.5h4.8M1018.6 684.5h2.8M1018.2 688.5h4.6M1018.1 698.5h5.5M1018.1 704.5h5.3M1019.0 705.5h3.6M1018.6 709.5h3.8M1018.6 720.5h3.5M1019.2 732.5h4.0M1018.1 733.5h4.9M1018.2 736.5h5.5M1019.0 737.5h4.4M1018.9 738.5h2.8M1017.6 740.5h4.5M1018.8 755.5h3.8M1018.6 766.5h3.1M1019.1 769.5h3.2M1017.9 773.5h4.6M1018.5 777.5h4.3M1019.5 785.5h3.2M1018.9 794.5h3.5M1018.4 796.5h4.8M1017.6 803.5h5.6M1018.4 815.5h5.0M1018.2 817.5h4.7M1018.2 820.5h5.6M1018.8 821.5h3.4M1018.7 824.5h3.0M1018.1 832.5h5.7M1018.8 834.5h2.8M1019.1 835.5h2.8M1019.2 838.5h3.9M1018.6 844.5h2.6M1018.3 848.5h4.2M1017.8 853.5h5.1M1018.9 860.5h2.6M1019.3 877.5h3.1M1018.1 884.5h5.7" stroke="#79b4ff" stroke-width="1.2" fill="none"/><path d="M1018.1 441.5h4.7M1017.9 442.5h5.2M1017.6 447.5h4.6M1018.3 448.5h4.9M1017.4 452.5h5.4M1017.9 457.5h3.8M1018.6 458.5h2.5M1018.8 468.5h2.7M1018.7 471.5h2.7M1018.8 472.5h2.6M1018.8 474.5h3.6M1018.7 477.5h3.4M1017.3 480.5h5.2M1017.9 482.5h5.5M1019.2 483.5h3.2M1017.2 497.5h5.5M1018.9 498.5h2.7M1018.0 499.5h5.0M1018.3 500.5h3.6M1018.5 504.5h5.3M1017.9 508.5h5.0M1017.7 517.5h4.9M1017.7 520.5h4.3M1017.4 521.5h5.5M1017.1 522.5h5.5M1018.9 526.5h4.1M1018.4 531.5h3.1M1018.5 533.5h3.2M1018.5 538.5h5.2M1019.6 545.5h3.2M1018.5 546.5h5.0M1018.3 552.5h5.1M1018.8 554.5h3.4M1019.6 558.5h2.6M1019.0 573.5h4.2M1018.1 575.5h4.7M1018.2 577.5h5.4M1018.6 601.5h3.4M1018.3 607.5h5.3M1017.6 610.5h5.8M1019.3 614.5h2.7M1017.7 616.5h5.7M1018.7 632.5h4.9M1018.1 633.5h5.8M1019.0 638.5h2.8M1018.1 640.5h4.2M1018.2 642.5h4.7M1017.8 643.5h4.3M1018.4 645.5h3.7M1018.3 646.5h3.5M1018.6 651.5h3.9M1019.1 657.5h3.4M1019.1 660.5h3.5M1018.6 667.5h5.2M1018.1 668.5h4.7M1018.9 669.5h3.7M1017.7 671.5h5.2M1019.2 672.5h3.4M1018.5 676.5h5.1M1019.4 677.5h3.3M1019.5 679.5h3.3M1018.4 680.5h3.8M1019.2 685.5h3.6M1018.5 686.5h3.3M1019.1 690.5h2.9M1017.5 694.5h5.2M1018.6 696.5h4.5M1018.2 697.5h3.5M1018.4 702.5h4.4M1018.6 703.5h4.9M1018.2 712.5h4.9M1019.0 723.5h3.3M1019.2 725.5h3.0M1018.6 729.5h3.6M1017.2 735.5h5.4M1018.6 744.5h3.1M1019.1 752.5h3.9M1017.5 754.5h5.4M1018.0 762.5h4.2M1019.5 764.5h2.8M1019.7 768.5h2.6M1018.8 772.5h4.0M1017.5 784.5h5.2M1018.8 791.5h3.1M1018.2 792.5h4.6M1017.9 798.5h4.1M1018.2 800.5h4.1M1018.6 804.5h4.8M1019.2 808.5h3.8M1018.3 809.5h5.2M1018.1 819.5h4.1M1018.3 822.5h5.4M1019.6 828.5h3.1M1018.3 829.5h5.3M1018.6 830.5h2.7M1019.0 847.5h3.1M1017.6 850.5h4.8M1017.5 863.5h5.6M1018.3 864.5h4.0M1017.7 865.5h4.6M1018.0 867.5h4.5M1017.8 869.5h4.7M1018.9 875.5h3.4M1019.0 880.5h4.1M1018.6 882.5h4.9" stroke="#a8d0ff" stroke-width="1.2" fill="none"/><path d="M1211.3 466.5h3.9M1212.3 470.5h3.1M1211.0 473.5h4.6M1211.9 477.5h3.5M1212.2 479.5h2.6M1212.4 484.5h3.0M1210.7 488.5h4.6M1211.2 490.5h4.6M1211.7 495.5h3.6M1212.3 496.5h2.1M1212.2 498.5h3.3M1212.1 501.5h4.1M1212.6 506.5h2.1M1211.6 508.5h4.2M1212.0 515.5h3.5M1210.8 533.5h4.0M1212.5 535.5h3.3M1212.0 540.5h2.8M1212.5 541.5h2.8M1212.4 551.5h3.4M1211.3 552.5h3.9M1210.9 570.5h4.7M1212.5 571.5h3.1M1211.5 572.5h3.7M1212.5 575.5h3.2M1211.5 577.5h3.8M1212.4 582.5h2.3M1211.6 587.5h4.5M1211.8 590.5h4.0M1212.1 592.5h3.0M1212.3 594.5h2.5M1211.2 603.5h3.9M1211.1 606.5h4.6M1212.8 607.5h2.6M1212.8 609.5h2.2M1212.0 614.5h3.8M1211.9 616.5h3.5M1212.2 621.5h2.7M1212.7 629.5h2.1M1211.9 634.5h2.4M1211.8 638.5h3.1M1212.7 643.5h2.2M1211.2 655.5h3.2M1212.3 663.5h2.1M1212.2 667.5h3.7M1211.1 669.5h4.7M1212.8 670.5h2.3M1211.4 671.5h4.6M1211.6 673.5h2.5M1210.8 690.5h4.0M1211.9 696.5h4.3M1211.4 698.5h3.6M1212.7 700.5h3.1M1210.9 704.5h4.0M1211.5 705.5h4.7M1211.7 707.5h2.3M1212.1 713.5h3.4M1212.1 721.5h2.6M1211.5 733.5h3.3M1211.3 734.5h4.6M1211.4 735.5h3.4M1212.0 740.5h2.1M1211.5 743.5h4.0M1211.1 746.5h4.4M1210.9 752.5h4.0M1210.8 753.5h4.3M1210.8 755.5h4.7M1212.0 756.5h3.5M1211.6 769.5h4.0M1212.1 773.5h3.2M1212.7 777.5h2.2M1211.5 779.5h4.1M1211.8 780.5h4.5M1212.1 783.5h2.1M1212.3 785.5h2.2M1211.4 790.5h3.6M1210.9 792.5h4.4M1212.0 794.5h4.2M1210.9 796.5h4.7M1211.9 799.5h4.0M1211.6 800.5h4.2M1211.2 806.5h4.4M1211.7 814.5h2.9M1211.4 816.5h3.2M1211.4 817.5h3.8M1211.3 833.5h4.0M1211.4 835.5h3.0M1212.7 836.5h2.3M1211.3 847.5h4.4M1211.8 866.5h2.1M1212.0 868.5h4.2M1211.5 871.5h3.4M1210.9 877.5h4.5M1211.3 884.5h4.6M1211.3 885.5h4.4" stroke="#e8f4ff" stroke-width="1.2" fill="none"/><path d="M1213.0 443.5h2.4M1212.1 446.5h2.1M1211.8 456.5h2.6M1211.2 459.5h4.6M1212.4 461.5h2.7M1212.1 462.5h3.5M1211.3 463.5h4.5M1211.9 464.5h4.0M1212.2 476.5h3.4M1211.9 480.5h2.8M1211.5 482.5h3.5M1212.3 491.5h3.8M1211.7 503.5h2.3M1211.8 505.5h2.2M1212.4 511.5h2.3M1212.9 513.5h2.2M1212.1 516.5h2.8M1211.7 528.5h4.3M1212.0 536.5h3.4M1212.2 546.5h2.6M1211.4 547.5h4.0M1210.9 557.5h3.8M1211.9 559.5h2.4M1211.9 561.5h2.1M1212.1 562.5h3.6M1212.6 563.5h2.4M1211.3 569.5h3.1M1211.3 578.5h4.3M1212.2 581.5h3.1M1211.7 583.5h2.9M1211.1 588.5h3.7M1212.1 589.5h4.1M1211.2 591.5h3.4M1211.6 595.5h2.7M1211.6 600.5h3.9M1211.7 601.5h2.8M1212.0 604.5h4.3M1211.5 620.5h3.9M1212.0 622.5h4.0M1211.9 630.5h2.5M1212.6 644.5h2.2M1211.7 646.5h3.2M1212.1 647.5h2.2M1212.0 652.5h2.2M1211.6 653.5h3.3M1212.2 657.5h2.5M1210.8 675.5h4.2M1212.1 677.5h2.8M1211.8 682.5h2.4M1211.8 684.5h2.1M1212.4 687.5h2.3M1211.2 689.5h3.7M1210.6 699.5h4.3M1211.3 701.5h3.3M1211.0 710.5h4.5M1212.9 712.5h2.6M1212.0 719.5h3.5M1212.7 725.5h2.6M1211.7 728.5h2.9M1212.5 737.5h2.5M1211.4 739.5h4.3M1211.8 759.5h3.4M1212.6 765.5h3.0M1212.2 766.5h3.5M1211.5 770.5h3.8M1211.5 787.5h3.3M1212.4 789.5h3.6M1211.7 797.5h2.7M1212.9 812.5h2.5M1212.0 820.5h3.9M1211.4 821.5h3.0M1211.3 830.5h4.3M1212.0 832.5h4.1M1211.8 834.5h3.7M1210.6 837.5h4.5M1212.0 839.5h4.2M1211.9 842.5h3.2M1210.9 843.5h4.3M1212.4 849.5h2.1M1210.6 854.5h4.6M1212.2 856.5h2.3M1211.6 864.5h4.5M1211.8 875.5h2.8M1211.2 878.5h3.5M1210.9 880.5h4.1" stroke="#8cc0ff" stroke-width="1.2" fill="none"/><path d="M1211.3 442.5h3.1M1211.5 447.5h3.4M1211.4 449.5h4.2M1211.3 451.5h3.6M1210.9 453.5h4.7M1212.2 457.5h3.7M1212.0 460.5h2.5M1212.3 465.5h2.1M1211.8 468.5h3.0M1211.7 472.5h3.6M1211.4 474.5h2.9M1211.5 475.5h2.8M1211.7 481.5h3.0M1212.6 486.5h2.7M1212.0 492.5h2.5M1212.2 493.5h2.8M1212.0 500.5h2.2M1210.9 504.5h4.5M1211.5 521.5h4.0M1211.9 523.5h2.1M1212.0 526.5h4.1M1212.2 529.5h2.6M1211.2 530.5h3.8M1212.0 534.5h4.0M1212.0 539.5h3.1M1212.1 543.5h2.3M1210.7 545.5h4.6M1211.0 550.5h3.9M1211.6 554.5h3.9M1212.8 555.5h2.2M1211.3 556.5h3.5M1211.9 560.5h4.1M1212.9 566.5h2.3M1212.1 567.5h2.7M1211.7 573.5h2.4M1211.9 579.5h3.0M1211.3 580.5h4.5M1212.4 585.5h3.1M1212.1 586.5h3.7M1212.5 596.5h2.5M1211.4 597.5h4.0M1211.5 598.5h3.6M1210.6 602.5h4.4M1211.0 608.5h4.7M1212.1 615.5h2.8M1211.4 617.5h4.4M1212.3 623.5h3.1M1211.7 624.5h4.2M1212.5 625.5h2.4M1211.7 632.5h4.4M1212.0 635.5h2.7M1211.3 640.5h3.4M1212.0 641.5h3.7M1212.3 642.5h3.1M1212.3 645.5h3.4M1212.5 648.5h2.2M1212.3 660.5h2.3M1212.9 661.5h2.4M1212.5 665.5h2.6M1212.4 666.5h3.0M1211.7 668.5h4.6M1211.6 674.5h3.7M1211.1 676.5h3.4M1211.0 685.5h3.7M1212.1 691.5h2.6M1212.2 694.5h3.8M1211.6 702.5h4.3M1211.5 703.5h2.9M1211.7 706.5h2.8M1211.7 708.5h3.9M1211.6 709.5h3.7M1211.6 715.5h4.5M1212.4 717.5h3.0M1211.9 720.5h2.5M1212.0 722.5h2.8M1212.0 724.5h3.2M1212.3 726.5h2.9M1212.7 731.5h2.6M1212.0 732.5h2.1M1211.9 736.5h4.1M1212.4 742.5h2.2M1211.9 745.5h2.2M1212.1 751.5h3.2M1212.5 754.5h2.3M1212.2 757.5h2.6M1211.6 760.5h2.6M1212.6 764.5h3.0M1211.9 767.5h4.4M1211.6 771.5h3.3M1212.3 772.5h2.3M1210.5 776.5h4.6M1212.0 778.5h3.9M1211.8 781.5h4.7M1211.6 791.5h2.9M1212.0 802.5h3.2M1211.5 803.5h3.4M1212.6 804.5h3.2M1211.9 805.5h2.6M1212.2 808.5h2.1M1211.9 809.5h2.6M1211.4 823.5h3.8M1211.9 824.5h2.6M1211.6 827.5h3.1M1212.0 828.5h4.1M1212.7 846.5h2.5M1211.3 850.5h4.7M1212.3 860.5h2.5M1211.4 861.5h3.5M1211.2 863.5h4.7M1210.8 869.5h4.4" stroke="#5c9cff" stroke-width="1.2" fill="none"/><path d="M1211.5 441.5h4.2M1211.9 444.5h4.1M1211.4 445.5h4.2M1211.4 448.5h4.7M1212.3 450.5h3.5M1212.3 452.5h2.9M1211.8 454.5h2.8M1211.9 455.5h2.4M1211.8 458.5h4.6M1211.3 467.5h3.7M1213.0 469.5h2.3M1212.3 471.5h3.8M1211.7 478.5h4.3M1212.6 483.5h3.2M1210.7 485.5h4.6M1211.3 487.5h4.2M1212.3 494.5h3.7M1211.4 499.5h4.6M1212.0 507.5h2.7M1212.1 509.5h3.7M1212.6 510.5h3.2M1211.9 512.5h4.1M1212.6 518.5h2.2M1212.8 522.5h2.4M1211.7 524.5h3.0M1212.7 525.5h2.4M1212.1 527.5h3.2M1211.4 531.5h4.0M1211.9 537.5h2.1M1212.8 538.5h2.7M1211.0 542.5h4.5M1211.2 544.5h4.6M1212.1 549.5h3.6M1211.9 553.5h3.5M1212.1 558.5h4.0M1212.3 564.5h2.3M1212.2 574.5h3.8M1212.1 584.5h2.5M1212.4 593.5h3.3M1212.0 599.5h3.6M1212.3 611.5h3.5M1211.2 612.5h4.2M1210.9 613.5h4.3M1211.4 618.5h2.9M1212.3 619.5h2.6M1211.4 627.5h4.1M1211.5 628.5h3.3M1211.4 631.5h3.7M1212.0 636.5h3.4M1211.4 639.5h4.4M1212.1 649.5h4.2M1211.4 650.5h3.3M1212.0 651.5h3.9M1211.1 654.5h3.9M1211.0 656.5h4.5M1211.7 659.5h3.2M1211.2 664.5h3.8M1212.5 679.5h2.8M1212.7 680.5h2.1M1212.8 683.5h2.8M1211.6 686.5h3.9M1211.3 688.5h2.9M1211.7 711.5h2.7M1212.6 714.5h2.1M1212.0 718.5h3.9M1211.8 727.5h3.2M1212.0 729.5h4.2M1212.8 730.5h2.2M1212.5 738.5h2.4M1210.9 741.5h4.1M1212.3 747.5h3.0M1212.5 748.5h2.4M1211.5 749.5h3.4M1211.1 750.5h4.6M1211.9 762.5h2.3M1212.2 763.5h2.8M1212.5 768.5h3.2M1211.5 774.5h4.3M1211.3 775.5h4.2M1212.3 784.5h3.0M1213.0 786.5h2.3M1212.1 788.5h3.0M1212.7 793.5h2.1M1211.7 801.5h3.2M1212.5 807.5h2.2M1212.8 810.5h2.2M1211.9 813.5h2.4M1212.4 818.5h3.6M1212.0 819.5h3.8M1211.7 822.5h2.9M1211.7 825.5h3.1M1212.1 826.5h2.7M1212.5 829.5h2.9M1212.0 831.5h4.1M1211.8 840.5h3.1M1211.2 841.5h3.6M1211.7 845.5h4.5M1211.9 851.5h3.3M1212.2 853.5h2.7M1210.8 855.5h4.0M1210.8 857.5h4.3M1211.8 858.5h3.2M1211.3 859.5h3.0M1212.6 862.5h2.3M1212.5 865.5h2.9M1211.3 870.5h3.4M1212.8 873.5h2.6M1212.3 876.5h2.4M1212.7 879.5h2.5M1211.9 881.5h3.7M1211.2 883.5h3.4" stroke="#b0d4ff" stroke-width="1.2" fill="none"/><path d="M1596.4 442.5h2.4M1595.9 450.5h3.4M1597.7 462.5h2.4M1596.9 464.5h3.1M1595.7 465.5h3.0M1595.4 468.5h3.9M1596.3 472.5h4.2M1596.1 474.5h2.6M1595.9 477.5h5.2M1597.0 479.5h3.4M1595.6 483.5h4.2M1596.1 485.5h4.7M1595.4 486.5h5.1M1595.8 488.5h4.2M1597.1 497.5h2.9M1595.3 498.5h4.5M1596.7 500.5h2.4M1594.8 515.5h5.0M1596.2 516.5h3.1M1594.9 518.5h4.4M1596.6 519.5h4.4M1595.3 528.5h4.5M1595.5 529.5h4.4M1595.4 531.5h5.1M1596.8 534.5h3.2M1595.7 539.5h3.4M1597.2 548.5h3.1M1595.8 553.5h4.0M1594.8 554.5h5.0M1596.9 556.5h3.3M1595.8 562.5h4.8M1595.4 563.5h3.8M1596.0 570.5h4.0M1595.6 571.5h4.3M1596.4 574.5h3.6M1596.2 582.5h2.6M1596.1 585.5h3.9M1595.5 588.5h3.6M1595.7 591.5h4.6M1596.2 601.5h4.8M1595.0 604.5h4.7M1595.9 620.5h2.5M1595.7 622.5h5.3M1596.0 623.5h4.9M1595.8 624.5h4.0M1595.5 631.5h3.4M1595.9 637.5h5.1M1595.8 638.5h3.5M1596.9 643.5h4.0M1595.8 653.5h4.9M1595.0 658.5h5.0M1596.2 659.5h2.9M1596.2 666.5h4.6M1595.2 668.5h4.5M1596.3 673.5h4.1M1596.9 674.5h3.1M1595.4 675.5h5.0M1596.5 685.5h3.4M1595.5 690.5h3.5M1596.1 694.5h4.9M1595.5 696.5h3.2M1597.5 703.5h2.6M1596.1 706.5h5.3M1596.7 708.5h2.5M1596.4 712.5h2.6M1596.1 714.5h4.5M1596.8 715.5h4.0M1596.8 721.5h2.7M1596.1 725.5h3.4M1595.5 735.5h3.4M1596.9 753.5h3.3M1595.5 754.5h3.5M1596.5 758.5h3.4M1596.2 769.5h4.8M1595.3 776.5h4.0M1597.1 779.5h2.5M1597.1 782.5h2.9M1597.0 784.5h3.6M1596.2 788.5h4.1M1596.4 793.5h3.7M1596.9 798.5h3.7M1596.8 800.5h2.3M1595.4 813.5h3.6M1595.7 821.5h4.5M1595.1 829.5h5.3M1596.2 837.5h4.9M1596.0 840.5h5.0M1596.1 845.5h4.5M1595.2 855.5h4.9M1596.1 868.5h3.1M1595.8 874.5h4.6M1596.7 883.5h2.5" stroke="#d8ecff" stroke-width="1.2" fill="none"/><path d="M1596.2 443.5h3.9M1596.0 467.5h3.4M1596.3 471.5h2.4M1597.3 478.5h3.0M1595.4 492.5h4.7M1595.6 494.5h4.8M1594.9 508.5h5.0M1595.0 511.5h5.1M1596.1 512.5h3.7M1596.5 533.5h3.8M1597.2 535.5h2.8M1594.9 536.5h4.9M1596.3 540.5h4.1M1597.3 542.5h2.6M1595.3 546.5h4.9M1595.0 549.5h5.0M1596.4 557.5h4.0M1596.8 568.5h3.8M1596.1 577.5h4.7M1596.0 581.5h2.4M1596.4 586.5h3.5M1596.4 589.5h2.7M1597.3 596.5h2.4M1594.8 599.5h5.3M1596.2 606.5h4.9M1596.2 613.5h2.3M1596.7 616.5h2.6M1595.5 617.5h3.3M1595.9 618.5h4.0M1595.4 619.5h4.5M1597.4 621.5h2.6M1596.0 626.5h4.9M1597.2 630.5h2.6M1595.9 634.5h3.8M1596.5 640.5h3.7M1594.7 644.5h5.2M1596.6 645.5h3.3M1597.4 651.5h2.3M1596.6 654.5h3.5M1595.8 657.5h5.1M1595.8 662.5h5.2M1596.8 663.5h4.1M1596.6 684.5h3.6M1595.4 688.5h4.4M1595.6 697.5h4.1M1595.4 698.5h4.3M1595.5 699.5h4.7M1595.9 701.5h4.8M1595.4 702.5h4.3M1596.2 720.5h4.4M1596.7 727.5h2.4M1596.1 728.5h3.7M1596.5 729.5h4.4M1597.6 730.5h2.5M1597.4 731.5h2.7M1596.2 741.5h3.4M1596.2 746.5h4.9M1595.8 750.5h3.0M1595.9 752.5h4.7M1596.1 756.5h3.9M1596.2 757.5h3.9M1596.7 765.5h2.7M1595.8 768.5h4.1M1596.3 773.5h2.9M1596.4 780.5h4.3M1596.2 781.5h4.6M1595.9 783.5h2.5M1595.4 785.5h3.8M1595.8 791.5h4.5M1595.6 792.5h4.1M1596.8 795.5h2.3M1595.3 799.5h4.1M1597.0 815.5h2.7M1596.0 825.5h2.7M1595.9 828.5h4.8M1596.2 832.5h4.6M1595.9 833.5h2.8M1594.7 836.5h5.1M1597.2 838.5h2.9M1596.6 849.5h4.1M1595.9 856.5h4.0M1596.8 857.5h3.4M1597.0 858.5h3.0M1596.3 864.5h4.4M1596.2 865.5h2.6M1596.5 870.5h3.9M1595.6 876.5h3.3M1595.8 880.5h2.9M1596.2 885.5h4.6" stroke="#7ab0ff" stroke-width="1.2" fill="none"/><path d="M1597.2 441.5h2.5M1596.3 445.5h3.4M1597.0 446.5h3.0M1595.2 448.5h4.7M1595.8 449.5h4.9M1596.2 451.5h3.3M1596.8 452.5h3.5M1596.1 454.5h3.1M1596.2 463.5h4.4M1595.3 469.5h4.4M1596.6 470.5h3.4M1596.4 473.5h3.8M1595.3 482.5h4.2M1596.7 501.5h3.1M1596.9 507.5h3.8M1596.3 509.5h2.4M1596.3 510.5h2.9M1595.5 520.5h4.9M1595.5 521.5h4.6M1596.1 522.5h3.4M1597.4 523.5h2.4M1597.1 525.5h3.3M1594.8 527.5h4.6M1594.8 532.5h5.2M1595.3 538.5h3.8M1594.8 541.5h4.7M1595.8 543.5h3.0M1595.8 545.5h3.1M1596.3 551.5h3.5M1595.1 558.5h4.6M1596.4 559.5h3.2M1595.4 560.5h4.5M1596.3 561.5h2.7M1597.0 564.5h2.3M1596.7 565.5h2.4M1596.0 567.5h2.3M1596.1 569.5h4.3M1596.6 576.5h3.0M1595.6 584.5h4.0M1596.2 587.5h2.9M1596.9 592.5h2.7M1594.7 593.5h5.3M1595.3 609.5h5.1M1596.2 610.5h4.4M1596.8 611.5h3.1M1595.5 614.5h5.2M1596.1 625.5h4.9M1596.0 629.5h2.9M1594.8 633.5h5.2M1596.4 639.5h4.2M1595.0 647.5h4.5M1595.4 648.5h4.7M1595.2 656.5h3.8M1597.3 661.5h2.8M1595.1 665.5h4.9M1596.0 667.5h2.3M1595.8 670.5h3.1M1596.6 671.5h3.5M1595.6 677.5h3.8M1595.1 681.5h4.3M1596.3 682.5h3.1M1596.7 683.5h3.4M1596.3 691.5h3.6M1596.5 704.5h3.7M1596.9 709.5h3.7M1596.2 710.5h3.4M1596.5 713.5h3.7M1597.5 718.5h2.6M1596.0 719.5h4.0M1596.1 722.5h2.9M1595.5 732.5h5.0M1595.4 734.5h4.1M1596.7 736.5h2.6M1596.0 737.5h3.3M1596.6 743.5h3.4M1596.1 745.5h4.5M1595.9 747.5h2.8M1596.7 755.5h2.6M1595.9 761.5h3.5M1596.0 762.5h5.0M1596.0 764.5h3.2M1595.3 771.5h4.2M1595.8 789.5h4.2M1596.5 796.5h3.4M1597.6 804.5h2.4M1595.2 806.5h3.9M1595.7 809.5h3.7M1595.8 811.5h3.7M1596.2 817.5h3.7M1596.3 819.5h5.0M1595.0 822.5h4.7M1596.7 824.5h3.0M1596.0 826.5h3.2M1596.6 827.5h4.3M1596.2 831.5h3.2M1596.7 835.5h3.6M1595.5 842.5h3.6M1595.6 843.5h3.2M1596.0 847.5h2.8M1595.9 852.5h3.0M1596.4 853.5h2.4M1596.3 854.5h4.9M1596.6 860.5h3.9M1595.9 862.5h4.8M1595.9 866.5h2.8M1595.2 869.5h5.0M1595.7 871.5h3.4M1597.0 877.5h2.8M1595.9 879.5h3.5M1597.0 881.5h3.1M1597.1 882.5h3.3" stroke="#4c8cff" stroke-width="1.2" fill="none"/><path d="M1596.3 453.5h2.6M1597.1 455.5h3.4M1596.1 456.5h3.8M1595.9 458.5h5.3M1594.9 459.5h4.9M1596.4 461.5h4.3M1596.0 466.5h3.7M1594.9 476.5h5.0M1595.2 480.5h4.4M1597.0 481.5h3.2M1594.5 484.5h5.3M1596.6 487.5h4.5M1595.5 489.5h4.3M1596.5 491.5h2.5M1597.2 493.5h3.2M1595.7 496.5h4.8M1597.2 499.5h2.5M1594.8 502.5h4.8M1596.3 503.5h4.6M1597.4 504.5h2.4M1595.4 505.5h5.2M1596.2 506.5h5.3M1595.8 513.5h5.0M1596.0 514.5h2.8M1597.2 517.5h3.2M1596.1 524.5h2.4M1595.9 526.5h3.8M1595.6 537.5h3.0M1595.0 547.5h4.3M1595.7 555.5h3.3M1595.4 566.5h3.5M1596.2 572.5h4.5M1597.1 573.5h3.4M1596.9 575.5h3.5M1596.7 578.5h3.1M1595.1 579.5h5.3M1596.6 580.5h2.9M1597.2 583.5h2.4M1596.1 590.5h3.6M1597.2 594.5h3.0M1595.1 597.5h4.2M1595.1 598.5h4.9M1595.3 600.5h4.7M1595.5 603.5h5.0M1597.1 607.5h2.5M1596.5 608.5h2.5M1594.7 612.5h5.1M1596.0 627.5h3.2M1595.5 628.5h3.8M1596.6 632.5h3.9M1596.2 635.5h3.3M1595.6 636.5h4.8M1595.5 641.5h3.8M1597.2 646.5h2.9M1596.3 655.5h4.7M1595.7 660.5h5.3M1595.7 664.5h4.8M1595.2 669.5h5.0M1595.9 678.5h4.7M1596.2 679.5h3.4M1595.7 680.5h4.0M1595.4 686.5h4.4M1595.8 687.5h3.7M1595.5 692.5h4.4M1596.1 693.5h3.3M1596.1 705.5h2.7M1596.1 707.5h2.9M1595.4 717.5h5.3M1595.9 723.5h5.3M1595.4 726.5h3.7M1596.8 733.5h2.3M1595.4 739.5h4.9M1595.5 742.5h4.9M1595.2 744.5h4.0M1596.4 749.5h2.3M1596.5 751.5h3.9M1595.4 759.5h3.9M1596.7 760.5h2.3M1596.7 763.5h2.3M1597.1 766.5h2.6M1595.5 770.5h3.4M1594.9 777.5h5.1M1596.1 778.5h3.3M1596.1 786.5h2.7M1595.4 787.5h4.3M1597.2 794.5h3.0M1595.9 801.5h4.3M1596.9 802.5h3.0M1597.5 805.5h2.5M1597.4 807.5h2.6M1595.8 808.5h2.8M1596.7 812.5h3.6M1595.4 814.5h3.9M1596.4 816.5h2.4M1595.9 818.5h4.5M1596.9 820.5h2.4M1596.4 823.5h3.4M1595.8 830.5h4.4M1595.7 839.5h3.8M1597.1 841.5h3.4M1595.8 844.5h4.9M1595.2 846.5h4.9M1597.2 848.5h2.6M1596.7 850.5h4.3M1596.5 861.5h3.8M1595.6 863.5h4.7M1596.7 867.5h2.8M1595.5 872.5h4.2M1595.9 873.5h2.6M1597.0 884.5h3.6" stroke="#5a9cff" stroke-width="1.2" fill="none"/><path d="M925.1 447.5h2.3M924.4 454.5h3.8M925.6 462.5h2.2M925.8 463.5h3.5M924.7 480.5h3.1M924.8 494.5h4.0M925.1 499.5h3.8M924.0 525.5h4.2M925.2 530.5h4.1M925.2 538.5h2.5M926.2 540.5h3.4M925.7 543.5h3.8M925.4 547.5h2.7M926.1 551.5h2.4M924.9 552.5h4.1M924.7 563.5h4.1M925.9 584.5h2.0M924.9 588.5h3.4M924.4 599.5h3.9M925.8 604.5h3.0M925.5 608.5h3.1M926.1 637.5h1.8M925.3 644.5h3.1M924.9 645.5h3.6M926.3 647.5h2.4M925.3 649.5h4.2M924.8 651.5h4.1M925.6 655.5h2.3M926.8 669.5h1.9M925.4 679.5h3.8M924.8 696.5h2.6M925.3 708.5h3.3M926.8 718.5h2.0M926.1 726.5h1.9M925.1 730.5h2.1M926.2 731.5h2.1M926.0 754.5h2.8M924.8 759.5h2.6M924.8 768.5h4.0M924.7 771.5h2.7M924.7 772.5h2.9M925.3 781.5h3.3M925.2 789.5h2.9M925.5 791.5h2.6M924.3 795.5h4.1M926.9 813.5h2.2M925.3 822.5h2.0M926.0 825.5h2.0M926.0 827.5h3.1M924.3 831.5h4.0M925.5 847.5h4.1M925.8 848.5h3.2M926.1 855.5h3.1M925.9 864.5h4.1M925.1 865.5h2.7M924.9 869.5h3.2M926.6 884.5h2.4" stroke="#3d6cf0" stroke-width="1.2" fill="none"/><path d="M926.4 450.5h2.8M924.7 471.5h3.7M925.9 486.5h3.4M924.6 487.5h4.0M925.2 490.5h2.7M926.4 496.5h1.9M926.6 498.5h2.4M924.7 506.5h3.6M926.5 516.5h2.9M926.3 532.5h2.2M925.6 570.5h3.1M926.5 578.5h2.6M926.0 580.5h3.3M926.2 600.5h2.2M924.8 602.5h4.1M925.2 603.5h4.2M925.2 623.5h3.5M924.9 625.5h4.1M926.3 632.5h2.6M925.5 641.5h3.2M924.4 646.5h3.5M924.9 656.5h2.4M926.3 657.5h2.9M926.3 662.5h2.2M924.6 663.5h3.1M925.7 666.5h3.3M924.7 667.5h2.7M925.8 670.5h2.2M925.0 685.5h3.6M924.6 691.5h4.0M925.9 701.5h3.6M924.5 702.5h3.9M926.0 707.5h2.4M924.4 710.5h4.1M924.5 711.5h3.6M926.2 722.5h2.8M924.8 728.5h4.0M925.7 741.5h2.0M926.5 749.5h1.9M926.4 750.5h1.9M926.4 790.5h3.2M925.5 806.5h3.6M926.0 811.5h3.8M926.1 824.5h2.0M926.5 832.5h2.0M924.4 841.5h3.3M925.5 842.5h4.0M924.8 845.5h3.3M924.4 851.5h3.6M926.0 852.5h3.2M925.8 859.5h3.4M926.9 867.5h1.8M925.3 870.5h2.9M926.4 872.5h2.9M926.4 876.5h2.4M925.6 883.5h3.7" stroke="#2c50d8" stroke-width="1.2" fill="none"/><path d="M926.6 448.5h2.3M925.0 449.5h3.2M924.5 451.5h4.2M924.9 452.5h2.3M924.5 459.5h3.2M926.9 468.5h2.2M925.5 483.5h3.5M926.6 491.5h1.8M925.4 492.5h2.0M925.8 502.5h3.2M924.9 514.5h2.8M924.8 518.5h4.1M926.1 519.5h3.4M925.1 526.5h3.6M925.8 533.5h2.6M924.4 541.5h3.4M925.0 550.5h3.6M924.5 557.5h3.1M924.7 558.5h3.5M926.0 565.5h3.8M926.8 590.5h2.2M925.0 601.5h3.5M924.7 609.5h4.1M925.0 610.5h3.7M925.8 624.5h2.2M925.9 626.5h2.7M924.4 628.5h3.8M924.7 633.5h3.1M925.4 635.5h2.5M925.0 638.5h2.2M926.4 660.5h2.5M925.7 675.5h3.2M925.6 680.5h1.8M925.3 686.5h1.9M925.2 689.5h3.3M926.6 692.5h2.1M925.0 717.5h2.4M925.7 720.5h2.7M925.4 724.5h3.6M926.4 739.5h2.3M924.8 757.5h2.5M926.9 760.5h2.0M925.9 762.5h3.8M924.1 774.5h4.0M926.3 775.5h2.0M925.8 784.5h4.1M925.2 786.5h3.0M926.5 797.5h2.9M925.8 799.5h2.0M925.0 802.5h2.5M925.0 808.5h3.5M924.1 814.5h4.0M926.2 815.5h2.7M925.6 823.5h2.8M925.3 828.5h3.2M924.7 846.5h4.1M925.9 858.5h3.5M925.0 862.5h4.2M925.8 873.5h2.8M924.6 875.5h2.9" stroke="#5a8cff" stroke-width="1.2" fill="none"/><path d="M1691.1 443.5h2.1M1692.5 470.5h1.5M1691.8 495.5h2.4M1691.6 502.5h2.2M1692.2 511.5h2.3M1691.8 536.5h2.4M1691.8 555.5h2.8M1692.7 557.5h1.7M1691.5 571.5h2.0M1691.9 573.5h2.8M1691.2 577.5h2.8M1692.4 578.5h1.7M1692.3 580.5h3.0M1690.6 588.5h3.2M1692.4 599.5h1.7M1692.1 608.5h1.6M1691.5 612.5h2.8M1691.3 620.5h2.9M1690.9 625.5h2.8M1690.7 628.5h3.5M1691.1 629.5h2.7M1691.1 634.5h2.8M1691.2 640.5h2.5M1691.4 646.5h1.9M1692.0 667.5h2.0M1691.6 669.5h3.2M1690.6 673.5h2.9M1692.4 676.5h3.1M1691.4 678.5h3.3M1692.0 685.5h3.4M1692.1 690.5h2.8M1691.4 711.5h2.7M1690.7 715.5h2.9M1692.3 750.5h3.2M1690.7 753.5h3.2M1690.8 768.5h2.8M1691.0 780.5h2.4M1692.5 781.5h2.4M1691.2 798.5h2.2M1692.6 801.5h2.3M1692.5 813.5h1.6M1691.9 817.5h1.6M1692.9 827.5h2.0M1692.7 837.5h2.0M1692.0 845.5h1.7M1692.1 853.5h2.4M1691.2 860.5h1.8M1692.3 861.5h2.2M1691.8 871.5h1.6M1692.7 880.5h1.7M1692.2 883.5h3.0" stroke="#2c50d8" stroke-width="1.2" fill="none"/><path d="M1692.8 444.5h1.8M1692.6 446.5h2.6M1691.4 453.5h2.2M1691.8 462.5h2.3M1692.0 464.5h3.3M1691.6 469.5h2.4M1692.3 475.5h2.2M1692.6 483.5h2.0M1690.7 487.5h3.3M1692.3 500.5h2.3M1691.5 503.5h2.5M1692.4 516.5h2.2M1692.8 518.5h2.3M1691.7 531.5h3.2M1691.4 539.5h2.1M1691.5 547.5h2.8M1692.0 550.5h2.5M1693.1 558.5h1.6M1692.9 563.5h2.1M1691.6 581.5h2.6M1690.6 585.5h3.3M1692.7 604.5h1.7M1692.9 609.5h2.0M1692.2 610.5h2.7M1691.3 618.5h2.3M1692.9 630.5h1.8M1691.6 650.5h3.0M1692.6 681.5h2.0M1692.6 686.5h2.4M1692.1 692.5h1.9M1692.2 700.5h2.9M1690.8 701.5h2.8M1691.8 710.5h2.3M1692.5 739.5h1.7M1691.4 743.5h2.2M1691.5 747.5h2.5M1691.2 766.5h2.9M1692.0 805.5h2.7M1691.8 809.5h1.9M1692.4 823.5h1.6M1691.6 832.5h3.0M1690.3 833.5h3.4M1691.8 836.5h1.6M1692.3 838.5h2.4M1691.0 843.5h2.6M1692.8 855.5h2.0M1692.7 856.5h1.7M1692.0 862.5h2.5M1690.8 865.5h2.8M1691.2 868.5h2.4M1692.4 874.5h1.5M1691.2 878.5h1.6M1692.2 882.5h2.1" stroke="#3d6cf0" stroke-width="1.2" fill="none"/><path d="M1787.2 441.5h3.7M1786.7 447.5h2.7M1788.0 453.5h4.0M1786.4 456.5h3.9M1788.3 457.5h2.7M1786.9 469.5h3.6M1786.8 470.5h3.8M1787.4 472.5h4.2M1787.8 482.5h3.3M1787.3 483.5h3.0M1787.3 489.5h3.2M1786.7 514.5h2.7M1787.5 515.5h2.1M1788.1 522.5h1.8M1787.8 525.5h4.0M1786.6 529.5h4.2M1788.4 530.5h3.1M1787.8 557.5h3.1M1787.8 558.5h2.7M1788.0 564.5h3.5M1787.6 592.5h2.8M1786.6 605.5h3.3M1786.8 607.5h2.6M1787.8 622.5h2.0M1786.6 624.5h3.9M1787.8 643.5h2.7M1786.3 644.5h3.5M1786.5 647.5h3.4M1787.8 648.5h3.6M1787.6 654.5h2.1M1787.9 655.5h3.0M1786.5 665.5h3.2M1786.7 668.5h2.9M1787.6 672.5h2.1M1787.4 673.5h3.2M1787.6 675.5h3.2M1786.9 681.5h2.1M1786.6 692.5h4.2M1788.2 693.5h3.4M1787.2 694.5h1.9M1787.9 706.5h3.5M1786.9 721.5h3.2M1787.1 722.5h3.3M1786.8 735.5h3.3M1787.8 736.5h3.1M1788.2 756.5h3.4M1787.8 763.5h3.2M1787.2 765.5h3.3M1786.3 766.5h3.5M1787.9 771.5h4.0M1787.2 774.5h4.1M1787.3 793.5h4.1M1786.9 798.5h2.7M1787.5 799.5h2.9M1787.7 800.5h3.8M1787.1 805.5h3.7M1787.7 810.5h2.1M1787.3 827.5h2.9M1787.7 844.5h3.3M1787.3 851.5h3.9M1786.2 863.5h3.8M1787.0 869.5h2.3M1787.8 870.5h3.5M1786.6 875.5h2.8M1788.3 883.5h3.3" stroke="#3866e8" stroke-width="1.2" fill="none"/><path d="M1788.0 444.5h2.6M1788.0 448.5h3.9M1788.2 454.5h3.5M1788.7 465.5h2.3M1787.8 467.5h2.9M1787.4 478.5h2.8M1786.8 496.5h2.7M1786.8 498.5h2.5M1787.2 501.5h3.0M1787.2 506.5h3.6M1788.5 509.5h3.0M1787.1 519.5h2.9M1788.4 528.5h2.5M1786.8 532.5h2.7M1786.5 547.5h3.4M1786.9 554.5h3.2M1788.4 571.5h1.9M1787.8 577.5h2.1M1786.3 579.5h3.8M1787.9 580.5h2.7M1786.6 583.5h3.0M1788.2 604.5h1.9M1787.5 606.5h4.1M1788.5 609.5h2.0M1788.3 639.5h3.4M1787.1 641.5h2.3M1788.3 642.5h2.3M1788.4 658.5h2.7M1786.3 670.5h3.6M1786.7 677.5h3.8M1786.6 682.5h3.1M1787.1 695.5h3.6M1786.9 697.5h3.8M1787.5 700.5h2.6M1786.8 701.5h3.9M1786.8 702.5h3.8M1787.0 703.5h4.0M1786.3 704.5h3.7M1787.1 705.5h3.8M1787.6 708.5h3.3M1787.8 719.5h3.2M1786.9 730.5h4.0M1788.4 742.5h1.9M1788.8 745.5h2.2M1788.4 768.5h3.0M1788.2 773.5h3.6M1787.3 780.5h3.2M1786.9 783.5h2.7M1786.8 789.5h3.4M1787.6 791.5h3.0M1787.0 801.5h3.5M1788.8 808.5h1.8M1787.2 811.5h4.1M1787.9 816.5h3.9M1787.8 820.5h3.2M1786.0 823.5h4.2M1786.8 841.5h3.6M1788.0 843.5h1.8M1786.8 845.5h3.8M1786.5 852.5h3.6M1786.5 861.5h4.1M1788.4 864.5h3.1M1788.2 865.5h2.7M1787.9 867.5h2.8M1787.1 878.5h4.1" stroke="#4c80ff" stroke-width="1.2" fill="none"/><path d="M1787.7 443.5h2.7M1786.7 446.5h3.3M1788.0 449.5h2.4M1787.3 450.5h2.2M1787.9 451.5h3.5M1787.0 462.5h3.7M1788.7 463.5h2.3M1788.3 480.5h2.3M1788.1 481.5h2.5M1788.7 485.5h2.0M1788.1 487.5h3.6M1788.1 491.5h3.0M1786.7 495.5h2.9M1786.8 500.5h3.7M1788.4 504.5h2.5M1787.0 508.5h4.0M1787.5 510.5h3.7M1787.8 511.5h2.1M1787.2 513.5h3.7M1787.3 524.5h2.6M1787.5 526.5h3.9M1787.3 527.5h3.6M1788.2 533.5h3.5M1787.1 534.5h2.1M1787.6 536.5h3.7M1788.9 549.5h2.1M1787.8 551.5h3.8M1788.8 553.5h2.4M1786.6 556.5h4.1M1787.2 560.5h2.1M1787.5 563.5h2.4M1788.9 570.5h2.0M1787.2 574.5h4.0M1787.5 576.5h3.6M1787.9 581.5h3.4M1786.8 586.5h3.2M1788.8 588.5h1.9M1788.6 593.5h2.3M1788.2 595.5h3.0M1786.6 598.5h3.6M1787.1 602.5h2.5M1786.5 611.5h3.4M1787.9 618.5h2.4M1787.8 625.5h2.6M1787.0 627.5h2.3M1788.0 628.5h3.1M1786.3 650.5h3.6M1788.4 659.5h2.9M1787.3 666.5h2.5M1786.6 676.5h3.7M1787.0 678.5h2.9M1786.9 680.5h2.6M1787.3 684.5h2.3M1786.2 689.5h3.7M1788.0 698.5h2.8M1788.4 707.5h3.2M1787.0 712.5h2.3M1788.1 716.5h2.6M1787.4 717.5h2.4M1786.9 718.5h3.3M1787.1 724.5h4.0M1788.7 725.5h2.5M1786.0 726.5h4.0M1787.0 734.5h4.0M1787.0 739.5h2.3M1786.7 741.5h3.4M1788.3 748.5h2.5M1787.9 752.5h3.1M1787.5 757.5h2.3M1786.9 758.5h3.2M1787.2 759.5h2.3M1788.3 782.5h2.0M1787.3 784.5h3.8M1787.2 790.5h2.5M1787.4 792.5h2.2M1787.7 794.5h2.3M1787.1 795.5h3.0M1786.1 814.5h4.0M1788.2 825.5h2.9M1788.4 826.5h2.5M1788.8 828.5h2.2M1787.8 832.5h2.4M1787.8 850.5h2.3M1788.2 857.5h3.5M1786.7 874.5h3.0M1786.6 879.5h3.5M1786.7 885.5h4.2" stroke="#2c50d8" stroke-width="1.2" fill="none"/><path d="M401.6 441.5h2.9M399.9 450.5h2.7M398.8 484.5h4.2M398.6 494.5h5.4M398.3 516.5h5.4M398.0 522.5h4.6M399.9 533.5h4.8M398.6 544.5h3.9M401.3 556.5h3.4M400.8 560.5h2.8M400.0 562.5h4.5M400.3 578.5h3.1M398.8 617.5h5.2M400.9 648.5h3.5M398.2 651.5h4.9M399.8 655.5h5.1M400.2 668.5h5.1M400.8 677.5h4.5M399.2 737.5h4.1M399.7 749.5h3.7M398.2 770.5h4.8M398.4 775.5h4.2M398.7 798.5h3.7M401.4 806.5h2.5M400.9 835.5h2.7M399.3 869.5h3.0M399.3 871.5h3.6M399.3 874.5h4.3M399.9 885.5h4.1" stroke="#ffffff" stroke-width="2.2" fill="none"/><path d="M400.9 483.5h2.8M398.2 487.5h5.0M397.4 490.5h5.1M399.4 510.5h3.6M399.6 512.5h5.1M398.6 514.5h5.3M400.3 526.5h2.7M401.4 618.5h2.7M398.3 619.5h5.2M398.8 631.5h4.2M398.4 637.5h3.1M399.6 673.5h4.2M400.8 700.5h3.6M399.3 702.5h5.6M400.3 725.5h5.3M400.9 748.5h4.1M399.4 762.5h2.7M399.3 764.5h3.6M398.2 769.5h3.9M398.3 783.5h4.6M400.4 820.5h3.1M399.4 821.5h3.2M399.5 858.5h4.3M399.8 861.5h5.7M399.8 866.5h5.3M399.1 868.5h3.9M398.3 870.5h4.5M398.8 875.5h4.3M399.7 882.5h2.7" stroke="#cfe6ff" stroke-width="2.2" fill="none"/><path d="M399.5 464.5h5.5M398.4 465.5h5.1M398.8 474.5h3.5M399.0 488.5h4.8M398.2 489.5h4.6M400.1 541.5h3.5M398.4 615.5h4.5M400.6 638.5h3.3M399.9 642.5h4.3M400.6 645.5h2.8M401.1 660.5h3.0M398.6 715.5h3.0M399.9 716.5h3.5M397.5 735.5h5.4M400.0 741.5h3.4M400.6 744.5h4.9M398.4 801.5h4.9M398.2 805.5h5.4M399.0 833.5h3.3M398.2 836.5h3.9M399.5 840.5h4.9M401.6 847.5h2.7M400.5 850.5h3.0M399.5 857.5h5.7M399.0 864.5h3.0" stroke="#8cc0ff" stroke-width="2.2" fill="none"/><path d="M398.6 462.5h5.0M400.7 470.5h4.0M400.1 497.5h4.0M399.5 511.5h4.0M397.2 538.5h5.5M398.9 572.5h4.4M399.5 587.5h2.5M399.4 598.5h5.1M401.4 611.5h3.2M398.9 616.5h4.9M400.7 641.5h4.5M397.4 667.5h5.8M400.1 727.5h5.6M397.3 753.5h5.4M400.5 784.5h3.2M400.4 810.5h4.7M399.7 812.5h3.6M401.2 855.5h3.4M398.2 862.5h3.4M399.0 865.5h3.0" stroke="#5c9cff" stroke-width="2.2" fill="none"/><path d="M388.3 441.5h7.2M389.8 468.5h7.7M398.5 493.5h6.0M390.2 496.5h6.3M392.0 536.5h7.6M391.5 550.5h9.6M389.9 608.5h8.3M394.5 633.5h6.7M393.4 665.5h6.3M390.4 702.5h7.6M389.4 709.5h9.9M396.6 725.5h6.8M398.5 728.5h8.1M394.5 776.5h8.6M388.5 792.5h10.8M389.5 816.5h8.1M387.7 822.5h12.2M393.0 858.5h9.4" stroke="#3d6cf0" stroke-width="1.2" fill="none"/><path d="M388.5 456.5h12.0M400.0 517.5h5.6M397.7 525.5h9.2M385.9 547.5h12.5M394.9 562.5h8.2M394.5 571.5h11.1M397.6 572.5h9.0M393.5 607.5h9.3M390.3 629.5h12.0M390.3 676.5h5.4M390.2 693.5h5.6M393.1 721.5h5.9M395.8 830.5h6.0M391.8 842.5h10.9" stroke="#5c9cff" stroke-width="1.2" fill="none"/><path d="M387.4 458.5h9.4M386.6 482.5h11.3M396.5 501.5h11.9M386.6 506.5h11.3M396.6 531.5h10.9M394.5 538.5h12.1M392.4 551.5h6.7M396.0 554.5h11.4M393.8 569.5h6.2M390.0 599.5h10.0M391.8 672.5h6.5M396.5 679.5h5.7M389.0 698.5h11.7M387.7 741.5h8.0M387.0 791.5h8.5" stroke="#2c50d8" stroke-width="1.2" fill="none"/><path d="M399.9 457.5h6.2M406.0 520.5h13.7M395.2 522.5h13.2M396.1 581.5h8.4M396.6 591.5h12.2M393.5 631.5h13.8M394.8 641.5h13.5M402.2 657.5h9.8M406.0 670.5h6.1M400.4 683.5h13.6M410.7 689.5h9.7M398.8 695.5h8.6M411.6 753.5h6.4M393.7 757.5h13.0M396.5 762.5h11.0M406.2 795.5h7.2M411.6 813.5h6.3M398.0 829.5h6.1M402.6 839.5h10.1M408.4 856.5h7.9M405.5 872.5h8.4M400.1 881.5h13.7" stroke="#3d6cf0" stroke-width="1.2" fill="none"/><path d="M398.1 447.5h8.3M396.2 524.5h10.2M405.4 528.5h11.8M401.1 556.5h13.3M398.0 557.5h13.0M402.7 561.5h12.8M402.4 575.5h13.7M401.3 577.5h12.5M400.4 586.5h7.3M405.5 697.5h11.2M401.5 742.5h6.0M405.9 768.5h8.6M405.2 776.5h11.5M402.6 846.5h6.1M401.7 863.5h11.5M406.2 884.5h9.7" stroke="#2c50d8" stroke-width="1.2" fill="none"/><path d="M346.5 453.5h3.5M347.4 478.5h2.1M347.3 479.5h3.2M347.1 490.5h3.0M346.5 500.5h3.3M346.9 505.5h3.1M347.0 514.5h2.9M346.7 535.5h2.9M348.2 537.5h1.8M349.1 555.5h1.7M348.3 559.5h2.5M348.8 560.5h2.2M348.4 582.5h1.6M348.2 604.5h3.0M348.3 612.5h1.8M348.2 624.5h2.5M347.1 639.5h2.0M347.8 658.5h1.8M348.4 660.5h2.1M348.8 666.5h1.6M348.1 669.5h2.0M347.9 680.5h3.0M347.8 701.5h3.0M348.1 702.5h2.0M348.1 708.5h2.2M346.9 709.5h3.4M346.9 713.5h2.6M348.9 723.5h1.8M347.7 725.5h2.3M347.5 730.5h1.7M348.1 732.5h2.9M347.9 735.5h2.3M348.1 745.5h2.1M348.3 748.5h2.7M348.1 757.5h2.4M347.0 759.5h2.7M348.2 760.5h1.9M347.7 810.5h2.0M346.6 815.5h3.2M346.7 818.5h2.8M348.5 869.5h2.6M347.6 874.5h2.2M347.3 882.5h2.1" stroke="#2c50d8" stroke-width="1.2" fill="none"/><path d="M348.2 451.5h1.8M348.7 483.5h2.3M347.6 515.5h2.5M348.3 517.5h2.6M346.9 534.5h3.3M348.0 558.5h3.4M347.4 570.5h3.1M346.9 575.5h3.1M349.1 578.5h1.6M348.0 625.5h2.3M348.1 638.5h2.5M347.3 662.5h1.8M348.1 670.5h1.5M348.3 715.5h3.3M347.2 738.5h2.8M347.1 752.5h3.4M347.6 772.5h3.1M348.2 779.5h2.9M348.2 780.5h1.7M348.5 814.5h2.7M347.4 846.5h2.7M347.1 859.5h1.9M347.5 883.5h2.4" stroke="#3d6cf0" stroke-width="1.2" fill="none"/><path d="M1617.6 742.5h7.8M1600.5 729.5h5.5M1739.7 799.5h5.6M1724.1 634.5h7.7M1775.4 643.5h3.3M1608.1 670.5h3.5M1699.8 821.5h5.6M1709.2 842.5h5.8M1659.6 799.5h7.5M1610.8 655.5h7.8M1779.6 779.5h7.3M1672.2 608.5h7.3M1755.8 563.5h8.7M1786.6 508.5h7.2M1680.1 654.5h5.9M1773.7 719.5h7.7M1698.5 517.5h5.2M1779.0 538.5h3.6M1637.9 663.5h3.7M1724.1 692.5h3.3M1812.7 563.5h6.2M1788.7 766.5h6.3M1641.4 511.5h5.8M1740.0 728.5h4.9M1629.5 607.5h7.0M1738.7 784.5h3.4M1771.9 871.5h4.4M1701.2 522.5h5.7M1658.2 538.5h4.6M1752.7 711.5h7.7M1658.4 765.5h6.5M1728.0 605.5h4.0M1601.5 450.5h6.5M1774.4 667.5h4.2M1613.2 807.5h7.5M1643.7 452.5h3.7M1810.3 688.5h6.4M1796.4 789.5h5.8M1646.1 597.5h8.9M1745.7 504.5h4.6M1722.6 685.5h4.5M1750.8 737.5h3.5M1805.4 473.5h5.0M1816.9 522.5h4.7M1683.6 547.5h6.6M1778.2 873.5h3.1M1802.2 642.5h5.1M1600.8 553.5h3.4M1621.2 627.5h4.3M1721.2 787.5h6.5M1795.4 822.5h7.2M1654.1 710.5h3.4M1609.1 506.5h5.4M1629.6 514.5h7.2M1616.2 550.5h3.3M1789.8 704.5h8.5M1737.8 820.5h6.0M1630.7 598.5h8.2M1734.6 763.5h3.1M1675.4 857.5h6.4M1657.6 727.5h4.4M1666.0 513.5h3.7M1789.4 551.5h6.2M1636.2 883.5h6.0M1746.7 802.5h4.4M1658.5 878.5h6.5M1798.5 488.5h8.8M1771.2 695.5h3.6M1692.5 586.5h9.0M1782.8 750.5h6.9M1720.4 831.5h5.5M1784.9 822.5h4.9M1729.6 508.5h7.1M1712.7 493.5h8.2M1796.5 475.5h3.6M1668.9 799.5h3.6M1664.3 817.5h4.2M1744.3 668.5h8.0M1659.0 460.5h6.1M1660.6 850.5h4.5M1617.9 659.5h4.8M1618.3 536.5h8.9M1753.7 778.5h7.7M1787.9 845.5h3.1M1650.9 519.5h8.9M1603.8 854.5h5.1M1717.9 653.5h4.0M1710.8 631.5h7.5M1701.4 520.5h7.8M1639.6 859.5h9.0M1747.8 588.5h8.6M1686.2 793.5h3.1M1600.3 462.5h6.6M1800.2 705.5h8.8M1616.5 653.5h7.1M1683.5 629.5h7.2M1741.9 563.5h6.2M1692.7 542.5h5.1M1705.0 526.5h5.4M1813.2 650.5h6.5M1610.5 695.5h3.5M1791.0 501.5h5.4M1738.6 620.5h4.2M1696.6 751.5h8.8M1753.5 877.5h8.1M1638.7 856.5h7.9M1772.9 548.5h5.0M1609.2 661.5h5.3M1677.9 480.5h8.0M1632.8 638.5h7.0M1701.4 484.5h8.9M1711.5 580.5h6.6M1792.3 692.5h8.8M1646.1 569.5h6.8M1672.2 819.5h3.5M1640.3 685.5h3.4M1610.8 683.5h3.3M1656.9 704.5h8.6M1669.1 487.5h6.2M1713.8 681.5h7.6M1816.3 478.5h7.2M1785.3 701.5h4.6M1799.0 848.5h8.2M1793.1 851.5h7.7M1730.8 807.5h5.0M1802.1 660.5h5.9M1645.4 567.5h6.1M1711.1 543.5h3.4M1782.3 465.5h7.2M1725.7 634.5h8.1M1600.8 518.5h6.2M1705.3 807.5h7.4M1700.6 629.5h4.4M1608.0 691.5h5.8M1803.2 863.5h6.6M1671.2 810.5h8.4M1651.4 797.5h8.4M1603.0 850.5h3.9M1701.6 772.5h4.2M1700.4 760.5h3.7M1714.9 654.5h8.3M1767.6 797.5h4.8M1768.4 650.5h8.3M1602.4 736.5h7.3M1621.7 535.5h3.8M1776.8 822.5h4.3M1716.4 801.5h8.7M1639.8 462.5h6.3M1673.3 509.5h4.0M1745.3 682.5h3.8" stroke="#3f74f5" stroke-width="1.200" opacity=".7"/><path d="M446.8 827.5h7.5M361.2 862.5h6.5M314.8 579.5h6.6M519.3 518.5h7.0M471.4 445.5h10.0M502.3 745.5h5.5M329.1 510.5h4.4M454.0 778.5h5.1M471.8 536.5h6.0M465.4 868.5h3.7M512.5 699.5h7.3M340.2 586.5h6.7M524.0 797.5h6.7M308.2 711.5h5.9M431.6 723.5h7.5M483.3 774.5h8.2M470.4 593.5h9.5M305.7 870.5h4.4M435.1 745.5h8.5M448.8 778.5h6.2M495.1 797.5h4.7M340.7 731.5h5.5M341.1 881.5h7.2M417.2 761.5h7.1M432.7 781.5h8.3M334.8 777.5h8.0M518.7 547.5h7.6M372.5 582.5h7.2M345.9 479.5h4.6M325.5 841.5h3.8M457.3 446.5h7.2M370.6 611.5h5.9M404.7 876.5h3.3M465.5 633.5h3.6M340.3 596.5h5.3M511.1 516.5h6.9M516.2 583.5h6.7M433.1 487.5h4.7M376.4 591.5h7.7M527.0 739.5h8.3M459.0 852.5h6.6M356.9 657.5h8.9M323.3 652.5h8.8M459.3 510.5h7.9M404.3 498.5h3.6M534.8 715.5h9.2M398.3 594.5h4.2M480.0 615.5h3.3M483.7 619.5h4.7M332.9 711.5h6.1M515.7 687.5h3.6M463.4 652.5h8.7M509.8 580.5h3.2M397.8 801.5h6.8M411.6 570.5h6.4M439.2 463.5h9.3M306.1 764.5h7.3M452.8 632.5h5.4M373.1 820.5h9.3M380.6 877.5h6.7M304.9 509.5h7.5M518.4 860.5h3.0M424.2 641.5h7.6M454.6 629.5h8.4M411.2 779.5h4.9M312.1 556.5h5.1M315.3 681.5h8.6M323.8 601.5h3.5M505.8 603.5h6.0M319.5 456.5h5.7M1239.4 463.5h3.8M1512.0 477.5h5.4M1298.8 782.5h4.4M1105.8 519.5h3.1M1241.9 556.5h3.7M1433.5 662.5h8.4M1127.4 481.5h9.3M1568.3 723.5h5.9M1539.9 873.5h5.6M1511.3 829.5h9.1M1364.4 493.5h8.6M1553.0 613.5h8.4M1323.7 843.5h3.2M1226.6 496.5h5.4M1320.1 499.5h3.3M1063.2 749.5h7.2M1373.8 596.5h7.5M1454.2 636.5h6.2M1175.0 743.5h6.5M1289.5 552.5h9.1M1402.8 563.5h4.1M1292.1 744.5h5.4M1267.1 757.5h4.7M1093.6 771.5h6.2M1230.5 793.5h9.6M1132.0 651.5h7.1M1215.1 631.5h3.7M1301.6 502.5h7.0M1291.1 633.5h7.0M1541.9 585.5h5.1M1522.7 467.5h8.9M1151.4 590.5h9.7M1074.9 482.5h5.7M1387.5 845.5h5.8M1094.7 844.5h4.4M1334.0 883.5h8.8M1305.1 589.5h5.0M1324.3 799.5h8.2M1449.2 662.5h6.8M1514.4 714.5h8.4" stroke="#2f5ce0" stroke-width="1.200" opacity=".7"/><rect x="852.200" y="441" width="28.600" height="445" fill="#8890b0" fill-opacity=".28"/><path d="M866.500 441V886M1730.500 441V886" stroke="#e01010" stroke-width="1.200"/><text x="1745" y="766" fill="#fff" font-size="15.800">27 385kHz</text><rect x="1828" y="441" width="29" height="445" fill="#000"/><rect x="1837" y="452" width="10" height="419" fill="url(#cb)"/></svg>
<div class="blk" style="left:259px;top:890px;width:795px;height:150px"></div><svg class="a" style="left:259px;top:890px" width="795" height="150" viewBox="259 890 795 150" font-family="Liberation Sans,sans-serif"><defs><linearGradient id="ig" gradientUnits="userSpaceOnUse" x1="0" y1="920" x2="0" y2="1011"><stop offset="0" stop-color="#9fd0ff"/><stop offset=".62" stop-color="#3f7bc0"/><stop offset=".72" stop-color="#2f62a6"/><stop offset=".82" stop-color="#1f4282"/><stop offset=".92" stop-color="#0e1c58"/><stop offset="1" stop-color="#04042f"/></linearGradient></defs><path d="M287 920.5H1025" stroke="#808080" stroke-dasharray="3 1" opacity=".85"/><path d="M287 929.5H1025" stroke="#808080" stroke-dasharray="3 1" opacity=".85"/><path d="M287 938.5H1025" stroke="#808080" stroke-dasharray="3 1" opacity=".85"/><path d="M287 947.5H1025" stroke="#808080" stroke-dasharray="3 1" opacity=".85"/><path d="M287 956.5H1025" stroke="#808080" stroke-dasharray="3 1" opacity=".85"/><path d="M287 965.5H1025" stroke="#808080" stroke-dasharray="3 1" opacity=".85"/><path d="M287 974.5H1025" stroke="#808080" stroke-dasharray="3 1" opacity=".85"/><path d="M287 983.5H1025" stroke="#808080" stroke-dasharray="3 1" opacity=".85"/><path d="M287 992.5H1025" stroke="#808080" stroke-dasharray="3 1" opacity=".85"/><path d="M287 1001.5H1025" stroke="#808080" stroke-dasharray="3 1" opacity=".85"/><path d="M344.5 920V1010" stroke="#666"/><path d="M448.5 920V1010" stroke="#666"/><path d="M552.5 920V1010" stroke="#666"/><path d="M656.5 920V1010" stroke="#666"/><path d="M760.5 920V1010" stroke="#666"/><path d="M864.5 920V1010" stroke="#666"/><path d="M968.5 920V1010" stroke="#666"/><path d="M403.5 1010.5 L405.5 1001.0 L407.5 993.5 L409.5 989.5 L411.5 984.0 L413.0 982.7 L414.6 984.0 L416.1 981.6 L417.7 979.5 L419.2 982.3 L420.8 982.3 L422.3 984.7 L423.9 982.8 L425.4 982.6 L427.0 983.4 L428.5 983.8 L430.1 982.6 L431.6 983.2 L433.2 981.5 L434.7 982.2 L436.3 982.1 L437.8 981.1 L439.4 980.9 L440.9 980.8 L442.5 982.3 L444.0 982.4 L445.6 982.2 L447.1 982.7 L448.7 981.1 L450.2 982.5 L451.8 982.9 L453.3 983.4 L454.9 981.7 L456.4 982.2 L458.0 980.4 L459.5 982.0 L461.1 980.2 L462.6 981.0 L464.2 983.8 L465.7 980.2 L467.3 983.5 L468.8 983.0 L470.4 982.3 L471.9 983.1 L473.5 983.2 L475.0 983.7 L476.6 982.3 L478.1 981.9 L479.7 981.9 L481.2 981.5 L482.8 982.6 L484.3 981.7 L485.9 983.8 L487.4 980.5 L489.0 981.4 L490.5 981.6 L492.1 980.3 L493.6 984.7 L495.2 980.0 L496.7 982.3 L498.3 982.0 L499.8 984.4 L501.4 980.4 L502.9 983.8 L504.5 981.8 L506.0 982.4 L507.6 981.9 L509.1 983.3 L510.7 981.3 L512.2 982.5 L513.8 983.0 L515.3 984.6 L516.9 980.0 L518.4 984.3 L520.0 983.6 L521.5 982.1 L523.1 982.9 L524.6 982.1 L526.2 984.4 L527.7 982.8 L529.3 982.4 L530.8 982.3 L532.4 982.4 L533.9 982.4 L535.5 981.6 L537.0 984.9 L538.5 980.5 L540.1 978.6 L541.6 982.5 L543.2 982.4 L544.7 983.0 L546.3 982.4 L547.8 982.4 L549.4 983.0 L550.9 983.7 L552.5 982.1 L554.0 982.2 L555.6 984.7 L557.1 983.2 L558.7 981.5 L560.2 985.2 L561.8 983.5 L563.3 982.0 L564.9 981.3 L566.4 982.9 L568.0 981.7 L569.5 981.4 L571.1 981.2 L572.6 982.0 L574.2 983.8 L575.0 979.0 L575.7 982.1 L577.3 981.0 L578.8 983.3 L580.4 982.7 L581.9 983.5 L583.5 983.9 L585.0 982.4 L586.6 982.4 L588.1 982.5 L589.7 981.4 L591.2 983.3 L592.8 984.1 L594.3 982.8 L595.9 982.3 L597.4 982.3 L599.0 981.7 L600.5 981.7 L602.1 982.2 L603.6 981.7 L605.2 982.1 L606.7 980.9 L608.3 983.0 L609.8 982.7 L611.4 981.3 L612.9 980.1 L614.5 982.6 L616.0 983.8 L617.6 981.8 L619.1 982.1 L620.7 982.0 L622.2 983.3 L623.8 981.6 L625.3 983.7 L626.9 982.3 L628.4 983.6 L630.0 982.6 L631.5 982.3 L633.1 981.0 L634.6 981.8 L636.2 982.3 L637.7 983.3 L639.3 982.9 L640.8 981.8 L642.0 980.0 L642.4 983.1 L643.9 983.7 L645.5 982.4 L647.0 982.1 L648.6 982.2 L650.1 983.5 L651.7 983.2 L653.2 981.6 L654.8 983.0 L656.3 982.1 L657.9 981.8 L659.4 984.0 L661.0 983.5 L662.5 981.8 L664.1 982.7 L665.6 983.2 L667.2 981.9 L668.7 982.5 L670.3 983.3 L671.8 980.6 L673.4 983.0 L674.9 983.4 L676.5 983.2 L678.0 981.1 L679.6 983.0 L681.1 981.7 L682.7 983.2 L684.2 983.3 L685.8 982.8 L687.3 981.8 L688.9 981.9 L690.4 983.5 L692.0 981.6 L693.5 983.1 L695.1 983.2 L696.6 982.3 L698.2 985.2 L699.7 982.7 L701.3 985.0 L702.8 980.4 L704.4 980.1 L705.9 983.7 L707.5 983.3 L709.0 982.3 L710.6 982.5 L712.1 980.5 L713.7 981.9 L715.2 981.5 L716.8 982.4 L718.3 983.6 L719.9 982.7 L721.4 983.0 L723.0 981.8 L724.5 982.1 L726.1 982.7 L727.6 982.3 L729.2 984.0 L730.7 981.6 L732.3 984.7 L733.8 981.5 L735.4 983.8 L736.9 981.7 L738.5 984.4 L740.0 982.8 L741.6 983.0 L743.1 983.4 L744.7 981.9 L746.2 981.5 L747.8 980.4 L749.3 983.9 L750.9 981.8 L752.4 981.9 L754.0 982.6 L755.5 984.8 L757.1 980.7 L758.6 982.9 L760.0 979.5 L760.2 982.2 L761.7 983.2 L763.3 980.6 L764.8 982.2 L766.4 983.5 L767.9 984.3 L769.5 984.4 L771.0 981.7 L772.6 982.7 L774.1 982.5 L775.7 981.1 L777.2 981.0 L778.0 977.5 L778.8 983.4 L780.3 982.9 L781.9 982.4 L783.4 983.9 L785.0 981.5 L786.5 983.2 L788.1 982.6 L789.6 982.5 L791.2 983.1 L792.7 982.8 L794.3 982.9 L795.8 982.9 L797.4 984.7 L798.9 982.3 L800.5 983.7 L802.0 983.3 L803.6 982.2 L805.1 983.5 L806.7 981.7 L808.2 983.9 L809.8 981.7 L811.3 982.1 L812.9 983.0 L814.4 983.5 L816.0 983.6 L817.5 983.6 L819.1 982.4 L820.6 981.5 L822.2 983.2 L823.7 982.9 L825.3 981.6 L826.8 983.7 L828.4 982.8 L829.9 981.5 L831.5 983.1 L833.0 981.1 L834.6 981.6 L836.1 983.0 L837.7 980.9 L839.2 982.6 L840.8 981.1 L842.3 983.4 L843.9 981.8 L845.4 982.8 L847.0 980.9 L848.5 982.2 L850.1 983.6 L851.6 983.1 L853.2 980.6 L854.7 983.6 L856.3 983.6 L857.8 982.2 L859.4 984.2 L860.9 981.4 L862.5 982.5 L864.0 983.8 L865.6 984.0 L867.1 984.0 L868.7 981.4 L870.2 980.6 L871.8 983.0 L873.3 981.0 L874.9 982.5 L876.4 981.2 L878.0 983.8 L879.5 983.5 L881.1 983.2 L882.6 982.6 L884.2 982.7 L885.7 982.3 L887.3 983.0 L888.8 982.9 L890.4 983.1 L891.9 982.1 L893.5 984.7 L895.0 982.9 L896.6 984.1 L898.1 984.1 L899.7 981.6 L902.0 985.0 L903.0 988.0 L904.5 994.0 L906.0 1002.0 L907.5 1010.5 Z" fill="url(#ig)" fill-opacity=".86"/><rect x="410" y="890" width="492" height="150" fill="#fff" fill-opacity=".215"/><path d="M403.5 1010.5 L405.5 1001.0 L407.5 993.5 L409.5 989.5 L411.5 984.0 L413.0 982.7 L414.6 984.0 L416.1 981.6 L417.7 979.5 L419.2 982.3 L420.8 982.3 L422.3 984.7 L423.9 982.8 L425.4 982.6 L427.0 983.4 L428.5 983.8 L430.1 982.6 L431.6 983.2 L433.2 981.5 L434.7 982.2 L436.3 982.1 L437.8 981.1 L439.4 980.9 L440.9 980.8 L442.5 982.3 L444.0 982.4 L445.6 982.2 L447.1 982.7 L448.7 981.1 L450.2 982.5 L451.8 982.9 L453.3 983.4 L454.9 981.7 L456.4 982.2 L458.0 980.4 L459.5 982.0 L461.1 980.2 L462.6 981.0 L464.2 983.8 L465.7 980.2 L467.3 983.5 L468.8 983.0 L470.4 982.3 L471.9 983.1 L473.5 983.2 L475.0 983.7 L476.6 982.3 L478.1 981.9 L479.7 981.9 L481.2 981.5 L482.8 982.6 L484.3 981.7 L485.9 983.8 L487.4 980.5 L489.0 981.4 L490.5 981.6 L492.1 980.3 L493.6 984.7 L495.2 980.0 L496.7 982.3 L498.3 982.0 L499.8 984.4 L501.4 980.4 L502.9 983.8 L504.5 981.8 L506.0 982.4 L507.6 981.9 L509.1 983.3 L510.7 981.3 L512.2 982.5 L513.8 983.0 L515.3 984.6 L516.9 980.0 L518.4 984.3 L520.0 983.6 L521.5 982.1 L523.1 982.9 L524.6 982.1 L526.2 984.4 L527.7 982.8 L529.3 982.4 L530.8 982.3 L532.4 982.4 L533.9 982.4 L535.5 981.6 L537.0 984.9 L538.5 980.5 L540.1 978.6 L541.6 982.5 L543.2 982.4 L544.7 983.0 L546.3 982.4 L547.8 982.4 L549.4 983.0 L550.9 983.7 L552.5 982.1 L554.0 982.2 L555.6 984.7 L557.1 983.2 L558.7 981.5 L560.2 985.2 L561.8 983.5 L563.3 982.0 L564.9 981.3 L566.4 982.9 L568.0 981.7 L569.5 981.4 L571.1 981.2 L572.6 982.0 L574.2 983.8 L575.0 979.0 L575.7 982.1 L577.3 981.0 L578.8 983.3 L580.4 982.7 L581.9 983.5 L583.5 983.9 L585.0 982.4 L586.6 982.4 L588.1 982.5 L589.7 981.4 L591.2 983.3 L592.8 984.1 L594.3 982.8 L595.9 982.3 L597.4 982.3 L599.0 981.7 L600.5 981.7 L602.1 982.2 L603.6 981.7 L605.2 982.1 L606.7 980.9 L608.3 983.0 L609.8 982.7 L611.4 981.3 L612.9 980.1 L614.5 982.6 L616.0 983.8 L617.6 981.8 L619.1 982.1 L620.7 982.0 L622.2 983.3 L623.8 981.6 L625.3 983.7 L626.9 982.3 L628.4 983.6 L630.0 982.6 L631.5 982.3 L633.1 981.0 L634.6 981.8 L636.2 982.3 L637.7 983.3 L639.3 982.9 L640.8 981.8 L642.0 980.0 L642.4 983.1 L643.9 983.7 L645.5 982.4 L647.0 982.1 L648.6 982.2 L650.1 983.5 L651.7 983.2 L653.2 981.6 L654.8 983.0 L656.3 982.1 L657.9 981.8 L659.4 984.0 L661.0 983.5 L662.5 981.8 L664.1 982.7 L665.6 983.2 L667.2 981.9 L668.7 982.5 L670.3 983.3 L671.8 980.6 L673.4 983.0 L674.9 983.4 L676.5 983.2 L678.0 981.1 L679.6 983.0 L681.1 981.7 L682.7 983.2 L684.2 983.3 L685.8 982.8 L687.3 981.8 L688.9 981.9 L690.4 983.5 L692.0 981.6 L693.5 983.1 L695.1 983.2 L696.6 982.3 L698.2 985.2 L699.7 982.7 L701.3 985.0 L702.8 980.4 L704.4 980.1 L705.9 983.7 L707.5 983.3 L709.0 982.3 L710.6 982.5 L712.1 980.5 L713.7 981.9 L715.2 981.5 L716.8 982.4 L718.3 983.6 L719.9 982.7 L721.4 983.0 L723.0 981.8 L724.5 982.1 L726.1 982.7 L727.6 982.3 L729.2 984.0 L730.7 981.6 L732.3 984.7 L733.8 981.5 L735.4 983.8 L736.9 981.7 L738.5 984.4 L740.0 982.8 L741.6 983.0 L743.1 983.4 L744.7 981.9 L746.2 981.5 L747.8 980.4 L749.3 983.9 L750.9 981.8 L752.4 981.9 L754.0 982.6 L755.5 984.8 L757.1 980.7 L758.6 982.9 L760.0 979.5 L760.2 982.2 L761.7 983.2 L763.3 980.6 L764.8 982.2 L766.4 983.5 L767.9 984.3 L769.5 984.4 L771.0 981.7 L772.6 982.7 L774.1 982.5 L775.7 981.1 L777.2 981.0 L778.0 977.5 L778.8 983.4 L780.3 982.9 L781.9 982.4 L783.4 983.9 L785.0 981.5 L786.5 983.2 L788.1 982.6 L789.6 982.5 L791.2 983.1 L792.7 982.8 L794.3 982.9 L795.8 982.9 L797.4 984.7 L798.9 982.3 L800.5 983.7 L802.0 983.3 L803.6 982.2 L805.1 983.5 L806.7 981.7 L808.2 983.9 L809.8 981.7 L811.3 982.1 L812.9 983.0 L814.4 983.5 L816.0 983.6 L817.5 983.6 L819.1 982.4 L820.6 981.5 L822.2 983.2 L823.7 982.9 L825.3 981.6 L826.8 983.7 L828.4 982.8 L829.9 981.5 L831.5 983.1 L833.0 981.1 L834.6 981.6 L836.1 983.0 L837.7 980.9 L839.2 982.6 L840.8 981.1 L842.3 983.4 L843.9 981.8 L845.4 982.8 L847.0 980.9 L848.5 982.2 L850.1 983.6 L851.6 983.1 L853.2 980.6 L854.7 983.6 L856.3 983.6 L857.8 982.2 L859.4 984.2 L860.9 981.4 L862.5 982.5 L864.0 983.8 L865.6 984.0 L867.1 984.0 L868.7 981.4 L870.2 980.6 L871.8 983.0 L873.3 981.0 L874.9 982.5 L876.4 981.2 L878.0 983.8 L879.5 983.5 L881.1 983.2 L882.6 982.6 L884.2 982.7 L885.7 982.3 L887.3 983.0 L888.8 982.9 L890.4 983.1 L891.9 982.1 L893.5 984.7 L895.0 982.9 L896.6 984.1 L898.1 984.1 L899.7 981.6 L902.0 985.0 L903.0 988.0 L904.5 994.0 L906.0 1002.0 L907.5 1010.5" fill="none" stroke="#fff" stroke-width="1.100" stroke-linejoin="round"/><path d="M286.500 920V1010.500H1025" fill="none" stroke="#bdbdbd"/><path d="M655.500 890V1040" stroke="#e01010" stroke-width="1.300"/><text x="288.500" y="909" fill="#fff" font-family="Liberation Mono,monospace" font-size="12.400">IF Spectrum</text><g fill="#fff" font-size="11.500" text-anchor="end"><text x="284" y="923.7">0</text><text x="284" y="932.7">-10</text><text x="284" y="941.7">-20</text><text x="284" y="950.7">-30</text><text x="284" y="959.7">-40</text><text x="284" y="968.7">-50</text><text x="284" y="977.7">-60</text><text x="284" y="986.7">-70</text><text x="284" y="995.7">-80</text><text x="284" y="1004.7">-90</text><text x="284" y="1013.7">-100</text></g><g fill="#e4e4e4" font-size="11" text-anchor="middle"><text x="344.0" y="1029">27 104k</text><text x="448.0" y="1029">27 106k</text><text x="552.0" y="1029">27 108k</text><text x="656.0" y="1029">27 110k</text><text x="760.0" y="1029">27 112k</text><text x="864.0" y="1029">27 114k</text><text x="968.0" y="1029">27 116k</text></g></svg>
<div class="blk" style="left:1058px;top:890px;width:799px;height:150px"></div><svg class="a" style="left:1058px;top:890px" width="799" height="150" viewBox="1058 890 799 150" font-family="Liberation Sans,sans-serif"><path d="M1089 920.5H1828" stroke="#808080" stroke-dasharray="3 1" opacity=".85"/><path d="M1089 930.5H1828" stroke="#808080" stroke-dasharray="3 1" opacity=".85"/><path d="M1089 940.5H1828" stroke="#808080" stroke-dasharray="3 1" opacity=".85"/><path d="M1089 950.5H1828" stroke="#808080" stroke-dasharray="3 1" opacity=".85"/><path d="M1089 960.5H1828" stroke="#808080" stroke-dasharray="3 1" opacity=".85"/><path d="M1089 970.5H1828" stroke="#808080" stroke-dasharray="3 1" opacity=".85"/><path d="M1089 980.5H1828" stroke="#808080" stroke-dasharray="3 1" opacity=".85"/><path d="M1089 990.5H1828" stroke="#808080" stroke-dasharray="3 1" opacity=".85"/><path d="M1089 1000.5H1828" stroke="#808080" stroke-dasharray="3 1" opacity=".85"/><path d="M1319.5 920V1010" stroke="#666"/><path d="M1550.5 920V1010" stroke="#666"/><path d="M1781.5 920V1010" stroke="#666"/><path d="M1088.500 920V1010.500H1828" fill="none" stroke="#bdbdbd"/><text x="1089.500" y="909" fill="#fff" font-family="Liberation Mono,monospace" font-size="12.400">Audio Spectrum</text><g fill="#fff" font-size="11.500" text-anchor="end"><text x="1086" y="923.7">0</text><text x="1086" y="933.7">-10</text><text x="1086" y="943.7">-20</text><text x="1086" y="953.7">-30</text><text x="1086" y="963.7">-40</text><text x="1086" y="973.7">-50</text><text x="1086" y="983.7">-60</text><text x="1086" y="993.7">-70</text><text x="1086" y="1003.7">-80</text><text x="1086" y="1013.7">-90</text></g><g fill="#e4e4e4" font-size="11" text-anchor="middle"><text x="1087.5" y="1029">DC</text><text x="1319.0" y="1029">5k</text><text x="1550.0" y="1029">10k</text><text x="1781.0" y="1029">15k</text></g></svg>
<div class="t" style="left:1857px;width:54px;text-align:center;transform-origin:50% 0;top:85px;font-size:12px">Zoom</div><div class="vs" style="left:1879px;top:111px;height:197px"></div><div class="tk" style="left:1866px;top:116px"></div><div class="tk" style="left:1894px;top:116px"></div><div class="tk" style="left:1866px;top:135px"></div><div class="tk" style="left:1894px;top:135px"></div><div class="tk" style="left:1866px;top:154px"></div><div class="tk" style="left:1894px;top:154px"></div><div class="tk" style="left:1866px;top:172px"></div><div class="tk" style="left:1894px;top:172px"></div><div class="tk" style="left:1866px;top:191px"></div><div class="tk" style="left:1894px;top:191px"></div><div class="tk" style="left:1866px;top:210px"></div><div class="tk" style="left:1894px;top:210px"></div><div class="tk" style="left:1866px;top:229px"></div><div class="tk" style="left:1894px;top:229px"></div><div class="tk" style="left:1866px;top:248px"></div><div class="tk" style="left:1894px;top:248px"></div><div class="tk" style="left:1866px;top:266px"></div><div class="tk" style="left:1894px;top:266px"></div><div class="tk" style="left:1866px;top:285px"></div><div class="tk" style="left:1894px;top:285px"></div><div class="tk" style="left:1866px;top:304px"></div><div class="tk" style="left:1894px;top:304px"></div><div class="vt" style="left:1871px;top:284px"></div><div class="t" style="left:1857px;width:54px;text-align:center;transform-origin:50% 0;top:323px;font-size:12px">Contrast</div><div class="vs" style="left:1879px;top:349px;height:198px"></div><div class="tk" style="left:1866px;top:354px"></div><div class="tk" style="left:1894px;top:354px"></div><div class="tk" style="left:1866px;top:378px"></div><div class="tk" style="left:1894px;top:378px"></div><div class="tk" style="left:1866px;top:402px"></div><div class="tk" style="left:1894px;top:402px"></div><div class="tk" style="left:1866px;top:425px"></div><div class="tk" style="left:1894px;top:425px"></div><div class="tk" style="left:1866px;top:448px"></div><div class="tk" style="left:1894px;top:448px"></div><div class="tk" style="left:1866px;top:472px"></div><div class="tk" style="left:1894px;top:472px"></div><div class="tk" style="left:1866px;top:496px"></div><div class="tk" style="left:1894px;top:496px"></div><div class="tk" style="left:1866px;top:519px"></div><div class="tk" style="left:1894px;top:519px"></div><div class="tk" style="left:1866px;top:542px"></div><div class="tk" style="left:1894px;top:542px"></div><div class="vt" style="left:1871px;top:482px"></div><div class="t" style="left:1857px;width:54px;text-align:center;transform-origin:50% 0;top:561px;font-size:12px">Range</div><div class="vs" style="left:1879px;top:587px;height:198px"></div><div class="tk" style="left:1866px;top:592px"></div><div class="tk" style="left:1894px;top:592px"></div><div class="tk" style="left:1866px;top:606px"></div><div class="tk" style="left:1894px;top:606px"></div><div class="tk" style="left:1866px;top:619px"></div><div class="tk" style="left:1894px;top:619px"></div><div class="tk" style="left:1866px;top:633px"></div><div class="tk" style="left:1894px;top:633px"></div><div class="tk" style="left:1866px;top:646px"></div><div class="tk" style="left:1894px;top:646px"></div><div class="tk" style="left:1866px;top:659px"></div><div class="tk" style="left:1894px;top:659px"></div><div class="tk" style="left:1866px;top:673px"></div><div class="tk" style="left:1894px;top:673px"></div><div class="tk" style="left:1866px;top:686px"></div><div class="tk" style="left:1894px;top:686px"></div><div class="tk" style="left:1866px;top:700px"></div><div class="tk" style="left:1894px;top:700px"></div><div class="tk" style="left:1866px;top:713px"></div><div class="tk" style="left:1894px;top:713px"></div><div class="tk" style="left:1866px;top:726px"></div><div class="tk" style="left:1894px;top:726px"></div><div class="tk" style="left:1866px;top:740px"></div><div class="tk" style="left:1894px;top:740px"></div><div class="tk" style="left:1866px;top:753px"></div><div class="tk" style="left:1894px;top:753px"></div><div class="tk" style="left:1866px;top:767px"></div><div class="tk" style="left:1894px;top:767px"></div><div class="tk" style="left:1866px;top:780px"></div><div class="tk" style="left:1894px;top:780px"></div><div class="vt" style="left:1871px;top:681px"></div><div class="t" style="left:1857px;width:54px;text-align:center;transform-origin:50% 0;top:800px;font-size:12px">Offset</div><div class="vs" style="left:1879px;top:827px;height:200px"></div><div class="tk" style="left:1866px;top:833px"></div><div class="tk" style="left:1894px;top:833px"></div><div class="tk" style="left:1866px;top:846px"></div><div class="tk" style="left:1894px;top:846px"></div><div class="tk" style="left:1866px;top:858px"></div><div class="tk" style="left:1894px;top:858px"></div><div class="tk" style="left:1866px;top:871px"></div><div class="tk" style="left:1894px;top:871px"></div><div class="tk" style="left:1866px;top:884px"></div><div class="tk" style="left:1894px;top:884px"></div><div class="tk" style="left:1866px;top:896px"></div><div class="tk" style="left:1894px;top:896px"></div><div class="tk" style="left:1866px;top:909px"></div><div class="tk" style="left:1894px;top:909px"></div><div class="tk" style="left:1866px;top:922px"></div><div class="tk" style="left:1894px;top:922px"></div><div class="tk" style="left:1866px;top:934px"></div><div class="tk" style="left:1894px;top:934px"></div><div class="tk" style="left:1866px;top:947px"></div><div class="tk" style="left:1894px;top:947px"></div><div class="tk" style="left:1866px;top:960px"></div><div class="tk" style="left:1894px;top:960px"></div><div class="tk" style="left:1866px;top:972px"></div><div class="tk" style="left:1894px;top:972px"></div><div class="tk" style="left:1866px;top:985px"></div><div class="tk" style="left:1894px;top:985px"></div><div class="tk" style="left:1866px;top:998px"></div><div class="tk" style="left:1894px;top:998px"></div><div class="tk" style="left:1866px;top:1010px"></div><div class="tk" style="left:1894px;top:1010px"></div><div class="tk" style="left:1866px;top:1023px"></div><div class="tk" style="left:1894px;top:1023px"></div><div class="vt" style="left:1871px;top:1018px"></div><svg class="a" style="left:1905px;top:1037px" width="13" height="13" viewBox="0 0 13 13" fill="#b8b8b8"><rect x="9" y="1" width="2" height="2"/><rect x="5" y="5" width="2" height="2"/><rect x="9" y="5" width="2" height="2"/><rect x="1" y="9" width="2" height="2"/><rect x="5" y="9" width="2" height="2"/><rect x="9" y="9" width="2" height="2"/></svg>
<div class="a" style="left:557px;top:486px;width:285px;height:378px;border-radius:6px;border:1px solid #8b93c8;background:linear-gradient(90deg,#1a1c63 0%,#282c7a 25%,#1c1e66 45%,#10114a 70%,#15175a 100%);box-shadow:inset 0 0 0 1px rgba(10,10,60,.55),0 0 3px rgba(0,0,0,.5)"><div class="a" style="left:1px;top:1px;width:281px;height:26px;border-radius:5px 5px 0 0;background:linear-gradient(rgba(255,255,255,.16),rgba(255,255,255,0) 70%)"></div><div class="a" style="left:0px;top:0px;width:128px;height:26px;background:radial-gradient(ellipse at 42% 60%,rgba(150,165,235,.85) 0%,rgba(110,125,215,.5) 40%,rgba(60,70,160,0) 72%)"></div><div class="t" style="left:6px;top:6px;font-size:12px;transform:scaleX(.965);color:#0a0a14;text-shadow:0 0 5px rgba(230,235,255,.9)">RTL-SDR Controller</div><div class="a" style="left:229px;top:-1px;width:49px;height:20px;border:1px solid #8c94c4;border-top:0;border-radius:0 0 4px 4px;background:linear-gradient(#2b2f7e 0%,#1f2268 45%,#12144d 50%,#1a1c5c 100%);box-shadow:inset 0 0 0 1px #2a2d70"><svg class="a" style="left:18px;top:4px" width="13" height="11" viewBox="0 0 13 11"><path d="M1 1 h3 l2.500 2.800 l2.500 -2.800 h3 l-4 4.500 l4 4.500 h-3 l-2.500 -2.800 l-2.500 2.800 h-3 l4 -4.500 z" fill="#fff" stroke="#33364f" stroke-width=".7"/></svg></div><div class="a" style="left:5px;top:26px;width:273px;height:345px;background:#f0f0f0;border:1px solid #20224a;box-shadow:0 0 0 1px #aab0da,inset 0 0 0 1px #fff"></div></div><div class="t" style="left:578px;top:524px;font-size:12px">Device</div><div class="t r" style="right:1099px;top:524px;font-size:12px">R820T</div><div class="co dis" style="left:576px;top:541px;width:247px"></div><div class="t" style="left:578px;top:568px;font-size:12px">Sample Rate</div><div class="co dis" style="left:576px;top:585px;width:247px"><span>1.024 MSPS</span></div><div class="t" style="left:578px;top:612px;font-size:12px">Sampling Mode</div><div class="co dis" style="left:576px;top:629px;width:247px"><span>Quadrature sampling</span></div><div class="cb" style="left:576px;top:664px"></div><div class="t" style="left:593px;top:663px;font-size:12px">Offset Tuning</div><div class="cb" style="left:576px;top:687px"></div><div class="t" style="left:593px;top:686px;font-size:12px">RTL AGC</div><div class="cb" style="left:576px;top:710px"></div><div class="t" style="left:593px;top:709px;font-size:12px">Tuner AGC</div><div class="t" style="left:578px;top:728px;font-size:12px">RF Gain</div><div class="t r" style="right:1098px;top:728px;font-size:12px">25,4 dB</div><div class="a" style="left:575px;top:752px;width:251px;height:4px;border:1px solid #b6b6b6;border-bottom-color:#fafafa;border-right-color:#e4e4e4;background:#e7e7e7;border-radius:1px"></div><svg class="a" style="left:694px;top:745px" width="13" height="20" viewBox="0 0 13 20"><defs><linearGradient id="dg" x1="0" y1="0" x2="1" y2="0"><stop offset="0" stop-color="#fbfbfb"/><stop offset=".5" stop-color="#e9e9e9"/><stop offset="1" stop-color="#cfcfcf"/></linearGradient></defs><path d="M1.500 2.500 q0 -1 1 -1 h8 q1 0 1 1 v10.500 l-5 5 l-5 -5 z" fill="url(#dg)" stroke="#7d7d7d"/></svg><div class="a" style="left:580px;top:766px;width:1px;height:4px;background:#c4c4c4"></div><div class="a" style="left:589px;top:766px;width:1px;height:4px;background:#c4c4c4"></div><div class="a" style="left:598px;top:766px;width:1px;height:4px;background:#c4c4c4"></div><div class="a" style="left:606px;top:766px;width:1px;height:4px;background:#c4c4c4"></div><div class="a" style="left:615px;top:766px;width:1px;height:4px;background:#c4c4c4"></div><div class="a" style="left:623px;top:766px;width:1px;height:4px;background:#c4c4c4"></div><div class="a" style="left:632px;top:766px;width:1px;height:4px;background:#c4c4c4"></div><div class="a" style="left:641px;top:766px;width:1px;height:4px;background:#c4c4c4"></div><div class="a" style="left:649px;top:766px;width:1px;height:4px;background:#c4c4c4"></div><div class="a" style="left:658px;top:766px;width:1px;height:4px;background:#c4c4c4"></div><div class="a" style="left:666px;top:766px;width:1px;height:4px;background:#c4c4c4"></div><div class="a" style="left:675px;top:766px;width:1px;height:4px;background:#c4c4c4"></div><div class="a" style="left:683px;top:766px;width:1px;height:4px;background:#c4c4c4"></div><div class="a" style="left:692px;top:766px;width:1px;height:4px;background:#c4c4c4"></div><div class="a" style="left:701px;top:766px;width:1px;height:4px;background:#c4c4c4"></div><div class="a" style="left:709px;top:766px;width:1px;height:4px;background:#c4c4c4"></div><div class="a" style="left:718px;top:766px;width:1px;height:4px;background:#c4c4c4"></div><div class="a" style="left:726px;top:766px;width:1px;height:4px;background:#c4c4c4"></div><div class="a" style="left:735px;top:766px;width:1px;height:4px;background:#c4c4c4"></div><div class="a" style="left:744px;top:766px;width:1px;height:4px;background:#c4c4c4"></div><div class="a" style="left:752px;top:766px;width:1px;height:4px;background:#c4c4c4"></div><div class="a" style="left:761px;top:766px;width:1px;height:4px;background:#c4c4c4"></div><div class="a" style="left:769px;top:766px;width:1px;height:4px;background:#c4c4c4"></div><div class="a" style="left:778px;top:766px;width:1px;height:4px;background:#c4c4c4"></div><div class="a" style="left:786px;top:766px;width:1px;height:4px;background:#c4c4c4"></div><div class="a" style="left:795px;top:766px;width:1px;height:4px;background:#c4c4c4"></div><div class="a" style="left:804px;top:766px;width:1px;height:4px;background:#c4c4c4"></div><div class="a" style="left:812px;top:766px;width:1px;height:4px;background:#c4c4c4"></div><div class="a" style="left:821px;top:766px;width:1px;height:4px;background:#c4c4c4"></div><div class="t" style="left:578px;top:792px;font-size:12px">Frequency correction (ppm)</div><div class="nb" style="left:733px;top:790px;width:90px"><div class="v" style="font-size:12px">88</div><div class="sp"><i></i></div></div><div class="a" style="left:749px;top:822px;width:73px;height:21px;border:1px solid #3c7fb1;border-radius:3px;background:linear-gradient(#f4f4f4 0%,#ececec 48%,#dddddd 52%,#d0d0d0 100%);box-shadow:inset 0 0 0 1px #48d0f4,inset 0 0 0 2px #c4ecfa;text-align:center;font-size:12px;line-height:19px">Close</div>
<div class="a" style="left:0;top:1050px;width:1920px;height:30px;background:linear-gradient(90deg,#9c937a 0%,#aaa085 2.500%,#c3b896 5.500%,#c6bb99 40%,#c4b997 87.500%,#b3a98b 88.800%,#9f967d 90%,#9a917a 100%)"><div class="a" style="left:0;top:0;width:1920px;height:1px;background:#5a5548"></div><div class="a" style="left:0;top:1px;width:1920px;height:1px;background:rgba(255,255,255,.35)"></div><div class="a" style="left:0;top:2px;width:1920px;height:29px;background:linear-gradient(rgba(255,255,255,.10),rgba(255,255,255,0) 45%,rgba(0,0,0,.05))"></div><div class="a" style="left:290px;top:1px;width:43px;height:29px;border:1px solid #6b6657;border-bottom:0;border-radius:3px 3px 0 0;background:linear-gradient(135deg,#e6e2d0 0%,#d2ccb7 50%,#c4bda5 100%);box-shadow:inset 0 0 0 1px rgba(255,255,255,.7)"></div><div class="a" style="left:428px;top:1px;width:43px;height:29px;border:1px solid #6b6657;border-bottom:0;border-radius:3px 3px 0 0;background:linear-gradient(135deg,#e6e2d0 0%,#d2ccb7 50%,#c4bda5 100%);box-shadow:inset 0 0 0 1px rgba(255,255,255,.7)"></div><div class="a" style="left:474px;top:1px;width:43px;height:29px;border:1px solid #6b6657;border-bottom:0;border-radius:3px 3px 0 0;background:linear-gradient(135deg,#e6e2d0 0%,#d2ccb7 50%,#c4bda5 100%);box-shadow:inset 0 0 0 1px rgba(255,255,255,.7)"></div></div><svg class="a" style="left:6px;top:1043px" width="42" height="37" viewBox="0 0 42 37"><defs><radialGradient id="og" cx=".5" cy=".35" r=".7"><stop offset="0" stop-color="#7fc4ee"/><stop offset=".45" stop-color="#2e7fc0"/><stop offset=".8" stop-color="#154a86"/><stop offset="1" stop-color="#0c2d5a"/></radialGradient></defs><circle cx="21" cy="22" r="18.500" fill="url(#og)" stroke="#26466e" stroke-width="1"/><ellipse cx="21" cy="13" rx="14" ry="8" fill="#fff" opacity=".25"/><path d="M12.500 15.500 q4 -2.500 7.500 -.5 l-1.500 6.500 q-3.500 -2 -7.500 .5 z" fill="#e8562a"/><path d="M21.500 15.300 q4 2 8 -.3 l-1.600 6.400 q-4 2.400 -7.900 .3 z" fill="#8cc63f"/><path d="M10.600 23.500 q4 -2.500 7.500 -.5 l-1.500 6.300 q-3.500 -2 -7.500 .5 z" fill="#3d9be0"/><path d="M19.600 23.300 q4 2 8 -.3 l-1.600 6.300 q-4 2.400 -7.900 .3 z" fill="#f9c21a"/></svg><svg class="a" style="left:71px;top:1056px" width="20" height="20" viewBox="0 0 20 20"><rect x="2" y="2" width="16" height="16" rx="2" fill="#2a8fd8"/><rect x="5" y="5" width="8" height="6" fill="#bfe3f8" stroke="#fff" stroke-width=".8"/><rect x="9" y="8" width="7" height="5" fill="#58b2ea" stroke="#fff" stroke-width=".8"/><rect x="2" y="15" width="16" height="3" rx="1" fill="#e8a020"/></svg><svg class="a" style="left:117px;top:1056px" width="20" height="20" viewBox="0 0 20 20"><rect x="4" y="1.500" width="12" height="17" rx="1" fill="#dfe9f6" stroke="#7fa2cc"/><rect x="6" y="3.500" width="8" height="4" fill="#f3c27a"/><g fill="#6f9bd0"><rect x="6" y="9.500" width="2" height="2"/><rect x="9" y="9.500" width="2" height="2"/><rect x="12" y="9.500" width="2" height="2"/><rect x="6" y="12.500" width="2" height="2"/><rect x="9" y="12.500" width="2" height="2"/><rect x="6" y="15.500" width="2" height="2"/><rect x="9" y="15.500" width="2" height="2"/></g><rect x="12" y="12.500" width="2" height="5" fill="#e88a30"/></svg><svg class="a" style="left:163px;top:1056px" width="20" height="20" viewBox="0 0 20 20"><ellipse cx="10" cy="10" rx="9.500" ry="4" fill="none" stroke="#f2b61c" stroke-width="1.600" transform="rotate(-28 10 10)"/><path d="M16 11.500 H7.200 a3.200 3.200 0 0 0 6.000 1.300 h2.600 a5.800 5.800 0 1 1 .2 -3.800 z M7.300 9.200 h5.700 a2.900 2.900 0 0 0 -5.700 0 z" fill="#2f9be6"/></svg><svg class="a" style="left:208px;top:1056px" width="20" height="20" viewBox="0 0 20 20"><path d="M2 5 h6 l1.500 2 H18 v11 H2 z" fill="#f6d670" stroke="#caa43a" stroke-width=".8"/><rect x="3" y="8" width="14" height="9" fill="#fbe9a4"/><path d="M5 18 v-6 h10 v6 h-2.500 v-3 h-5 v3 z" fill="#3f9be0"/><rect x="3" y="2.500" width="4" height="1.500" fill="#58b848"/></svg><svg class="a" style="left:255px;top:1056px" width="20" height="20" viewBox="0 0 20 20"><rect x="2" y="2" width="16" height="16" rx="1.500" fill="#dfeefa" stroke="#5b9bd6" stroke-width="1.200"/><circle cx="10" cy="10" r="5.800" fill="#f28a1c"/><path d="M8.200 6.800 L13.200 10 L8.200 13.200 z" fill="#fff"/></svg><svg class="a" style="left:301px;top:1056px" width="20" height="20" viewBox="0 0 20 20"><rect x="2" y="2.500" width="15" height="14" fill="#0a1c38" stroke="#4aa8f0" stroke-width="1.200"/><text x="4" y="13.500" font-size="9.500" font-weight="bold" fill="#6cc0ff" font-family="Liberation Sans,sans-serif">Ps</text><circle cx="15.500" cy="15.500" r="3" fill="#f1c232"/><rect x="14" y="14" width="3" height="3" fill="#3c78d8"/></svg><svg class="a" style="left:347px;top:1056px" width="20" height="20" viewBox="0 0 20 20"><ellipse cx="10" cy="14.500" rx="7" ry="4.500" fill="#e8b020"/><circle cx="11" cy="8.500" r="5" fill="#f2c436"/><circle cx="12.500" cy="8" r="2.200" fill="#222"/><path d="M4 3 q4 -3 9 -1" stroke="#8a6a10" fill="none"/><ellipse cx="6" cy="13" rx="3" ry="1.500" fill="#fff6c0"/></svg><svg class="a" style="left:393px;top:1056px" width="20" height="20" viewBox="0 0 20 20"><path d="M10 1.500 c6 0 8.500 2.500 8.500 7.500 s-2.500 7.500 -8.500 7.500 l-3.500 3 v-3.500 c-3.500 -1 -5 -3 -5 -7 c0 -5 2.500 -7.500 8.500 -7.500 z" fill="#8f5db7"/><path d="M10 3.500 c4.500 0 6.500 1.800 6.500 5.500 s-2 5.500 -6.500 5.500 s-6.500 -1.800 -6.500 -5.500 s2 -5.500 6.500 -5.500 z" fill="#fff"/><path d="M7 6 q-1 3 2 5.500 t4 1 l-1.200 -1.600 l-1.200 .5 q-1.800 -1 -2.200 -2.600 l.8 -.8 z" fill="#8f5db7"/></svg><svg class="a" style="left:439px;top:1056px" width="20" height="20" viewBox="0 0 20 20"><circle cx="10" cy="10" r="8.500" fill="#de4a3a"/><path d="M10 10 L2.600 5.800 A8.500 8.500 0 0 0 10 18.500 z" fill="#2ea24c"/><path d="M10 10 L10 18.500 A8.500 8.500 0 0 0 17.400 5.800 z" fill="#f4c20d"/><path d="M10 10 L17.400 5.800 A8.500 8.500 0 0 0 2.600 5.800 z" fill="#de4a3a"/><circle cx="10" cy="10" r="4" fill="#fff"/><circle cx="10" cy="10" r="3.100" fill="#4a8af4"/></svg><svg class="a" style="left:485px;top:1056px" width="20" height="20" viewBox="0 0 20 20"><rect x="2" y="2" width="16" height="16" fill="#1c50b8"/><rect x="2" y="11" width="16" height="7" fill="#123c96"/><path d="M2.500 13 C4 15,5.500 14,7 10 S10 5,11.500 8 S10 14,12.500 11 S15.500 4,17.500 7" fill="none" stroke="#eef3fb" stroke-width="1.400"/></svg><div class="t" style="left:1730px;top:1056px;font-size:12px;color:#f4f0de">RU</div><svg class="a" style="left:1758px;top:1057px" width="70" height="20" viewBox="0 0 70 20"><path d="M3.500 11.500 L7.500 7.500 L11.500 11.500 z" fill="#fff" stroke="#8a8ea8" stroke-width=".6"/><rect x="28" y="4.500" width="11" height="9" fill="#6a655a" stroke="#fff" stroke-width="1.200"/><rect x="30" y="15" width="8" height="1.600" fill="#fff"/><path d="M25 2 v4 M28 2 v4 M24 6 h5 v3 h-5 z M26.500 9 v7.500" stroke="#fff" stroke-width="1.200" fill="none"/><path d="M48.500 7.500 h3 l4.500 -4 v13 l-4.500 -4 h-3 z" fill="#e8e8e8" stroke="#fff" stroke-width=".7"/><path d="M58 7 a4 4 0 0 1 0 6 M60.300 5 a7 7 0 0 1 0 10 M62.600 3.300 a9.500 9.500 0 0 1 0 13.400" stroke="#fff" stroke-width="1.100" fill="none"/></svg><div class="t" style="left:1853px;top:1059px;font-size:12px;color:#fff">13:55</div><div class="a" style="left:1906px;top:1051px;width:13px;height:29px;border:1px solid #6b6657;background:linear-gradient(135deg,#c6bfa8 0%,#a39a82 50%,#978e77 100%);box-shadow:inset 0 0 0 1px rgba(255,255,255,.4)"></div>
</body></html>
